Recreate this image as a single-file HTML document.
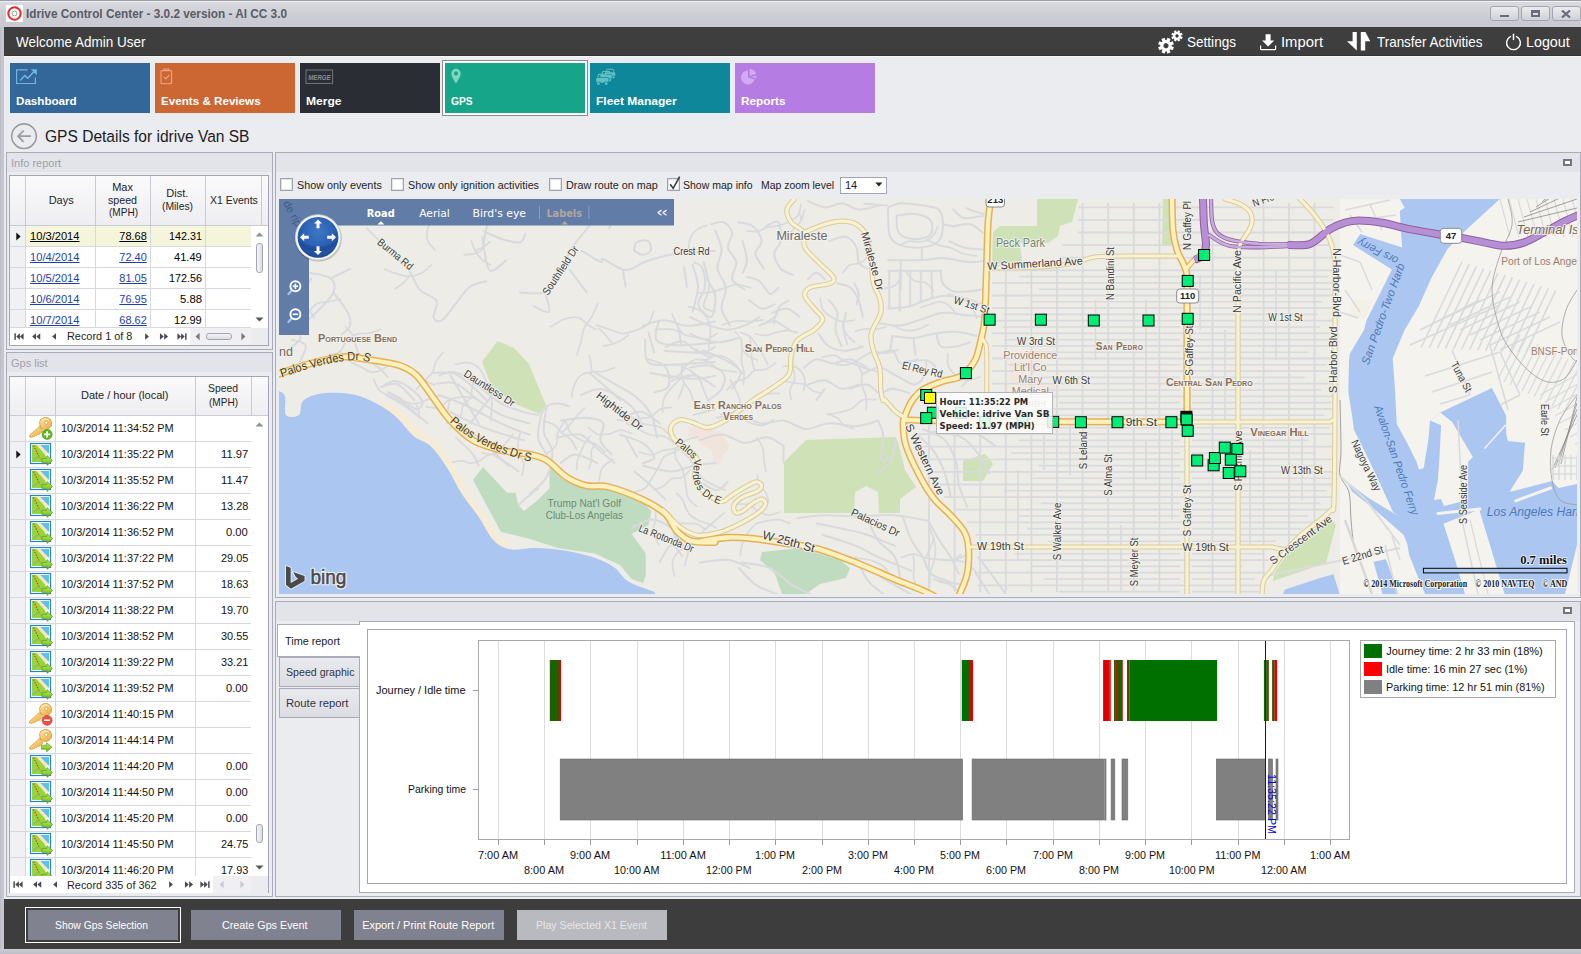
<!DOCTYPE html>
<html><head><meta charset="utf-8"><title>Idrive Control Center</title>
<style>
*{box-sizing:border-box;margin:0;padding:0}
html,body{width:1581px;height:954px;overflow:hidden}
body{background:#ebecf0;font-family:"Liberation Sans",sans-serif;font-size:11px;color:#1e1e1e;position:relative}
.abs{position:absolute}
.t{position:absolute;white-space:nowrap;line-height:1;transform-origin:0 0}
#titlebar{left:0;top:0;width:1581px;height:27px;background:linear-gradient(#9a9bab 0,#9a9bab 1px,#f1f1f4 1px,#f1f1f4 2px,#d9dade 2px,#d2d3d9 10px,#cbccd3 18px,#c9cad1 27px)}
#frameL{left:0;top:27px;width:4px;height:927px;background:linear-gradient(90deg,#bcbdc6 0,#bcbdc6 1px,#c7c8cf 1px,#c5c6cd 4px)}
#frameR{display:none}
#frameB{left:0;top:949px;width:1581px;height:5px;background:linear-gradient(#cfd0d6 0,#c5c6cd 2px,#c3c4cb 4px,#b6b7c0 5px)}
#hdr{left:4px;top:27px;width:1577px;height:29px;background:#3e3e3e}
.hdrt{color:#fff;font-size:15px;top:34px}
.tile{position:absolute;top:63px;width:140px;height:50px}
.tile b{position:absolute;left:6px;top:32px;font-size:11.5px;color:#fff;font-weight:bold;white-space:nowrap;line-height:1}
.wb{position:absolute;top:6px;width:29px;height:15px;border:1px solid #a4a5ae;border-radius:3px;background:linear-gradient(#ececf0,#d0d1d7)}
.panel{position:absolute;border:1px solid #a9abb8;background:#ebecf0}
.phead{position:absolute;left:0;top:0;right:0;height:19px;background:#e3e4e9;color:#a0a1a8;font-size:11px}
.phead span{position:absolute;left:4px;top:5px;line-height:1;white-space:nowrap}
.grid{position:absolute;border:1px solid #a3a5b3;background:#fff;overflow:hidden}
.gh{position:absolute;background:linear-gradient(#fafafb,#eeeef2);border-right:1px solid #c9cad3;border-bottom:1px solid #c9cad3;color:#1e1e1e;text-align:center;font-size:11px;line-height:12px;display:flex;align-items:center;justify-content:center}
.cell{position:absolute;height:21px;border-right:1px solid #d4d5dd;border-bottom:1px solid #d4d5dd;font-size:11px;line-height:20px;white-space:nowrap;overflow:hidden}
.r{text-align:right;padding-right:4px}
.l{padding-left:4px}
.lnk{color:#1f3fa8;text-decoration:underline}
.cb{position:absolute;top:178px;width:13px;height:13px;border:1px solid #a0a2b0;background:#fff;box-shadow:inset 0 0 0 1px #e1e2ea}
.cbl{top:180px;font-size:11px;color:#1e1e1e}
.btn{position:absolute;top:910px;width:150px;height:30px;background:#81828f;color:#fff;font-size:11px;text-align:center;line-height:30px;white-space:nowrap}
.tab{position:absolute;left:3px;width:80px;height:30px;border:1px solid #a9abb8;border-right:none;background:linear-gradient(#e9e9ee,#d9dae0);font-size:11px;color:#33343c;line-height:28px;padding-left:7px;white-space:nowrap}
</style></head><body>

<!-- sec_chrome -->
<div id="titlebar" class="abs"></div>
<svg class="abs" style="left:6px;top:5px" width="17" height="17" viewBox="0 0 17 17"><rect x="0" y="0" width="17" height="17" fill="#fff"/><circle cx="8.5" cy="8.5" r="6.2" fill="none" stroke="#e8262a" stroke-width="2"/><circle cx="8.5" cy="8.5" r="2.4" fill="none" stroke="#999" stroke-width="1"/></svg>
<div class="wb" style="left:1490px"><i class="abs" style="left:9px;top:8px;width:9px;height:2px;background:#6b6c7a"></i></div>
<div class="wb" style="left:1521px"><i class="abs" style="left:9px;top:3px;width:9px;height:7px;border:2px solid #6b6c7a;border-top-width:3px"></i></div>
<div class="wb" style="left:1552px;width:29px"><svg class="abs" style="left:8px;top:3px" width="10" height="8" viewBox="0 0 10 8"><path d="M1 0.5L9 7.5M9 0.5L1 7.5" stroke="#6b6c7a" stroke-width="2.2" fill="none"/></svg></div>
<div id="frameL" class="abs"></div><div id="frameR" class="abs"></div><div id="frameB" class="abs"></div>
<div id="hdr" class="abs"></div>
<div class="abs" style="left:4px;top:55px;width:1577px;height:1px;background:#343434"></div><div class="abs" style="left:4px;top:56px;width:1577px;height:1px;background:#f5f6fa"></div>
<!-- header icons -->
<svg class="abs" style="left:1156px;top:28px" width="28" height="27" viewBox="0 0 28 27" fill="#fff"><g transform="translate(10,17.7) rotate(22.5)"><circle r="5.6"/><rect x="-1.65" y="-7.90" width="3.30" height="3.50" transform="rotate(0)"/><rect x="-1.65" y="-7.90" width="3.30" height="3.50" transform="rotate(45)"/><rect x="-1.65" y="-7.90" width="3.30" height="3.50" transform="rotate(90)"/><rect x="-1.65" y="-7.90" width="3.30" height="3.50" transform="rotate(135)"/><rect x="-1.65" y="-7.90" width="3.30" height="3.50" transform="rotate(180)"/><rect x="-1.65" y="-7.90" width="3.30" height="3.50" transform="rotate(225)"/><rect x="-1.65" y="-7.90" width="3.30" height="3.50" transform="rotate(270)"/><rect x="-1.65" y="-7.90" width="3.30" height="3.50" transform="rotate(315)"/><circle r="2.5" fill="#3d3d3d"/></g><g transform="translate(21,7.9) rotate(22.5)"><circle r="3.8"/><rect x="-1.20" y="-5.60" width="2.40" height="3.00" transform="rotate(0)"/><rect x="-1.20" y="-5.60" width="2.40" height="3.00" transform="rotate(45)"/><rect x="-1.20" y="-5.60" width="2.40" height="3.00" transform="rotate(90)"/><rect x="-1.20" y="-5.60" width="2.40" height="3.00" transform="rotate(135)"/><rect x="-1.20" y="-5.60" width="2.40" height="3.00" transform="rotate(180)"/><rect x="-1.20" y="-5.60" width="2.40" height="3.00" transform="rotate(225)"/><rect x="-1.20" y="-5.60" width="2.40" height="3.00" transform="rotate(270)"/><rect x="-1.20" y="-5.60" width="2.40" height="3.00" transform="rotate(315)"/><circle r="1.7" fill="#3d3d3d"/></g></svg>
<svg class="abs" style="left:1259px;top:33px" width="18" height="18" viewBox="0 0 18 18"><path d="M6.6 1.3h5v6.3h3.6L9.1 13.6 3 7.6h3.6z" fill="#fff"/><path d="M1.6 12.4v3.4a.9.9 0 0 0 .9.9h13.2a.9.9 0 0 0 .9-.9v-3.4" fill="none" stroke="#fff" stroke-width="1.2"/></svg>
<svg class="abs" style="left:1346px;top:31px" width="26" height="21" viewBox="0 0 26 21" fill="#fff"><path d="M6.6 1h4.2v18.4L1 10.2h5.6z"/><path d="M14.8 19.4V1h4.6l4.9 9.2h-5.1v9.2z"/></svg>
<svg class="abs" style="left:1504px;top:33px" width="19" height="19" viewBox="0 0 19 19"><path d="M6.4 3.6a6.9 6.9 0 1 0 6.2 0" fill="none" stroke="#fff" stroke-width="1.4" stroke-linecap="round"/><path d="M9.5 1.2v5.2" stroke="#fff" stroke-width="1.5" stroke-linecap="round"/></svg>

<div class="t" style="left:26.00px;top:8.14px;font-size:12px;font-weight:700;color:#5a5b66;transform:scaleX(0.9826);">Idrive Control Center - 3.0.2 version - Al CC 3.0</div>
<div class="t" style="left:16.00px;top:33.80px;font-size:15px;color:#ffffff;transform:scaleX(0.8997);">Welcome Admin User</div>
<div class="t" style="left:1187.20px;top:33.80px;font-size:15px;color:#ffffff;transform:scaleX(0.9040);">Settings</div>
<div class="t" style="left:1281.00px;top:33.80px;font-size:15px;color:#ffffff;transform:scaleX(0.9879);">Import</div>
<div class="t" style="left:1376.50px;top:33.80px;font-size:15px;color:#ffffff;transform:scaleX(0.8955);">Transfer Activities</div>
<div class="t" style="left:1526.30px;top:33.80px;font-size:15px;color:#ffffff;transform:scaleX(0.9523);">Logout</div>
<div class="abs" style="left:442px;top:60px;width:146px;height:56px;border:1px solid #8c8d94;background:#fff"></div>
<div class="tile" style="left:10px;background:#336699"></div>
<div class="t" style="left:16.00px;top:95.57px;font-size:11.5px;font-weight:700;color:#ffffff;transform:scaleX(1.0104);">Dashboard</div>
<div class="tile" style="left:155px;background:#cc6633"></div>
<div class="t" style="left:161.00px;top:95.57px;font-size:11.5px;font-weight:700;color:#ffffff;transform:scaleX(1.0118);">Events &amp; Reviews</div>
<div class="tile" style="left:300px;background:#2a2d34"></div>
<div class="t" style="left:306.00px;top:95.57px;font-size:11.5px;font-weight:700;color:#ffffff;transform:scaleX(1.0509);">Merge</div>
<div class="tile" style="left:445px;background:#17a589"></div>
<div class="t" style="left:451.00px;top:95.57px;font-size:11.5px;font-weight:700;color:#ffffff;transform:scaleX(0.8890);">GPS</div>
<div class="tile" style="left:590px;background:#0d8799"></div>
<div class="t" style="left:596.00px;top:95.57px;font-size:11.5px;font-weight:700;color:#ffffff;transform:scaleX(1.0436);">Fleet Manager</div>
<div class="tile" style="left:735px;background:#b57de3"></div>
<div class="t" style="left:741.00px;top:95.57px;font-size:11.5px;font-weight:700;color:#ffffff;transform:scaleX(1.0264);">Reports</div>
<!-- tile icons -->
<svg class="abs" style="left:15px;top:68px" width="24" height="18" viewBox="0 0 24 18" fill="none" stroke="#6fb6e6" stroke-width="1.2"><path d="M12.6 1.9H1.6v13.6h18.8V9.4"/><path d="M5.2 12.4l4.6-4.8 3 2.6 6.8-7.2" stroke-width="1.5"/><path d="M15.8 1.2h6v6z" fill="#6fb6e6" stroke="none"/></svg>
<svg class="abs" style="left:160px;top:68px" width="13" height="17" viewBox="0 0 13 17" fill="none" stroke="#eea585" stroke-width="1.1"><rect x="1" y="2.6" width="10.6" height="13.2" rx="1"/><path d="M4 2.4V1h4.8v1.4" /><path d="M3.8 8.8l2 2 3.4-3.8" stroke-width="1.2"/></svg>
<svg class="abs" style="left:305px;top:69px" width="29" height="16" viewBox="0 0 29 16"><rect x="1" y="1" width="26.6" height="13.4" fill="none" stroke="#74777e" stroke-width="1"/><text x="3.2" y="11" font-family="Liberation Sans, sans-serif" font-size="7.6" font-weight="700" font-style="italic" fill="#8a8d93" textLength="22.5" lengthAdjust="spacingAndGlyphs">MERGE</text></svg>
<svg class="abs" style="left:450px;top:68px" width="12" height="17" viewBox="0 0 12 17"><path d="M6 .8a4.7 4.7 0 0 0-4.7 4.7C1.3 9 6 15.6 6 15.6S10.7 9 10.7 5.5A4.7 4.7 0 0 0 6 .8zm0 2.7a2 2 0 1 1 0 4 2 2 0 0 1 0-4z" fill="#7fd4bd" fill-rule="evenodd"/></svg>
<svg class="abs" style="left:595px;top:67px" width="24" height="19" viewBox="0 0 24 19" fill="#62c1c4"><g transform="translate(9.4,1.2) scale(.86)" stroke="#0d8799" stroke-width="1.4" paint-order="stroke"><path d="M1.6 5.2L3 1.2h7L11.4 5.2" fill="none" stroke="#62c1c4" stroke-width="1.1"/><rect x=".3" y="4.8" width="12.4" height="5" rx="1.3"/><rect x="1.3" y="9.4" width="2.6" height="2.3"/><rect x="9.1" y="9.4" width="2.6" height="2.3"/></g><g transform="translate(5,3.4) scale(.93)" stroke="#0d8799" stroke-width="1.4" paint-order="stroke"><path d="M1.6 5.2L3 1.2h7L11.4 5.2" fill="none" stroke="#62c1c4" stroke-width="1.1"/><rect x=".3" y="4.8" width="12.4" height="5" rx="1.3"/><rect x="1.3" y="9.4" width="2.6" height="2.3"/><rect x="9.1" y="9.4" width="2.6" height="2.3"/></g><g transform="translate(.8,6)" stroke="#0d8799" stroke-width="1.4" paint-order="stroke"><path d="M1.6 5.2L3 1.2h7L11.4 5.2" fill="none" stroke="#62c1c4" stroke-width="1.1"/><rect x=".3" y="4.8" width="12.4" height="5" rx="1.3"/><rect x="1.3" y="9.4" width="2.6" height="2.3"/><rect x="9.1" y="9.4" width="2.6" height="2.3"/></g></svg>
<svg class="abs" style="left:740px;top:68px" width="18" height="18" viewBox="0 0 18 18" fill="#d2aaf0"><path d="M8 2.4A7 7 0 1 0 14.6 11.6L8 9.4z"/><path d="M9.6 1a7 7 0 0 1 6.6 4.8L9.6 8z"/><path d="M16.4 7.4a7 7 0 0 1 .1 3.2L10.8 9z" opacity=".8"/></svg>

<svg class="abs" style="left:10px;top:122px" width="28" height="28" viewBox="0 0 28 28"><circle cx="14" cy="14.2" r="12.3" fill="none" stroke="#9b9b9f" stroke-width="1.6"/><path d="M21 14.2H8.2M13.6 8.6L8 14.2l5.6 5.6" fill="none" stroke="#9b9b9f" stroke-width="1.7"/></svg>
<div class="t" style="left:45.40px;top:127.80px;font-size:16.3px;color:#1b1b25;transform:scaleX(0.9549);">GPS Details for idrive Van SB</div>
<!-- sec_left -->
<div class="panel" style="left:6px;top:152px;width:267px;height:198px"><div class="phead"><span>Info report</span></div></div>
<div class="grid" style="left:9px;top:175px;width:260px;height:171px"></div>
<div class="gh" style="left:10px;top:176px;width:16px;height:50px;"></div>
<div class="gh" style="left:26px;top:176px;width:70px;height:50px;"></div>
<div class="gh" style="left:96px;top:176px;width:55px;height:50px;"></div>
<div class="gh" style="left:151px;top:176px;width:55px;height:50px;"></div>
<div class="gh" style="left:206px;top:176px;width:56px;height:50px;"></div>
<div class="gh" style="left:262px;top:176px;width:6px;height:50px;border-right:none"></div>
<div class="t" style="left:48.67px;top:194.69px;font-size:11px;">Days</div>
<div class="t" style="left:112.21px;top:181.69px;font-size:11px;">Max</div>
<div class="t" style="left:108.30px;top:194.69px;font-size:11px;transform:scaleX(0.9672);">speed</div>
<div class="t" style="left:108.50px;top:207.29px;font-size:11px;transform:scaleX(0.9125);">(MPH)</div>
<div class="t" style="left:166.30px;top:188.49px;font-size:11px;">Dist.</div>
<div class="t" style="left:162.10px;top:201.49px;font-size:11px;transform:scaleX(0.9394);">(Miles)</div>
<div class="t" style="left:209.60px;top:194.69px;font-size:11px;transform:scaleX(0.9533);">X1 Events</div>
<div class="abs" style="left:10px;top:226px;width:16px;height:21px;background:#f1f1f5;border-right:1px solid #d6d7df;border-bottom:1px solid #d6d7df"></div>
<div class="abs" style="left:26px;top:226px;width:70px;height:21px;background:#f5f5dc;border-right:1px solid #d6d7df;border-bottom:1px solid #d6d7df"></div>
<div class="abs" style="left:96px;top:226px;width:55px;height:21px;background:#f5f5dc;border-right:1px solid #d6d7df;border-bottom:1px solid #d6d7df"></div>
<div class="abs" style="left:151px;top:226px;width:55px;height:21px;background:#f5f5dc;border-right:1px solid #d6d7df;border-bottom:1px solid #d6d7df"></div>
<div class="abs" style="left:206px;top:226px;width:45px;height:21px;background:#f5f5dc;border-bottom:1px solid #d6d7df"></div>
<div class="t" style="left:30.40px;top:230.89px;font-size:11px;color:#000;transform:scaleX(1.0115);text-decoration:underline;">10/3/2014</div>
<div class="t" style="left:119.30px;top:230.89px;font-size:11px;color:#000;text-decoration:underline;">78.68</div>
<div class="t" style="left:168.60px;top:230.89px;font-size:11px;color:#000;transform:scaleX(0.9805);">142.31</div>
<div class="abs" style="left:10px;top:247px;width:16px;height:21px;background:#f1f1f5;border-right:1px solid #d6d7df;border-bottom:1px solid #d6d7df"></div>
<div class="abs" style="left:26px;top:247px;width:70px;height:21px;background:#fff;border-right:1px solid #d6d7df;border-bottom:1px solid #d6d7df"></div>
<div class="abs" style="left:96px;top:247px;width:55px;height:21px;background:#fff;border-right:1px solid #d6d7df;border-bottom:1px solid #d6d7df"></div>
<div class="abs" style="left:151px;top:247px;width:55px;height:21px;background:#fff;border-right:1px solid #d6d7df;border-bottom:1px solid #d6d7df"></div>
<div class="abs" style="left:206px;top:247px;width:45px;height:21px;background:#fff;border-bottom:1px solid #d6d7df"></div>
<div class="t" style="left:30.40px;top:251.89px;font-size:11px;color:#1f3fa8;transform:scaleX(1.0115);text-decoration:underline;">10/4/2014</div>
<div class="t" style="left:119.30px;top:251.89px;font-size:11px;color:#1f3fa8;text-decoration:underline;">72.40</div>
<div class="t" style="left:174.10px;top:251.89px;font-size:11px;color:#000;">41.49</div>
<div class="abs" style="left:10px;top:268px;width:16px;height:21px;background:#f1f1f5;border-right:1px solid #d6d7df;border-bottom:1px solid #d6d7df"></div>
<div class="abs" style="left:26px;top:268px;width:70px;height:21px;background:#fff;border-right:1px solid #d6d7df;border-bottom:1px solid #d6d7df"></div>
<div class="abs" style="left:96px;top:268px;width:55px;height:21px;background:#fff;border-right:1px solid #d6d7df;border-bottom:1px solid #d6d7df"></div>
<div class="abs" style="left:151px;top:268px;width:55px;height:21px;background:#fff;border-right:1px solid #d6d7df;border-bottom:1px solid #d6d7df"></div>
<div class="abs" style="left:206px;top:268px;width:45px;height:21px;background:#fff;border-bottom:1px solid #d6d7df"></div>
<div class="t" style="left:30.40px;top:272.89px;font-size:11px;color:#1f3fa8;transform:scaleX(1.0115);text-decoration:underline;">10/5/2014</div>
<div class="t" style="left:119.30px;top:272.89px;font-size:11px;color:#1f3fa8;text-decoration:underline;">81.05</div>
<div class="t" style="left:168.60px;top:272.89px;font-size:11px;color:#000;transform:scaleX(0.9805);">172.56</div>
<div class="abs" style="left:10px;top:289px;width:16px;height:21px;background:#f1f1f5;border-right:1px solid #d6d7df;border-bottom:1px solid #d6d7df"></div>
<div class="abs" style="left:26px;top:289px;width:70px;height:21px;background:#fff;border-right:1px solid #d6d7df;border-bottom:1px solid #d6d7df"></div>
<div class="abs" style="left:96px;top:289px;width:55px;height:21px;background:#fff;border-right:1px solid #d6d7df;border-bottom:1px solid #d6d7df"></div>
<div class="abs" style="left:151px;top:289px;width:55px;height:21px;background:#fff;border-right:1px solid #d6d7df;border-bottom:1px solid #d6d7df"></div>
<div class="abs" style="left:206px;top:289px;width:45px;height:21px;background:#fff;border-bottom:1px solid #d6d7df"></div>
<div class="t" style="left:30.40px;top:293.89px;font-size:11px;color:#1f3fa8;transform:scaleX(1.0115);text-decoration:underline;">10/6/2014</div>
<div class="t" style="left:119.30px;top:293.89px;font-size:11px;color:#1f3fa8;text-decoration:underline;">76.95</div>
<div class="t" style="left:179.60px;top:293.89px;font-size:11px;color:#000;transform:scaleX(1.0270);">5.88</div>
<div class="abs" style="left:10px;top:310px;width:16px;height:18px;background:#f1f1f5;border-right:1px solid #d6d7df;border-bottom:1px solid #d6d7df"></div>
<div class="abs" style="left:26px;top:310px;width:70px;height:18px;background:#fff;border-right:1px solid #d6d7df;border-bottom:1px solid #d6d7df"></div>
<div class="abs" style="left:96px;top:310px;width:55px;height:18px;background:#fff;border-right:1px solid #d6d7df;border-bottom:1px solid #d6d7df"></div>
<div class="abs" style="left:151px;top:310px;width:55px;height:18px;background:#fff;border-right:1px solid #d6d7df;border-bottom:1px solid #d6d7df"></div>
<div class="abs" style="left:206px;top:310px;width:45px;height:18px;background:#fff;border-bottom:1px solid #d6d7df"></div>
<div class="t" style="left:30.40px;top:314.89px;font-size:11px;color:#1f3fa8;transform:scaleX(1.0115);text-decoration:underline;">10/7/2014</div>
<div class="t" style="left:119.30px;top:314.89px;font-size:11px;color:#1f3fa8;text-decoration:underline;">68.62</div>
<div class="t" style="left:174.10px;top:314.89px;font-size:11px;color:#000;">12.99</div>
<svg class="abs" style="left:16px;top:232px" width="5" height="9" viewBox="0 0 5 9"><path d="M.3 .5v8L4.6 4.5z" fill="#111"/></svg>
<div class="abs" style="left:251px;top:226px;width:17px;height:102px;background:#fff"></div>
<svg class="abs" style="left:255px;top:232px" width="9" height="5" viewBox="0 0 9 5"><path d="M.5 4.6h8L4.5 .6z" fill="#8e909c"/></svg>
<svg class="abs" style="left:255px;top:317px" width="9" height="5" viewBox="0 0 9 5"><path d="M.5 .4h8l-4 4z" fill="#55565f"/></svg>
<div class="abs" style="left:256px;top:243px;width:7px;height:30px;border:1px solid #a3a5b3;border-radius:3px;background:linear-gradient(90deg,#f4f4f7,#dcdde3)"></div>
<div class="abs" style="left:10px;top:328px;width:258px;height:17px;background:#fff"></div>
<div class="abs" style="left:190px;top:328px;width:61px;height:17px;background:#f0f0f4"></div>
<div class="abs" style="left:251px;top:328px;width:17px;height:17px;background:#ebecf0"></div>
<svg class="abs" style="left:13.5px;top:332px" width="12" height="9" viewBox="0 0 12 9" fill="#484956"><g transform="translate(.4 .9) scale(.92 .82)"><rect x="0" y="0.5" width="1.6" height="8"/><path d="M6 .5v8L2 4.5zM10 .5v8L6 4.5z"/></g></svg>
<svg class="abs" style="left:31px;top:332px" width="12" height="9" viewBox="0 0 12 9" fill="#484956"><g transform="translate(.4 .9) scale(.92 .82)"><path d="M5 .5v8L.8 4.5zM9.6 .5v8L5.4 4.5z"/></g></svg>
<svg class="abs" style="left:51px;top:332px" width="12" height="9" viewBox="0 0 12 9" fill="#484956"><g transform="translate(.4 .9) scale(.92 .82)"><path d="M5 .5v8L.8 4.5z"/></g></svg>
<svg class="abs" style="left:144px;top:332px" width="12" height="9" viewBox="0 0 12 9" fill="#484956"><g transform="translate(.4 .9) scale(.92 .82)"><path d="M.8 .5v8L5 4.5z"/></g></svg>
<svg class="abs" style="left:159px;top:332px" width="12" height="9" viewBox="0 0 12 9" fill="#484956"><g transform="translate(.4 .9) scale(.92 .82)"><path d="M.6 .5v8l4.2-4zM5.2 .5v8l4.2-4z"/></g></svg>
<svg class="abs" style="left:176.5px;top:332px" width="12" height="9" viewBox="0 0 12 9" fill="#484956"><g transform="translate(.4 .9) scale(.92 .82)"><path d="M0 .5v8l4-4zM4 .5v8l4-4z"/><rect x="8.4" y=".5" width="1.6" height="8"/></g></svg>
<div class="t" style="left:67.10px;top:330.99px;font-size:11px;transform:scaleX(0.9902);">Record 1 of 8</div>
<svg class="abs" style="left:195px;top:332px" width="5" height="9" viewBox="0 0 5 9"><path d="M4.6 .8v7.4L.6 4.5z" fill="#777985"/></svg>
<svg class="abs" style="left:241px;top:332px" width="5" height="9" viewBox="0 0 5 9"><path d="M.4 .8v7.4l4-3.7z" fill="#777985"/></svg>
<div class="abs" style="left:206px;top:333px;width:26px;height:7px;border:1px solid #a3a5b3;border-radius:3px;background:linear-gradient(#f4f4f7,#dcdde3)"></div>
<div class="panel" style="left:6px;top:352px;width:267px;height:545px"><div class="phead"><span>Gps list</span></div></div>
<div class="grid" style="left:9px;top:376px;width:260px;height:517px"></div>
<div class="gh" style="left:10px;top:377px;width:16px;height:39px;"></div>
<div class="gh" style="left:26px;top:377px;width:30px;height:39px;"></div>
<div class="gh" style="left:56px;top:377px;width:140px;height:39px;"></div>
<div class="gh" style="left:196px;top:377px;width:56px;height:39px;"></div>
<div class="gh" style="left:252px;top:377px;width:16px;height:39px;border-right:none"></div>
<div class="t" style="left:80.95px;top:390.49px;font-size:11px;">Date / hour (local)</div>
<div class="t" style="left:208.30px;top:383.49px;font-size:11px;transform:scaleX(0.9430);">Speed</div>
<div class="t" style="left:208.80px;top:396.69px;font-size:11px;transform:scaleX(0.9125);">(MPH)</div>
<svg width="0" height="0" style="position:absolute"><defs>
<linearGradient id="kg" x1="0" y1="0" x2="1" y2="1"><stop offset="0" stop-color="#fde7a6"/><stop offset="1" stop-color="#e9a93a"/></linearGradient>
<linearGradient id="ag" x1="0" y1="0" x2="0" y2="1"><stop offset="0" stop-color="#c6ec58"/><stop offset="1" stop-color="#66b516"/></linearGradient>
<g id="ikey" transform="translate(-.8 .9)"><path d="M12.4 9.4L2.2 18.6 2.3 20 4.5 20.6 5.9 19.6 6.9 20 8.3 18.7 9.3 18.9 10.7 17.5 11.7 17.7 15.9 13.8z" fill="url(#kg)" stroke="#d19633" stroke-width=".7" stroke-linejoin="round"/><path d="M13.6 2.6l3.2-1.9h3.4l3 1.9 1.3 3.1-.5 3.5-2.4 2.6-3.4.9-3.4-1.1-2-2.8-.4-3.6z" fill="url(#kg)" stroke="#d19633" stroke-width=".8" stroke-linejoin="round"/><path d="M14.2 4.2l2.6-2h3l2.4 1.5" fill="none" stroke="#fff3c8" stroke-width="1" opacity=".8"/><circle cx="19.1" cy="5.9" r="1.5" fill="#fff" stroke="#c98f30" stroke-width=".6"/></g>
<g id="ikp"><use href="#ikey"/><circle cx="19.1" cy="18.4" r="5" fill="#5cb81e" stroke="#3f9110" stroke-width=".6"/><path d="M19.1 15.3v6.2M16 18.4h6.2" stroke="#fff" stroke-width="1.8"/></g>
<g id="ikm"><use href="#ikey"/><circle cx="19.1" cy="18.4" r="5" fill="#ea5043" stroke="#cf3a2e" stroke-width=".6"/><path d="M16.2 18.2h5.8" stroke="#fff" stroke-width="1.6"/></g>
<g id="ika"><use href="#ikey"/><path d="M13.4 17.2h5.2v-2.6l5.4 4.6-5.4 4.6v-2.6h-5.2z" fill="url(#ag)" stroke="#4c9410" stroke-width=".6"/></g>
<g id="imap"><rect x="2.5" y="1.5" width="20" height="20" fill="#fff" stroke="#2a84c0" stroke-width="1.2"/><rect x="4" y="3" width="17" height="17" fill="#97d638"/><path d="M8.5 3H21v14z" fill="#fbe6c0"/><path d="M12.5 3H21v9z" fill="#5cc1f1"/><path d="M17 13l4-1.5V17z" fill="#fff"/><path d="M5.5 3.5l5.5 11" stroke="#e8281c" stroke-width="1.1" stroke-dasharray="1.4 1.4" fill="none"/><path d="M5 18.5l5.5-4 3 3.5" stroke="#9a9a9a" stroke-width=".9" fill="none"/><path d="M14 16.4h5v-2.8l5.6 4.9-5.6 4.9v-2.8h-5z" fill="url(#ag)" stroke="#4c9410" stroke-width=".6"/></g>
</defs></svg>
<div class="abs" style="left:10px;top:416px;width:16px;height:26px;background:#f1f1f5;border-right:1px solid #d6d7df;border-bottom:1px solid #d6d7df"></div>
<div class="abs" style="left:26px;top:416px;width:30px;height:26px;border-right:1px solid #d6d7df;border-bottom:1px solid #d6d7df"></div>
<div class="abs" style="left:56px;top:416px;width:140px;height:26px;border-right:1px solid #d6d7df;border-bottom:1px solid #d6d7df"></div>
<div class="abs" style="left:196px;top:416px;width:55px;height:26px;border-bottom:1px solid #d6d7df"></div>
<svg class="abs" style="left:28px;top:416px" width="26" height="26" viewBox="0 0 26 26"><use href="#ikp"/></svg>
<div class="t" style="left:60.70px;top:422.89px;font-size:11px;color:#111;transform:scaleX(0.9915);">10/3/2014 11:34:52 PM</div>
<div class="abs" style="left:10px;top:442px;width:16px;height:26px;background:#f1f1f5;border-right:1px solid #d6d7df;border-bottom:1px solid #d6d7df"></div>
<div class="abs" style="left:26px;top:442px;width:30px;height:26px;border-right:1px solid #d6d7df;border-bottom:1px solid #d6d7df"></div>
<div class="abs" style="left:56px;top:442px;width:140px;height:26px;border-right:1px solid #d6d7df;border-bottom:1px solid #d6d7df"></div>
<div class="abs" style="left:196px;top:442px;width:55px;height:26px;border-bottom:1px solid #d6d7df"></div>
<svg class="abs" style="left:28px;top:442px" width="26" height="26" viewBox="0 0 26 26"><use href="#imap"/></svg>
<div class="t" style="left:60.70px;top:448.89px;font-size:11px;color:#111;transform:scaleX(0.9915);">10/3/2014 11:35:22 PM</div>
<div class="t" style="left:220.55px;top:448.89px;font-size:11px;color:#111;transform:scaleX(1.0199);">11.97</div>
<div class="abs" style="left:10px;top:468px;width:16px;height:26px;background:#f1f1f5;border-right:1px solid #d6d7df;border-bottom:1px solid #d6d7df"></div>
<div class="abs" style="left:26px;top:468px;width:30px;height:26px;border-right:1px solid #d6d7df;border-bottom:1px solid #d6d7df"></div>
<div class="abs" style="left:56px;top:468px;width:140px;height:26px;border-right:1px solid #d6d7df;border-bottom:1px solid #d6d7df"></div>
<div class="abs" style="left:196px;top:468px;width:55px;height:26px;border-bottom:1px solid #d6d7df"></div>
<svg class="abs" style="left:28px;top:468px" width="26" height="26" viewBox="0 0 26 26"><use href="#imap"/></svg>
<div class="t" style="left:60.70px;top:474.89px;font-size:11px;color:#111;transform:scaleX(0.9915);">10/3/2014 11:35:52 PM</div>
<div class="t" style="left:220.55px;top:474.89px;font-size:11px;color:#111;transform:scaleX(1.0199);">11.47</div>
<div class="abs" style="left:10px;top:494px;width:16px;height:26px;background:#f1f1f5;border-right:1px solid #d6d7df;border-bottom:1px solid #d6d7df"></div>
<div class="abs" style="left:26px;top:494px;width:30px;height:26px;border-right:1px solid #d6d7df;border-bottom:1px solid #d6d7df"></div>
<div class="abs" style="left:56px;top:494px;width:140px;height:26px;border-right:1px solid #d6d7df;border-bottom:1px solid #d6d7df"></div>
<div class="abs" style="left:196px;top:494px;width:55px;height:26px;border-bottom:1px solid #d6d7df"></div>
<svg class="abs" style="left:28px;top:494px" width="26" height="26" viewBox="0 0 26 26"><use href="#imap"/></svg>
<div class="t" style="left:60.70px;top:500.89px;font-size:11px;color:#111;transform:scaleX(0.9915);">10/3/2014 11:36:22 PM</div>
<div class="t" style="left:220.55px;top:500.89px;font-size:11px;color:#111;transform:scaleX(0.9898);">13.28</div>
<div class="abs" style="left:10px;top:520px;width:16px;height:26px;background:#f1f1f5;border-right:1px solid #d6d7df;border-bottom:1px solid #d6d7df"></div>
<div class="abs" style="left:26px;top:520px;width:30px;height:26px;border-right:1px solid #d6d7df;border-bottom:1px solid #d6d7df"></div>
<div class="abs" style="left:56px;top:520px;width:140px;height:26px;border-right:1px solid #d6d7df;border-bottom:1px solid #d6d7df"></div>
<div class="abs" style="left:196px;top:520px;width:55px;height:26px;border-bottom:1px solid #d6d7df"></div>
<svg class="abs" style="left:28px;top:520px" width="26" height="26" viewBox="0 0 26 26"><use href="#imap"/></svg>
<div class="t" style="left:60.70px;top:526.89px;font-size:11px;color:#111;transform:scaleX(0.9915);">10/3/2014 11:36:52 PM</div>
<div class="t" style="left:226.00px;top:526.89px;font-size:11px;color:#111;transform:scaleX(1.0177);">0.00</div>
<div class="abs" style="left:10px;top:546px;width:16px;height:26px;background:#f1f1f5;border-right:1px solid #d6d7df;border-bottom:1px solid #d6d7df"></div>
<div class="abs" style="left:26px;top:546px;width:30px;height:26px;border-right:1px solid #d6d7df;border-bottom:1px solid #d6d7df"></div>
<div class="abs" style="left:56px;top:546px;width:140px;height:26px;border-right:1px solid #d6d7df;border-bottom:1px solid #d6d7df"></div>
<div class="abs" style="left:196px;top:546px;width:55px;height:26px;border-bottom:1px solid #d6d7df"></div>
<svg class="abs" style="left:28px;top:546px" width="26" height="26" viewBox="0 0 26 26"><use href="#imap"/></svg>
<div class="t" style="left:60.70px;top:552.89px;font-size:11px;color:#111;transform:scaleX(0.9915);">10/3/2014 11:37:22 PM</div>
<div class="t" style="left:220.55px;top:552.89px;font-size:11px;color:#111;transform:scaleX(0.9898);">29.05</div>
<div class="abs" style="left:10px;top:572px;width:16px;height:26px;background:#f1f1f5;border-right:1px solid #d6d7df;border-bottom:1px solid #d6d7df"></div>
<div class="abs" style="left:26px;top:572px;width:30px;height:26px;border-right:1px solid #d6d7df;border-bottom:1px solid #d6d7df"></div>
<div class="abs" style="left:56px;top:572px;width:140px;height:26px;border-right:1px solid #d6d7df;border-bottom:1px solid #d6d7df"></div>
<div class="abs" style="left:196px;top:572px;width:55px;height:26px;border-bottom:1px solid #d6d7df"></div>
<svg class="abs" style="left:28px;top:572px" width="26" height="26" viewBox="0 0 26 26"><use href="#imap"/></svg>
<div class="t" style="left:60.70px;top:578.89px;font-size:11px;color:#111;transform:scaleX(0.9915);">10/3/2014 11:37:52 PM</div>
<div class="t" style="left:220.55px;top:578.89px;font-size:11px;color:#111;transform:scaleX(0.9898);">18.63</div>
<div class="abs" style="left:10px;top:598px;width:16px;height:26px;background:#f1f1f5;border-right:1px solid #d6d7df;border-bottom:1px solid #d6d7df"></div>
<div class="abs" style="left:26px;top:598px;width:30px;height:26px;border-right:1px solid #d6d7df;border-bottom:1px solid #d6d7df"></div>
<div class="abs" style="left:56px;top:598px;width:140px;height:26px;border-right:1px solid #d6d7df;border-bottom:1px solid #d6d7df"></div>
<div class="abs" style="left:196px;top:598px;width:55px;height:26px;border-bottom:1px solid #d6d7df"></div>
<svg class="abs" style="left:28px;top:598px" width="26" height="26" viewBox="0 0 26 26"><use href="#imap"/></svg>
<div class="t" style="left:60.70px;top:604.89px;font-size:11px;color:#111;transform:scaleX(0.9915);">10/3/2014 11:38:22 PM</div>
<div class="t" style="left:220.55px;top:604.89px;font-size:11px;color:#111;transform:scaleX(0.9898);">19.70</div>
<div class="abs" style="left:10px;top:624px;width:16px;height:26px;background:#f1f1f5;border-right:1px solid #d6d7df;border-bottom:1px solid #d6d7df"></div>
<div class="abs" style="left:26px;top:624px;width:30px;height:26px;border-right:1px solid #d6d7df;border-bottom:1px solid #d6d7df"></div>
<div class="abs" style="left:56px;top:624px;width:140px;height:26px;border-right:1px solid #d6d7df;border-bottom:1px solid #d6d7df"></div>
<div class="abs" style="left:196px;top:624px;width:55px;height:26px;border-bottom:1px solid #d6d7df"></div>
<svg class="abs" style="left:28px;top:624px" width="26" height="26" viewBox="0 0 26 26"><use href="#imap"/></svg>
<div class="t" style="left:60.70px;top:630.89px;font-size:11px;color:#111;transform:scaleX(0.9915);">10/3/2014 11:38:52 PM</div>
<div class="t" style="left:220.55px;top:630.89px;font-size:11px;color:#111;transform:scaleX(0.9898);">30.55</div>
<div class="abs" style="left:10px;top:650px;width:16px;height:26px;background:#f1f1f5;border-right:1px solid #d6d7df;border-bottom:1px solid #d6d7df"></div>
<div class="abs" style="left:26px;top:650px;width:30px;height:26px;border-right:1px solid #d6d7df;border-bottom:1px solid #d6d7df"></div>
<div class="abs" style="left:56px;top:650px;width:140px;height:26px;border-right:1px solid #d6d7df;border-bottom:1px solid #d6d7df"></div>
<div class="abs" style="left:196px;top:650px;width:55px;height:26px;border-bottom:1px solid #d6d7df"></div>
<svg class="abs" style="left:28px;top:650px" width="26" height="26" viewBox="0 0 26 26"><use href="#imap"/></svg>
<div class="t" style="left:60.70px;top:656.89px;font-size:11px;color:#111;transform:scaleX(0.9915);">10/3/2014 11:39:22 PM</div>
<div class="t" style="left:220.55px;top:656.89px;font-size:11px;color:#111;transform:scaleX(0.9898);">33.21</div>
<div class="abs" style="left:10px;top:676px;width:16px;height:26px;background:#f1f1f5;border-right:1px solid #d6d7df;border-bottom:1px solid #d6d7df"></div>
<div class="abs" style="left:26px;top:676px;width:30px;height:26px;border-right:1px solid #d6d7df;border-bottom:1px solid #d6d7df"></div>
<div class="abs" style="left:56px;top:676px;width:140px;height:26px;border-right:1px solid #d6d7df;border-bottom:1px solid #d6d7df"></div>
<div class="abs" style="left:196px;top:676px;width:55px;height:26px;border-bottom:1px solid #d6d7df"></div>
<svg class="abs" style="left:28px;top:676px" width="26" height="26" viewBox="0 0 26 26"><use href="#imap"/></svg>
<div class="t" style="left:60.70px;top:682.89px;font-size:11px;color:#111;transform:scaleX(0.9915);">10/3/2014 11:39:52 PM</div>
<div class="t" style="left:226.00px;top:682.89px;font-size:11px;color:#111;transform:scaleX(1.0177);">0.00</div>
<div class="abs" style="left:10px;top:702px;width:16px;height:26px;background:#f1f1f5;border-right:1px solid #d6d7df;border-bottom:1px solid #d6d7df"></div>
<div class="abs" style="left:26px;top:702px;width:30px;height:26px;border-right:1px solid #d6d7df;border-bottom:1px solid #d6d7df"></div>
<div class="abs" style="left:56px;top:702px;width:140px;height:26px;border-right:1px solid #d6d7df;border-bottom:1px solid #d6d7df"></div>
<div class="abs" style="left:196px;top:702px;width:55px;height:26px;border-bottom:1px solid #d6d7df"></div>
<svg class="abs" style="left:28px;top:702px" width="26" height="26" viewBox="0 0 26 26"><use href="#ikm"/></svg>
<div class="t" style="left:60.70px;top:708.89px;font-size:11px;color:#111;transform:scaleX(0.9915);">10/3/2014 11:40:15 PM</div>
<div class="abs" style="left:10px;top:728px;width:16px;height:26px;background:#f1f1f5;border-right:1px solid #d6d7df;border-bottom:1px solid #d6d7df"></div>
<div class="abs" style="left:26px;top:728px;width:30px;height:26px;border-right:1px solid #d6d7df;border-bottom:1px solid #d6d7df"></div>
<div class="abs" style="left:56px;top:728px;width:140px;height:26px;border-right:1px solid #d6d7df;border-bottom:1px solid #d6d7df"></div>
<div class="abs" style="left:196px;top:728px;width:55px;height:26px;border-bottom:1px solid #d6d7df"></div>
<svg class="abs" style="left:28px;top:728px" width="26" height="26" viewBox="0 0 26 26"><use href="#ika"/></svg>
<div class="t" style="left:60.70px;top:734.89px;font-size:11px;color:#111;transform:scaleX(0.9915);">10/3/2014 11:44:14 PM</div>
<div class="abs" style="left:10px;top:754px;width:16px;height:26px;background:#f1f1f5;border-right:1px solid #d6d7df;border-bottom:1px solid #d6d7df"></div>
<div class="abs" style="left:26px;top:754px;width:30px;height:26px;border-right:1px solid #d6d7df;border-bottom:1px solid #d6d7df"></div>
<div class="abs" style="left:56px;top:754px;width:140px;height:26px;border-right:1px solid #d6d7df;border-bottom:1px solid #d6d7df"></div>
<div class="abs" style="left:196px;top:754px;width:55px;height:26px;border-bottom:1px solid #d6d7df"></div>
<svg class="abs" style="left:28px;top:754px" width="26" height="26" viewBox="0 0 26 26"><use href="#imap"/></svg>
<div class="t" style="left:60.70px;top:760.89px;font-size:11px;color:#111;transform:scaleX(0.9915);">10/3/2014 11:44:20 PM</div>
<div class="t" style="left:226.00px;top:760.89px;font-size:11px;color:#111;transform:scaleX(1.0177);">0.00</div>
<div class="abs" style="left:10px;top:780px;width:16px;height:26px;background:#f1f1f5;border-right:1px solid #d6d7df;border-bottom:1px solid #d6d7df"></div>
<div class="abs" style="left:26px;top:780px;width:30px;height:26px;border-right:1px solid #d6d7df;border-bottom:1px solid #d6d7df"></div>
<div class="abs" style="left:56px;top:780px;width:140px;height:26px;border-right:1px solid #d6d7df;border-bottom:1px solid #d6d7df"></div>
<div class="abs" style="left:196px;top:780px;width:55px;height:26px;border-bottom:1px solid #d6d7df"></div>
<svg class="abs" style="left:28px;top:780px" width="26" height="26" viewBox="0 0 26 26"><use href="#imap"/></svg>
<div class="t" style="left:60.70px;top:786.89px;font-size:11px;color:#111;transform:scaleX(0.9915);">10/3/2014 11:44:50 PM</div>
<div class="t" style="left:226.00px;top:786.89px;font-size:11px;color:#111;transform:scaleX(1.0177);">0.00</div>
<div class="abs" style="left:10px;top:806px;width:16px;height:26px;background:#f1f1f5;border-right:1px solid #d6d7df;border-bottom:1px solid #d6d7df"></div>
<div class="abs" style="left:26px;top:806px;width:30px;height:26px;border-right:1px solid #d6d7df;border-bottom:1px solid #d6d7df"></div>
<div class="abs" style="left:56px;top:806px;width:140px;height:26px;border-right:1px solid #d6d7df;border-bottom:1px solid #d6d7df"></div>
<div class="abs" style="left:196px;top:806px;width:55px;height:26px;border-bottom:1px solid #d6d7df"></div>
<svg class="abs" style="left:28px;top:806px" width="26" height="26" viewBox="0 0 26 26"><use href="#imap"/></svg>
<div class="t" style="left:60.70px;top:812.89px;font-size:11px;color:#111;transform:scaleX(0.9915);">10/3/2014 11:45:20 PM</div>
<div class="t" style="left:226.00px;top:812.89px;font-size:11px;color:#111;transform:scaleX(1.0177);">0.00</div>
<div class="abs" style="left:10px;top:832px;width:16px;height:26px;background:#f1f1f5;border-right:1px solid #d6d7df;border-bottom:1px solid #d6d7df"></div>
<div class="abs" style="left:26px;top:832px;width:30px;height:26px;border-right:1px solid #d6d7df;border-bottom:1px solid #d6d7df"></div>
<div class="abs" style="left:56px;top:832px;width:140px;height:26px;border-right:1px solid #d6d7df;border-bottom:1px solid #d6d7df"></div>
<div class="abs" style="left:196px;top:832px;width:55px;height:26px;border-bottom:1px solid #d6d7df"></div>
<svg class="abs" style="left:28px;top:832px" width="26" height="26" viewBox="0 0 26 26"><use href="#imap"/></svg>
<div class="t" style="left:60.70px;top:838.89px;font-size:11px;color:#111;transform:scaleX(0.9915);">10/3/2014 11:45:50 PM</div>
<div class="t" style="left:220.55px;top:838.89px;font-size:11px;color:#111;transform:scaleX(0.9898);">24.75</div>
<div class="abs" style="left:10px;top:858px;width:16px;height:19px;background:#f1f1f5;border-right:1px solid #d6d7df;border-bottom:1px solid #d6d7df"></div>
<div class="abs" style="left:26px;top:858px;width:30px;height:19px;border-right:1px solid #d6d7df;border-bottom:1px solid #d6d7df"></div>
<div class="abs" style="left:56px;top:858px;width:140px;height:19px;border-right:1px solid #d6d7df;border-bottom:1px solid #d6d7df"></div>
<div class="abs" style="left:196px;top:858px;width:55px;height:19px;border-bottom:1px solid #d6d7df"></div>
<svg class="abs" style="left:28px;top:858px" width="26" height="18" viewBox="0 0 26 18"><use href="#imap"/></svg>
<div class="t" style="left:60.70px;top:864.89px;font-size:11px;color:#111;transform:scaleX(0.9915);">10/3/2014 11:46:20 PM</div>
<div class="t" style="left:220.55px;top:864.89px;font-size:11px;color:#111;transform:scaleX(0.9898);">17.93</div>
<svg class="abs" style="left:16px;top:450px" width="5" height="9" viewBox="0 0 5 9"><path d="M.3 .5v8L4.6 4.5z" fill="#111"/></svg>
<div class="abs" style="left:251px;top:416px;width:17px;height:459px;background:#fff"></div>
<svg class="abs" style="left:255px;top:422px" width="9" height="5" viewBox="0 0 9 5"><path d="M.5 4.6h8L4.5 .6z" fill="#8e909c"/></svg>
<svg class="abs" style="left:255px;top:865px" width="9" height="5" viewBox="0 0 9 5"><path d="M.5 .4h8l-4 4z" fill="#55565f"/></svg>
<div class="abs" style="left:256px;top:824px;width:7px;height:19px;border:1px solid #a3a5b3;border-radius:3px;background:linear-gradient(90deg,#f4f4f7,#dcdde3)"></div>
<div class="abs" style="left:10px;top:876px;width:258px;height:17px;background:#fff"></div>
<div class="abs" style="left:213px;top:876px;width:38px;height:17px;background:#f0f0f4"></div>
<div class="abs" style="left:251px;top:876px;width:17px;height:17px;background:#ebecf0"></div>
<svg class="abs" style="left:13px;top:880px" width="12" height="9" viewBox="0 0 12 9" fill="#484956"><g transform="translate(.4 .9) scale(.92 .82)"><rect x="0" y="0.5" width="1.6" height="8"/><path d="M6 .5v8L2 4.5zM10 .5v8L6 4.5z"/></g></svg>
<svg class="abs" style="left:32px;top:880px" width="12" height="9" viewBox="0 0 12 9" fill="#484956"><g transform="translate(.4 .9) scale(.92 .82)"><path d="M5 .5v8L.8 4.5zM9.6 .5v8L5.4 4.5z"/></g></svg>
<svg class="abs" style="left:51.5px;top:880px" width="12" height="9" viewBox="0 0 12 9" fill="#484956"><g transform="translate(.4 .9) scale(.92 .82)"><path d="M5 .5v8L.8 4.5z"/></g></svg>
<svg class="abs" style="left:168px;top:880px" width="12" height="9" viewBox="0 0 12 9" fill="#484956"><g transform="translate(.4 .9) scale(.92 .82)"><path d="M.8 .5v8L5 4.5z"/></g></svg>
<svg class="abs" style="left:183.5px;top:880px" width="12" height="9" viewBox="0 0 12 9" fill="#484956"><g transform="translate(.4 .9) scale(.92 .82)"><path d="M.6 .5v8l4.2-4zM5.2 .5v8l4.2-4z"/></g></svg>
<svg class="abs" style="left:200px;top:880px" width="12" height="9" viewBox="0 0 12 9" fill="#484956"><g transform="translate(.4 .9) scale(.92 .82)"><path d="M0 .5v8l4-4zM4 .5v8l4-4z"/><rect x="8.4" y=".5" width="1.6" height="8"/></g></svg>
<div class="t" style="left:66.80px;top:879.99px;font-size:11px;transform:scaleX(0.9899);">Record 335 of 362</div>
<svg class="abs" style="left:219px;top:880px" width="5" height="9" viewBox="0 0 5 9"><path d="M4.6 .8v7.4L.6 4.5z" fill="#c9cad3"/></svg>
<svg class="abs" style="left:240px;top:880px" width="5" height="9" viewBox="0 0 5 9"><path d="M.4 .8v7.4l4-3.7z" fill="#c9cad3"/></svg>
<!-- sec_map -->
<div class="panel" style="left:275px;top:152px;width:1306px;height:446px"><div class="phead"></div></div>
<div class="abs" style="left:1563px;top:159px;width:9px;height:7px;border:2px solid #72747f;border-top-width:2px;background:#fff"></div>
<div class="cb" style="left:280px"></div>
<div class="cb" style="left:391px"></div>
<div class="cb" style="left:549px"></div>
<div class="cb" style="left:667px"></div><svg class="abs" style="left:667px;top:175px" width="15" height="16" viewBox="0 0 15 16"><path d="M3.2 9.2l3 4.2L12.6 1.6" fill="none" stroke="#33343c" stroke-width="1.5"/></svg>
<div class="t" style="left:296.60px;top:179.99px;font-size:11px;transform:scaleX(0.9835);">Show only events</div>
<div class="t" style="left:407.50px;top:179.99px;font-size:11px;transform:scaleX(0.9783);">Show only ignition activities</div>
<div class="t" style="left:565.70px;top:179.99px;font-size:11px;transform:scaleX(0.9803);">Draw route on map</div>
<div class="t" style="left:683.40px;top:179.99px;font-size:11px;transform:scaleX(0.9565);">Show map info</div>
<div class="t" style="left:761.40px;top:179.99px;font-size:11px;transform:scaleX(0.9475);">Map zoom level</div>
<div class="abs" style="left:840px;top:177px;width:47px;height:17px;border:1px solid #a3a5b3;background:#fff"></div>
<div class="t" style="left:845.00px;top:179.99px;font-size:11px;">14</div>
<svg class="abs" style="left:875px;top:182px" width="8" height="5" viewBox="0 0 8 5"><path d="M.4 .4h7L3.9 4.4z" fill="#222"/></svg>
<svg class="abs" style="left:279px;top:199px" width="1298" height="395" viewBox="279 199 1298 395" font-family="Liberation Sans, sans-serif">
<rect x="279" y="199" width="1298" height="395" fill="#edece6"/>
<polygon points="1340.0,199.0 1577.0,199.0 1577.0,594.0 1340.0,594.0" fill="#f5f3ee" />
<polygon points="388.0,402.0 402.0,412.0 420.0,432.0 436.0,442.0 454.0,466.0 468.0,492.0 484.0,514.0 498.0,536.0 512.0,545.0 500.0,548.0 488.0,540.0 474.0,518.0 458.0,495.0 444.0,470.0 428.0,448.0 411.0,438.0 392.0,416.0 380.0,404.0" fill="#f6ecd6" />
<path d="M279.0 391.0C280.0 391.9 283.8 392.5 285.0 396.5C286.2 400.5 283.7 411.9 286.0 415.0C288.3 418.1 296.2 417.3 299.0 415.0C301.8 412.7 299.5 404.6 303.0 401.0C306.5 397.4 312.4 394.9 320.0 393.7C327.6 392.5 340.1 392.5 348.6 393.7C357.1 394.9 363.4 397.1 371.0 400.7C378.6 404.2 386.9 409.1 394.0 415.0C401.1 420.9 407.5 430.8 413.6 436.0C419.7 441.2 424.9 440.6 430.6 446.0C436.3 451.4 442.4 460.6 447.6 468.6C452.8 476.6 456.6 486.0 461.8 494.0C467.0 502.0 473.5 509.2 478.7 516.8C483.9 524.4 487.7 534.0 492.9 539.4C498.1 544.8 502.9 547.9 509.9 549.3C516.9 550.7 525.6 547.7 535.0 547.9C544.4 548.1 556.0 549.1 566.0 550.7C576.0 552.4 586.6 555.0 594.7 557.8C602.8 560.6 608.9 563.7 614.6 567.7C620.3 571.7 622.1 577.8 628.7 581.8C635.3 585.8 649.8 590.1 654.0 591.7L655.6 594L279 594Z" fill="#abc7f1"/>
<polygon points="497.6,341.0 482.0,362.0 491.0,385.0 513.0,403.0 540.0,414.0 546.0,405.0 529.0,364.0 514.0,348.0" fill="#cfe1b7" />
<polygon points="483.0,467.0 473.0,480.0 501.0,532.0 510.0,534.0 530.0,539.0 558.0,548.0 594.7,553.5 620.0,565.0 631.6,579.0 643.0,583.0 645.7,576.0 645.7,553.5 631.6,533.7 648.5,525.2 651.4,511.0 643.0,502.6 608.9,488.5 580.6,485.6 558.0,471.5 549.5,465.8 549.5,488.5 538.2,499.8 524.0,511.0 518.4,505.4 515.5,492.7 507.0,492.7" fill="#c0dcc0" />
<polygon points="1037.0,199.0 1078.0,199.0 1072.0,222.0 1060.0,226.0 1058.0,236.0 1048.0,243.0 1020.0,243.0 1022.0,262.0 992.0,264.0 993.0,232.0 1000.0,226.0 1037.0,226.0" fill="#cfe1b7" />
<polygon points="1163.0,199.0 1174.0,199.0 1176.0,246.0 1162.0,246.0" fill="#cfe1b7" />
<polygon points="806.0,440.0 896.0,437.0 900.0,450.0 905.0,470.0 916.0,487.0 900.0,499.0 900.0,513.0 879.0,513.0 878.0,492.0 866.0,486.0 855.0,492.0 854.0,513.0 784.0,513.0 784.0,462.0" fill="#cfe1b7" />
<polygon points="963.0,461.0 985.0,454.0 993.0,464.0 983.0,481.0 963.0,481.0" fill="#cfe1b7" />
<polygon points="762.0,552.0 800.0,548.0 840.0,560.0 850.0,568.0 846.0,578.0 820.0,584.0 806.0,594.0 782.0,594.0 775.0,574.0 760.0,560.0" fill="#c0dcc0" />
<polygon points="1331.0,518.0 1336.0,525.0 1326.0,563.0 1273.0,581.0 1275.0,572.0 1290.0,550.0 1310.0,532.0" fill="#cfe1b7" />
<polygon points="1009.4,361.0 1042.0,361.0 1042.0,372.0 1026.5,372.0 1026.5,384.0 1059.4,384.0 1059.4,392.5 1017.6,392.5 1017.6,382.0 1009.4,382.0" fill="#f3e5df" />
<polygon points="688.3,426.7 710.3,428.3 719.8,431.5 729.2,445.6 727.6,450.3 722.9,455.1 721.3,462.9 714.3,465.3 711.9,450.3 699.3,442.5 688.3,436.2" fill="#f1e4dc" />
<polygon points="1399.8,199.0 1404.6,207.7 1399.8,211.0 1401.4,238.0 1402.2,247.4 1360.2,234.0 1353.0,245.0 1391.9,269.6 1377.6,298.2 1366.5,320.4 1364.0,330.0 1349.8,353.8 1349.0,360.0 1348.3,392.0 1352.0,415.0 1354.0,430.0 1369.9,462.0 1382.4,488.8 1393.0,512.0 1398.4,516.0 1368.1,497.7 1346.7,481.7 1352.0,491.5 1373.5,508.4 1403.7,535.1 1407.3,544.0 1409.1,554.7 1419.8,581.4 1425.0,594.0 1565.0,594.0 1577.0,545.0 1577.0,484.0 1558.6,488.0 1552.2,481.0 1509.4,492.0 1522.9,470.6 1524.4,450.0 1525.2,442.7 1507.8,441.1 1506.2,433.2 1506.2,415.7 1491.9,387.9 1440.3,412.5 1430.0,420.5 1428.4,439.5 1423.7,468.1 1419.0,469.7 1416.5,461.7 1407.8,444.3 1396.7,423.7 1395.1,390.3 1392.7,358.6 1404.6,330.0 1418.9,306.1 1431.6,277.5 1447.5,249.0 1465.0,231.0 1499.8,199.0" fill="#abc7f1" />
<polygon points="1440.3,412.5 1452.2,422.1 1472.9,457.0 1468.1,461.7 1468.0,500.0 1444.0,506.0 1441.0,499.0 1434.0,500.0 1437.9,480.0 1439.5,457.0 1441.1,425.2 1430.0,420.5" fill="#f5f3ee" />
<polygon points="1443.5,523.8 1479.2,509.5 1496.7,567.5 1504.6,594.0 1465.0,594.0 1455.4,561.1" fill="#f5f3ee" />
<polyline points="1438.0,513.5 1480.0,509.0" fill="none" stroke="#f5f3ee" stroke-width="3" stroke-linejoin="round" stroke-linecap="round" />
<polyline points="1515.7,500.8 1550.6,488.0" fill="none" stroke="#f5f3ee" stroke-width="3" stroke-linejoin="round" stroke-linecap="round" />
<polyline points="1505.4,425.2 1484.8,448.3" fill="none" stroke="#f5f3ee" stroke-width="1.4" stroke-linejoin="round" stroke-linecap="round" />
<polygon points="1285.0,589.5 1320.0,578.0 1333.4,574.3 1339.6,594.0 1283.0,594.0" fill="#abc7f1" />
<polygon points="1373.5,561.8 1385.9,559.2 1398.4,594.0 1382.4,594.0" fill="#abc7f1" />
<polygon points="1352.0,300.0 1372.0,300.0 1366.0,318.0 1350.0,318.0" fill="#f4f0e4" />
<path d="M887.2 205.4C885.3 205.2 879.5 204.8 875.6 204.5C871.8 204.2 866.0 203.7 864.1 203.6" fill="none" stroke="#d9dadd" stroke-width="1.7" stroke-linecap="round"/>
<path d="M966.3 208.0C967.7 208.6 971.9 210.6 974.9 211.6C977.8 212.6 982.4 213.6 983.9 214.0" fill="none" stroke="#d9dadd" stroke-width="1.7" stroke-linecap="round"/>
<path d="M746.7 231.0C748.5 231.1 754.2 232.0 757.8 231.4C761.3 230.7 764.5 228.1 768.0 227.2C771.6 226.2 775.4 226.5 779.0 225.6C782.6 224.6 786.1 223.3 789.3 221.5C792.5 219.7 796.3 217.8 798.3 214.9C800.2 212.0 800.6 206.0 801.1 204.2" fill="none" stroke="#d9dadd" stroke-width="1.7" stroke-linecap="round"/>
<path d="M788.5 234.2C789.6 233.1 793.2 229.6 795.4 227.2C797.6 224.7 800.3 222.4 801.7 219.6C803.2 216.7 803.9 211.6 804.4 210.1" fill="none" stroke="#d9dadd" stroke-width="1.7" stroke-linecap="round"/>
<path d="M801.7 219.6 L798.9 212.1" fill="none" stroke="#d9dadd" stroke-width="1.7" stroke-linecap="round"/>
<path d="M900.8 244.8C902.1 244.2 906.2 241.7 909.0 241.2C911.9 240.6 915.1 241.7 918.1 241.6C921.1 241.4 924.4 241.7 927.1 240.5C929.7 239.4 932.1 236.9 933.9 234.6C935.7 232.3 937.2 227.8 937.9 226.5" fill="none" stroke="#d9dadd" stroke-width="1.7" stroke-linecap="round"/>
<path d="M926.7 239.8C928.7 240.7 934.6 243.7 938.8 245.1C942.9 246.5 947.4 246.9 951.5 248.3C955.7 249.8 959.3 252.5 963.5 253.8C967.7 255.0 974.3 255.5 976.5 255.9" fill="none" stroke="#d9dadd" stroke-width="1.7" stroke-linecap="round"/>
<path d="M750.6 287.9C748.4 287.3 741.8 284.4 737.4 284.5C733.0 284.5 728.6 286.8 724.2 288.1C719.8 289.4 715.6 291.2 711.2 292.1C706.7 292.9 699.8 293.0 697.6 293.2" fill="none" stroke="#d9dadd" stroke-width="1.7" stroke-linecap="round"/>
<path d="M842.8 272.7C844.0 271.4 846.9 266.5 849.8 264.9C852.7 263.4 857.1 264.6 860.1 263.1C863.1 261.7 865.9 258.9 867.7 256.1C869.5 253.3 870.5 247.9 871.0 246.2" fill="none" stroke="#d9dadd" stroke-width="1.7" stroke-linecap="round"/>
<path d="M872.8 288.6C874.7 288.6 880.5 288.9 884.2 288.4C887.9 287.8 892.2 287.2 895.1 285.2C898.0 283.1 900.7 277.6 901.8 276.0" fill="none" stroke="#d9dadd" stroke-width="1.7" stroke-linecap="round"/>
<path d="M906.7 272.6C907.9 274.0 911.3 279.1 914.4 280.8C917.5 282.5 922.3 281.1 925.5 282.8C928.7 284.4 932.1 289.4 933.4 290.7" fill="none" stroke="#d9dadd" stroke-width="1.7" stroke-linecap="round"/>
<path d="M948.0 294.1C950.1 294.7 957.0 295.6 960.9 297.5C964.8 299.4 968.8 302.3 971.4 305.7C974.1 309.1 975.8 315.9 976.6 318.0" fill="none" stroke="#d9dadd" stroke-width="1.7" stroke-linecap="round"/>
<path d="M722.2 325.0C724.4 324.3 731.0 321.6 735.6 321.0C740.1 320.4 744.9 321.7 749.5 321.5C754.2 321.3 761.1 320.0 763.4 319.8" fill="none" stroke="#d9dadd" stroke-width="1.7" stroke-linecap="round"/>
<path d="M766.9 321.6C768.4 320.7 773.9 318.7 776.0 316.1C778.1 313.6 777.6 308.9 779.7 306.3C781.8 303.7 787.1 301.6 788.6 300.6" fill="none" stroke="#d9dadd" stroke-width="1.7" stroke-linecap="round"/>
<path d="M779.7 306.3C779.0 307.7 776.6 311.6 775.6 314.5C774.7 317.4 774.4 322.1 774.1 323.6" fill="none" stroke="#d9dadd" stroke-width="1.7" stroke-linecap="round"/>
<path d="M797.1 332.7C795.3 332.3 790.2 330.4 786.7 330.3C783.2 330.3 779.7 331.5 776.3 332.4C772.8 333.2 769.5 335.1 766.1 335.4C762.6 335.7 757.3 334.2 755.6 333.9" fill="none" stroke="#d9dadd" stroke-width="1.7" stroke-linecap="round"/>
<path d="M854.1 320.2C852.2 320.4 846.4 322.0 842.7 321.5C839.0 321.0 835.3 319.1 832.0 317.2C828.8 315.3 825.1 313.1 823.1 310.0C821.1 307.0 820.6 300.8 820.1 298.9" fill="none" stroke="#d9dadd" stroke-width="1.7" stroke-linecap="round"/>
<path d="M842.7 321.5C843.0 323.4 843.6 329.2 844.3 333.1C845.1 336.9 846.8 342.5 847.3 344.4" fill="none" stroke="#d9dadd" stroke-width="1.7" stroke-linecap="round"/>
<path d="M885.5 327.1C883.8 327.5 878.7 329.0 875.3 329.3C871.9 329.6 868.3 328.5 864.9 328.9C861.5 329.2 856.6 331.1 854.9 331.6" fill="none" stroke="#d9dadd" stroke-width="1.7" stroke-linecap="round"/>
<path d="M928.6 324.5C926.6 325.4 920.9 328.8 916.8 329.7C912.7 330.7 908.1 330.8 904.0 330.1C899.9 329.3 894.1 326.0 892.1 325.2" fill="none" stroke="#d9dadd" stroke-width="1.7" stroke-linecap="round"/>
<path d="M955.8 313.6C954.7 312.3 952.0 307.9 949.4 305.9C946.8 303.9 943.5 302.0 940.3 301.7C937.2 301.4 933.9 303.3 930.7 304.2C927.4 305.1 922.7 306.6 921.1 307.1" fill="none" stroke="#d9dadd" stroke-width="1.7" stroke-linecap="round"/>
<path d="M701.7 359.3C703.2 359.9 707.8 361.3 710.4 362.9C713.1 364.5 714.9 367.7 717.6 369.0C720.4 370.3 723.8 370.3 726.9 370.8C730.0 371.2 734.7 371.7 736.3 371.9" fill="none" stroke="#d9dadd" stroke-width="1.7" stroke-linecap="round"/>
<path d="M757.0 360.0C755.6 359.4 750.9 357.9 748.4 356.0C745.9 354.1 743.4 351.6 742.2 348.8C741.0 346.0 742.2 342.2 741.1 339.4C739.9 336.6 736.3 333.1 735.4 331.8" fill="none" stroke="#d9dadd" stroke-width="1.7" stroke-linecap="round"/>
<path d="M742.2 348.8C742.1 350.8 741.3 356.8 741.6 360.7C741.9 364.6 743.5 368.5 743.9 372.4C744.2 376.3 743.6 382.3 743.5 384.3" fill="none" stroke="#d9dadd" stroke-width="1.7" stroke-linecap="round"/>
<path d="M775.5 363.1C773.9 364.1 769.4 367.9 765.8 369.2C762.3 370.4 757.8 369.1 754.5 370.6C751.2 372.2 749.3 376.4 746.0 378.3C742.8 380.2 738.3 380.0 735.2 381.9C732.0 383.8 728.4 388.6 727.0 389.9" fill="none" stroke="#d9dadd" stroke-width="1.7" stroke-linecap="round"/>
<path d="M754.5 370.6C754.1 368.8 752.4 363.2 751.8 359.3C751.3 355.5 751.5 351.6 751.2 347.8C750.9 343.9 750.1 338.2 749.9 336.2" fill="none" stroke="#d9dadd" stroke-width="1.7" stroke-linecap="round"/>
<path d="M836.3 364.9C838.5 364.8 845.3 365.6 849.4 364.4C853.5 363.3 857.1 360.2 860.9 358.1C864.8 356.0 868.5 352.8 872.6 351.9C876.7 351.1 881.4 353.4 885.7 353.1C890.0 352.7 896.3 350.3 898.4 349.7" fill="none" stroke="#d9dadd" stroke-width="1.7" stroke-linecap="round"/>
<path d="M878.1 371.9C876.2 371.3 870.5 369.8 866.7 368.6C862.9 367.4 859.2 366.0 855.5 364.7C851.7 363.4 847.9 362.3 844.3 360.8C840.7 359.2 837.5 355.8 833.8 355.2C830.1 354.7 824.0 357.0 822.1 357.3" fill="none" stroke="#d9dadd" stroke-width="1.7" stroke-linecap="round"/>
<path d="M907.5 360.6C909.1 360.7 913.8 361.0 916.9 361.0C920.0 360.9 923.3 359.5 926.2 360.2C929.0 360.9 932.1 362.8 934.1 365.1C936.1 367.3 937.3 372.2 937.9 373.6" fill="none" stroke="#d9dadd" stroke-width="1.7" stroke-linecap="round"/>
<path d="M926.2 360.2C926.1 362.1 926.6 368.1 925.6 371.8C924.6 375.4 921.2 380.4 920.4 382.1" fill="none" stroke="#d9dadd" stroke-width="1.7" stroke-linecap="round"/>
<path d="M947.8 353.6C947.9 355.7 947.0 362.4 948.4 366.1C949.9 369.8 953.2 373.3 956.5 375.7C959.8 378.0 964.2 380.2 968.1 380.4C972.0 380.5 978.1 377.3 980.0 376.7" fill="none" stroke="#d9dadd" stroke-width="1.7" stroke-linecap="round"/>
<path d="M968.1 380.4 L962.0 386.2" fill="none" stroke="#d9dadd" stroke-width="1.7" stroke-linecap="round"/>
<path d="M708.6 401.5C707.9 399.7 705.4 394.4 704.0 390.8C702.5 387.2 701.8 383.1 699.8 379.8C697.8 376.6 694.9 373.5 691.8 371.3C688.7 369.1 682.9 367.4 681.1 366.6" fill="none" stroke="#d9dadd" stroke-width="1.7" stroke-linecap="round"/>
<path d="M791.0 399.3C790.8 397.7 789.5 392.5 790.1 389.3C790.6 386.1 793.8 383.4 794.4 380.2C795.1 377.0 794.6 373.3 793.8 370.1C793.0 366.9 790.3 362.5 789.7 361.0" fill="none" stroke="#d9dadd" stroke-width="1.7" stroke-linecap="round"/>
<path d="M822.1 393.3C820.5 392.9 815.4 392.2 812.5 390.7C809.6 389.2 807.7 385.6 804.7 384.4C801.8 383.1 798.1 383.8 794.8 383.2C791.5 382.6 786.7 381.4 785.0 381.0" fill="none" stroke="#d9dadd" stroke-width="1.7" stroke-linecap="round"/>
<path d="M875.6 399.7C873.4 399.7 866.4 398.5 862.6 399.9C858.8 401.3 856.3 406.1 852.5 408.2C848.8 410.2 844.4 411.2 840.2 412.2C836.0 413.3 829.5 414.0 827.3 414.3" fill="none" stroke="#d9dadd" stroke-width="1.7" stroke-linecap="round"/>
<path d="M688.5 248.3C688.9 246.5 689.0 241.0 690.4 237.8C691.8 234.7 694.2 231.5 696.9 229.4C699.6 227.4 705.1 226.1 706.8 225.4" fill="none" stroke="#d9dadd" stroke-width="1.7" stroke-linecap="round"/>
<path d="M688.5 306.6C690.6 307.3 697.4 308.6 700.8 311.1C704.1 313.6 707.2 317.6 708.8 321.5C710.4 325.3 710.5 330.1 710.4 334.4C710.4 338.7 708.9 345.2 708.5 347.4" fill="none" stroke="#d9dadd" stroke-width="1.7" stroke-linecap="round"/>
<path d="M628.3 335.3C627.1 336.2 623.5 339.0 620.9 340.4C618.2 341.9 615.4 343.1 612.5 344.0C609.7 344.9 605.2 345.7 603.7 346.1" fill="none" stroke="#d9dadd" stroke-width="1.7" stroke-linecap="round"/>
<path d="M612.5 344.0C611.5 342.7 608.5 338.5 606.2 335.9C604.0 333.3 600.3 329.8 599.1 328.5" fill="none" stroke="#d9dadd" stroke-width="1.7" stroke-linecap="round"/>
<path d="M682.6 333.4C681.1 332.8 676.9 330.3 673.8 329.6C670.8 328.9 667.5 329.2 664.3 329.2C661.1 329.2 656.3 329.5 654.7 329.5" fill="none" stroke="#d9dadd" stroke-width="1.7" stroke-linecap="round"/>
<path d="M716.9 333.6C715.2 334.5 710.2 338.5 706.5 339.1C702.8 339.6 698.7 337.9 694.9 337.1C691.1 336.3 686.6 336.2 683.6 334.1C680.5 332.0 678.7 327.9 676.8 324.5C674.8 321.1 672.8 315.5 672.0 313.8" fill="none" stroke="#d9dadd" stroke-width="1.7" stroke-linecap="round"/>
<path d="M740.4 332.3C742.1 333.1 747.6 334.7 750.4 336.9C753.1 339.1 754.8 342.7 756.9 345.7C759.0 348.6 761.1 351.6 762.9 354.8C764.7 357.9 766.9 363.0 767.7 364.6" fill="none" stroke="#d9dadd" stroke-width="1.7" stroke-linecap="round"/>
<path d="M614.6 367.6C612.8 368.2 607.3 370.7 603.5 371.5C599.6 372.2 595.5 371.2 591.7 371.9C587.8 372.5 583.4 373.3 580.5 375.6C577.5 377.8 575.6 381.9 574.1 385.5C572.6 389.1 572.0 395.1 571.6 397.0" fill="none" stroke="#d9dadd" stroke-width="1.7" stroke-linecap="round"/>
<path d="M591.7 371.9C591.6 370.5 591.3 366.4 591.0 363.7C590.6 361.0 589.7 357.0 589.4 355.6" fill="none" stroke="#d9dadd" stroke-width="1.7" stroke-linecap="round"/>
<path d="M661.7 375.4C663.4 375.7 668.5 377.9 671.8 377.6C675.0 377.2 678.6 375.5 681.1 373.4C683.6 371.3 684.4 367.2 686.8 364.9C689.2 362.5 692.4 360.4 695.6 359.5C698.7 358.7 702.6 360.5 705.8 359.8C709.1 359.0 713.4 355.9 715.0 355.1" fill="none" stroke="#d9dadd" stroke-width="1.7" stroke-linecap="round"/>
<path d="M693.7 375.0C691.5 375.6 684.6 376.6 680.9 378.7C677.2 380.9 674.2 384.7 671.4 388.0C668.5 391.4 665.3 394.9 663.8 399.0C662.3 403.0 662.7 410.0 662.4 412.2" fill="none" stroke="#d9dadd" stroke-width="1.7" stroke-linecap="round"/>
<path d="M742.2 373.4C740.8 371.6 736.9 365.6 733.5 362.7C730.0 359.8 725.8 357.0 721.5 355.9C717.2 354.8 712.0 357.3 707.8 356.2C703.5 355.1 697.8 350.4 695.9 349.3" fill="none" stroke="#d9dadd" stroke-width="1.7" stroke-linecap="round"/>
<path d="M782.8 366.6C784.4 366.5 789.7 365.0 792.7 365.8C795.7 366.5 799.0 368.8 801.0 371.3C803.0 373.7 804.4 377.3 804.9 380.4C805.3 383.6 803.8 388.7 803.6 390.3" fill="none" stroke="#d9dadd" stroke-width="1.7" stroke-linecap="round"/>
<path d="M792.7 365.8C792.8 364.4 793.4 360.3 793.2 357.7C793.0 355.0 791.7 351.1 791.4 349.8" fill="none" stroke="#d9dadd" stroke-width="1.7" stroke-linecap="round"/>
<path d="M617.3 419.9C619.2 420.0 624.9 420.8 628.7 420.6C632.4 420.4 636.2 419.3 639.9 418.7C643.7 418.0 647.8 418.2 651.2 416.7C654.5 415.1 656.6 410.9 660.0 409.4C663.3 407.8 669.4 407.8 671.2 407.4" fill="none" stroke="#d9dadd" stroke-width="1.7" stroke-linecap="round"/>
<path d="M697.6 408.7C696.8 407.2 694.4 403.0 693.1 400.0C691.8 397.0 691.3 393.6 689.8 390.8C688.3 388.0 685.4 385.8 684.0 383.0C682.5 380.1 681.5 376.7 681.3 373.6C681.2 370.4 682.8 365.6 683.1 364.0" fill="none" stroke="#d9dadd" stroke-width="1.7" stroke-linecap="round"/>
<path d="M684.0 383.0C683.5 384.3 682.4 388.3 681.5 390.9C680.6 393.5 679.0 397.4 678.5 398.7" fill="none" stroke="#d9dadd" stroke-width="1.7" stroke-linecap="round"/>
<path d="M730.8 414.4C732.5 413.0 737.3 408.1 741.1 405.7C744.9 403.3 749.3 401.9 753.4 400.0C757.5 398.1 761.4 395.4 765.7 394.3C770.0 393.2 777.0 393.6 779.2 393.4" fill="none" stroke="#d9dadd" stroke-width="1.7" stroke-linecap="round"/>
<path d="M741.1 405.7C740.7 404.2 739.8 399.6 738.7 396.7C737.7 393.8 736.2 391.0 734.8 388.2C733.4 385.5 731.2 381.4 730.4 380.0" fill="none" stroke="#d9dadd" stroke-width="1.7" stroke-linecap="round"/>
<path d="M773.4 419.7C771.8 420.6 767.1 424.5 763.6 425.2C760.1 425.9 755.9 424.7 752.4 423.6C748.8 422.5 745.6 420.3 742.3 418.6C738.9 416.9 735.8 414.0 732.3 413.3C728.8 412.6 722.9 414.2 721.1 414.4" fill="none" stroke="#d9dadd" stroke-width="1.7" stroke-linecap="round"/>
<path d="M605.2 452.0C603.5 450.7 598.8 445.6 595.0 443.7C591.1 441.8 586.1 442.5 582.1 440.7C578.2 439.0 574.0 436.6 571.2 433.4C568.4 430.2 566.5 423.5 565.5 421.5" fill="none" stroke="#d9dadd" stroke-width="1.7" stroke-linecap="round"/>
<path d="M595.0 443.7C594.4 445.0 591.8 448.8 591.2 451.5C590.7 454.2 591.9 457.3 591.5 460.1C591.1 462.9 589.3 467.0 588.8 468.4" fill="none" stroke="#d9dadd" stroke-width="1.7" stroke-linecap="round"/>
<path d="M639.1 452.0C641.2 452.4 647.4 455.1 651.5 454.8C655.5 454.6 659.3 451.5 663.4 450.4C667.4 449.4 672.1 450.0 675.9 448.3C679.6 446.7 682.2 442.5 685.9 440.5C689.5 438.6 695.9 437.2 697.9 436.5" fill="none" stroke="#d9dadd" stroke-width="1.7" stroke-linecap="round"/>
<path d="M674.9 443.3C673.8 441.8 671.1 437.1 668.7 434.5C666.3 431.8 663.7 428.9 660.6 427.3C657.6 425.8 653.6 425.8 650.1 425.0C646.6 424.3 642.8 424.3 639.6 422.9C636.4 421.5 634.1 417.7 630.9 416.6C627.7 415.5 621.9 416.3 620.2 416.3" fill="none" stroke="#d9dadd" stroke-width="1.7" stroke-linecap="round"/>
<path d="M757.3 438.1C758.3 439.8 761.8 444.7 762.9 448.3C764.0 451.9 763.3 456.0 763.8 459.9C764.3 463.7 765.6 469.4 765.9 471.3" fill="none" stroke="#d9dadd" stroke-width="1.7" stroke-linecap="round"/>
<path d="M676.6 493.6C677.7 494.6 681.4 497.6 682.9 500.1C684.5 502.6 684.7 505.9 686.1 508.6C687.5 511.2 689.1 514.0 691.3 516.0C693.5 518.0 696.4 519.4 699.1 520.6C701.9 521.9 704.9 522.4 707.7 523.6C710.5 524.8 714.5 527.0 715.9 527.6" fill="none" stroke="#d9dadd" stroke-width="1.7" stroke-linecap="round"/>
<path d="M725.2 490.2C723.3 489.4 717.7 487.0 714.1 485.2C710.5 483.4 706.3 482.1 703.4 479.5C700.5 476.8 699.0 472.7 696.8 469.3C694.5 466.0 692.4 462.5 689.9 459.3C687.4 456.2 683.1 451.9 681.7 450.4" fill="none" stroke="#d9dadd" stroke-width="1.7" stroke-linecap="round"/>
<path d="M828.8 414.5C830.3 415.2 835.1 416.5 837.7 418.3C840.3 420.2 841.6 423.8 844.2 425.6C846.9 427.3 851.9 428.1 853.5 428.6" fill="none" stroke="#d9dadd" stroke-width="1.7" stroke-linecap="round"/>
<path d="M866.2 410.3C866.2 408.2 866.8 401.5 866.1 397.2C865.3 393.0 862.6 389.1 861.8 384.8C861.0 380.6 862.7 375.7 861.4 371.7C860.1 367.7 855.3 362.7 854.0 360.9" fill="none" stroke="#d9dadd" stroke-width="1.7" stroke-linecap="round"/>
<path d="M789.9 523.5C788.1 522.8 782.6 520.1 778.8 519.7C775.0 519.2 770.9 520.2 767.1 520.9C763.3 521.7 759.0 522.2 755.8 524.1C752.6 526.1 750.0 529.6 747.8 532.8C745.5 536.0 743.6 539.6 742.4 543.3C741.1 546.9 740.8 552.9 740.5 554.9" fill="none" stroke="#d9dadd" stroke-width="1.7" stroke-linecap="round"/>
<path d="M929.9 528.2C930.5 530.0 932.7 535.3 933.7 539.0C934.6 542.7 935.5 546.5 935.5 550.3C935.6 554.0 934.7 557.9 933.8 561.6C933.0 565.2 931.0 568.7 930.4 572.4C929.7 576.1 929.8 581.9 929.7 583.8" fill="none" stroke="#d9dadd" stroke-width="1.7" stroke-linecap="round"/>
<path d="M933.7 539.0C933.1 540.4 931.5 544.8 930.3 547.6C929.0 550.4 927.0 554.6 926.4 556.0" fill="none" stroke="#d9dadd" stroke-width="1.7" stroke-linecap="round"/>
<path d="M858.2 558.3C860.5 558.6 867.6 559.2 871.9 560.6C876.3 562.1 880.9 564.0 884.4 567.0C887.8 569.9 889.2 575.2 892.5 578.2C895.9 581.3 902.6 584.0 904.7 585.1" fill="none" stroke="#d9dadd" stroke-width="1.7" stroke-linecap="round"/>
<path d="M901.3 557.5C903.3 556.9 909.3 553.9 913.3 554.0C917.3 554.1 921.1 557.0 925.2 557.9C929.2 558.8 933.4 559.0 937.6 559.4C941.7 559.8 946.1 561.1 950.0 560.3C954.0 559.5 959.4 555.7 961.2 554.8" fill="none" stroke="#d9dadd" stroke-width="1.7" stroke-linecap="round"/>
<path d="M913.3 554.0C913.4 556.0 914.0 561.9 914.0 565.9C914.1 569.9 913.0 574.0 913.6 577.9C914.2 581.8 916.9 587.3 917.6 589.2" fill="none" stroke="#d9dadd" stroke-width="1.7" stroke-linecap="round"/>
<path d="M941.6 559.4C943.8 559.6 950.3 560.0 954.7 560.4C959.0 560.9 965.5 562.0 967.7 562.3" fill="none" stroke="#d9dadd" stroke-width="1.7" stroke-linecap="round"/>
<path d="M954.7 560.4 L965.1 555.8" fill="none" stroke="#d9dadd" stroke-width="1.7" stroke-linecap="round"/>
<path d="M653.8 489.9C655.5 489.3 660.8 487.8 663.7 486.0C666.7 484.1 668.6 480.2 671.7 478.8C674.7 477.4 679.2 478.9 682.3 477.4C685.3 476.0 688.7 471.3 690.0 470.1" fill="none" stroke="#d9dadd" stroke-width="1.7" stroke-linecap="round"/>
<path d="M696.5 506.2C695.2 505.0 690.4 501.8 688.7 498.9C687.0 495.9 686.8 491.9 686.2 488.4C685.5 484.9 685.4 481.3 684.6 477.8C683.9 474.3 683.1 470.7 681.7 467.5C680.2 464.3 676.8 461.8 675.8 458.5C674.7 455.3 675.4 449.6 675.4 447.8" fill="none" stroke="#d9dadd" stroke-width="1.7" stroke-linecap="round"/>
<path d="M736.5 504.1C738.4 504.2 744.6 503.4 748.1 504.5C751.6 505.7 754.2 509.4 757.7 511.1C761.1 512.9 764.9 515.0 768.6 515.1C772.3 515.3 777.9 512.5 779.8 512.0" fill="none" stroke="#d9dadd" stroke-width="1.7" stroke-linecap="round"/>
<path d="M768.7 502.1C768.2 500.5 767.1 495.4 765.5 492.4C763.9 489.5 760.4 487.5 759.0 484.5C757.7 481.5 757.6 476.1 757.4 474.4" fill="none" stroke="#d9dadd" stroke-width="1.7" stroke-linecap="round"/>
<path d="M658.6 544.9C657.8 542.7 654.1 536.3 653.6 531.8C653.1 527.3 655.4 522.6 655.7 518.0C656.0 513.3 655.3 506.3 655.3 504.0" fill="none" stroke="#d9dadd" stroke-width="1.7" stroke-linecap="round"/>
<path d="M704.5 528.7C703.2 527.9 699.3 524.7 696.4 523.8C693.4 523.0 690.0 523.8 686.9 523.7C683.7 523.6 679.0 523.1 677.4 523.0" fill="none" stroke="#d9dadd" stroke-width="1.7" stroke-linecap="round"/>
<path d="M728.3 530.5C726.1 530.9 719.5 532.1 715.2 533.3C710.9 534.6 706.6 536.1 702.6 538.1C698.5 540.0 695.1 543.1 691.1 545.2C687.2 547.4 682.0 548.0 678.9 550.9C675.8 553.9 673.2 558.6 672.5 562.8C671.8 567.0 674.3 573.9 674.7 576.1" fill="none" stroke="#d9dadd" stroke-width="1.7" stroke-linecap="round"/>
<path d="M684.6 565.7C685.2 563.5 686.7 556.9 688.4 552.7C690.0 548.5 692.0 544.3 694.5 540.7C697.1 537.0 700.5 534.0 703.7 530.8C706.9 527.7 710.3 524.7 713.7 521.8C717.1 518.8 722.4 514.6 724.2 513.2" fill="none" stroke="#d9dadd" stroke-width="1.7" stroke-linecap="round"/>
<path d="M688.4 552.7C687.2 551.1 684.0 546.1 681.6 543.0C679.2 539.8 675.3 535.4 674.1 533.8" fill="none" stroke="#d9dadd" stroke-width="1.7" stroke-linecap="round"/>
<path d="M443.1 352.3C442.0 353.8 438.0 358.1 436.2 361.4C434.4 364.8 434.4 369.1 432.5 372.3C430.6 375.5 427.3 378.0 424.6 380.7C421.9 383.5 417.8 387.5 416.4 388.8" fill="none" stroke="#d9dadd" stroke-width="1.7" stroke-linecap="round"/>
<path d="M424.6 380.7 L434.4 384.9" fill="none" stroke="#d9dadd" stroke-width="1.7" stroke-linecap="round"/>
<path d="M577.0 354.8C577.6 352.6 579.8 345.9 581.0 341.5C582.2 337.0 582.4 332.1 584.2 327.9C586.1 323.7 589.7 320.4 592.0 316.3C594.2 312.3 596.8 305.7 597.7 303.6" fill="none" stroke="#d9dadd" stroke-width="1.7" stroke-linecap="round"/>
<path d="M440.5 395.1C438.4 395.9 432.3 398.0 428.3 399.4C424.2 400.8 420.2 403.2 416.0 403.5C411.9 403.9 407.4 402.7 403.3 401.5C399.2 400.3 395.4 398.1 391.5 396.3C387.5 394.5 382.8 393.6 379.8 390.8C376.8 388.0 374.7 381.3 373.7 379.4" fill="none" stroke="#d9dadd" stroke-width="1.7" stroke-linecap="round"/>
<path d="M416.0 403.5 L419.5 413.6" fill="none" stroke="#d9dadd" stroke-width="1.7" stroke-linecap="round"/>
<path d="M476.0 398.4C473.8 398.1 467.2 396.6 462.9 396.8C458.5 397.0 453.8 397.8 449.9 399.6C445.9 401.3 443.2 406.1 439.2 407.4C435.2 408.6 428.1 407.0 425.9 406.9" fill="none" stroke="#d9dadd" stroke-width="1.7" stroke-linecap="round"/>
<path d="M449.9 399.6C449.6 400.9 448.8 404.8 448.4 407.5C448.0 410.2 447.7 412.8 447.4 415.5C447.2 418.2 447.0 422.2 446.9 423.6" fill="none" stroke="#d9dadd" stroke-width="1.7" stroke-linecap="round"/>
<path d="M450.0 428.2C451.1 427.1 454.5 423.9 456.5 421.5C458.4 419.1 460.4 416.5 461.5 413.7C462.6 410.9 461.7 407.1 463.2 404.5C464.6 402.0 468.6 400.9 470.1 398.3C471.5 395.7 471.3 392.2 471.9 389.2C472.5 386.1 473.3 381.6 473.6 380.0" fill="none" stroke="#d9dadd" stroke-width="1.7" stroke-linecap="round"/>
<path d="M490.9 420.7C491.0 418.5 491.9 411.8 491.9 407.3C491.9 402.9 491.8 398.3 490.9 393.9C489.9 389.6 488.0 385.4 486.2 381.3C484.4 377.2 483.1 372.4 480.2 369.3C477.2 366.2 472.6 363.5 468.5 362.7C464.3 361.9 457.4 364.2 455.1 364.5" fill="none" stroke="#d9dadd" stroke-width="1.7" stroke-linecap="round"/>
<path d="M520.3 432.8C519.9 434.6 517.9 439.9 517.8 443.6C517.7 447.2 518.5 451.0 519.5 454.5C520.5 458.1 523.6 461.2 524.0 464.7C524.4 468.2 522.1 473.7 521.8 475.5" fill="none" stroke="#d9dadd" stroke-width="1.7" stroke-linecap="round"/>
<path d="M543.2 421.1C545.0 421.7 550.8 422.7 553.9 424.7C557.0 426.6 558.9 430.4 561.8 432.8C564.6 435.3 568.4 436.8 570.8 439.6C573.3 442.3 575.7 447.7 576.6 449.3" fill="none" stroke="#d9dadd" stroke-width="1.7" stroke-linecap="round"/>
<path d="M561.8 432.8C563.1 431.5 567.2 427.6 569.6 424.9C572.1 422.1 574.2 418.9 576.7 416.1C579.2 413.3 583.2 409.4 584.5 408.1" fill="none" stroke="#d9dadd" stroke-width="1.7" stroke-linecap="round"/>
<path d="M588.2 427.4C589.8 428.6 594.3 433.1 597.8 434.2C601.4 435.2 605.7 434.6 609.5 433.9C613.3 433.2 616.9 430.1 620.6 430.1C624.3 430.0 629.9 432.9 631.8 433.5" fill="none" stroke="#d9dadd" stroke-width="1.7" stroke-linecap="round"/>
<path d="M452.6 462.2C454.1 462.0 458.7 460.8 461.8 460.9C464.8 461.1 467.8 463.2 470.8 463.2C473.8 463.1 477.0 462.1 479.7 460.7C482.5 459.4 484.5 456.4 487.3 455.3C490.0 454.2 494.9 454.1 496.4 453.9" fill="none" stroke="#d9dadd" stroke-width="1.7" stroke-linecap="round"/>
<path d="M482.0 452.9C483.7 453.1 488.7 454.7 491.7 454.0C494.7 453.3 497.6 451.0 500.1 448.9C502.6 446.9 504.7 444.3 506.8 441.9C508.9 439.4 511.8 435.4 512.8 434.2" fill="none" stroke="#d9dadd" stroke-width="1.7" stroke-linecap="round"/>
<path d="M508.2 466.2C506.7 464.6 501.9 459.9 498.9 456.6C495.9 453.3 493.1 449.8 490.0 446.5C487.0 443.3 484.2 439.3 480.5 437.1C476.8 435.0 469.7 434.1 467.6 433.5" fill="none" stroke="#d9dadd" stroke-width="1.7" stroke-linecap="round"/>
<path d="M546.7 453.9C548.3 452.5 554.2 448.8 556.1 445.3C557.9 441.7 556.6 436.6 557.9 432.7C559.2 428.7 563.1 423.4 564.1 421.6" fill="none" stroke="#d9dadd" stroke-width="1.7" stroke-linecap="round"/>
<path d="M590.4 435.8C589.5 437.0 586.3 440.5 584.8 443.2C583.3 445.9 582.3 448.9 581.1 451.7C579.9 454.6 578.2 457.3 577.5 460.3C576.7 463.3 576.8 468.0 576.6 469.6" fill="none" stroke="#d9dadd" stroke-width="1.7" stroke-linecap="round"/>
<path d="M626.5 423.2C628.5 424.2 634.5 427.3 638.6 429.3C642.6 431.3 646.5 433.8 650.8 435.0C655.1 436.2 660.2 434.8 664.3 436.3C668.4 437.8 671.5 441.9 675.6 443.9C679.6 445.8 686.3 447.4 688.4 448.1" fill="none" stroke="#d9dadd" stroke-width="1.7" stroke-linecap="round"/>
<path d="M613.1 459.3C611.3 460.7 604.8 464.1 602.5 467.6C600.2 471.1 599.6 478.4 599.1 480.6" fill="none" stroke="#d9dadd" stroke-width="1.7" stroke-linecap="round"/>
<path d="M634.1 492.2C635.9 491.5 642.3 490.3 645.3 487.9C648.3 485.5 649.9 481.3 652.1 477.9C654.3 474.5 656.4 471.1 658.4 467.6C660.3 464.1 661.2 459.5 663.9 456.9C666.6 454.2 671.3 453.7 674.8 451.7C678.3 449.7 683.1 446.0 684.7 444.9" fill="none" stroke="#d9dadd" stroke-width="1.7" stroke-linecap="round"/>
<path d="M384.3 269.0C386.3 269.7 392.3 272.4 396.5 273.6C400.6 274.8 405.0 276.5 409.2 276.4C413.4 276.3 418.0 275.0 421.8 273.0C425.5 271.1 430.1 266.1 431.8 264.7" fill="none" stroke="#d9dadd" stroke-width="1.7" stroke-linecap="round"/>
<path d="M409.2 276.4C408.1 277.6 405.2 281.4 402.8 283.5C400.5 285.5 396.3 287.9 395.0 288.8" fill="none" stroke="#d9dadd" stroke-width="1.7" stroke-linecap="round"/>
<path d="M435.0 250.2C433.8 248.5 428.7 243.7 427.5 239.9C426.4 236.1 427.1 231.2 428.2 227.2C429.3 223.3 431.5 219.0 434.3 216.1C437.1 213.2 443.4 210.8 445.2 209.7" fill="none" stroke="#d9dadd" stroke-width="1.7" stroke-linecap="round"/>
<path d="M490.3 265.0C488.8 264.0 483.9 261.4 481.4 259.0C478.9 256.6 476.7 253.5 475.0 250.4C473.3 247.3 471.8 242.1 471.1 240.4" fill="none" stroke="#d9dadd" stroke-width="1.7" stroke-linecap="round"/>
<path d="M475.0 250.4C476.4 249.9 480.6 248.6 483.1 247.2C485.6 245.8 488.8 242.7 490.0 241.8" fill="none" stroke="#d9dadd" stroke-width="1.7" stroke-linecap="round"/>
<path d="M302.3 323.1C303.3 321.3 306.1 315.9 308.4 312.6C310.8 309.4 313.3 305.5 316.6 303.7C320.0 301.9 324.6 302.5 328.6 301.7C332.5 301.0 338.5 299.7 340.4 299.3" fill="none" stroke="#d9dadd" stroke-width="1.7" stroke-linecap="round"/>
<path d="M380.7 329.4C378.7 330.0 373.0 332.5 369.0 333.2C365.0 334.0 360.5 332.8 356.7 334.1C352.9 335.4 349.1 337.9 346.3 340.8C343.6 343.7 343.2 349.0 340.2 351.5C337.3 354.0 330.6 355.1 328.7 355.8" fill="none" stroke="#d9dadd" stroke-width="1.7" stroke-linecap="round"/>
<path d="M550.1 326.9C551.6 326.1 555.9 323.2 559.1 321.7C562.2 320.1 565.4 318.5 568.8 317.9C572.1 317.3 576.1 316.8 579.2 317.9C582.3 319.0 584.5 322.5 587.3 324.5C590.2 326.4 594.9 328.8 596.4 329.6" fill="none" stroke="#d9dadd" stroke-width="1.7" stroke-linecap="round"/>
<path d="M596.5 325.1C598.6 325.8 605.1 328.0 609.4 329.4C613.8 330.8 618.1 333.3 622.5 333.5C626.9 333.6 631.5 331.9 635.8 330.4C640.0 328.8 645.0 327.2 647.9 324.1C650.9 321.0 652.6 313.7 653.5 311.6" fill="none" stroke="#d9dadd" stroke-width="1.7" stroke-linecap="round"/>
<path d="M345.5 326.5C346.7 327.9 351.1 331.9 352.9 335.1C354.6 338.4 354.7 342.6 356.0 346.1C357.3 349.7 358.3 353.9 360.7 356.5C363.1 359.2 367.3 360.3 370.6 362.3C373.8 364.3 377.1 366.3 380.0 368.7C382.9 371.2 386.5 375.7 387.8 377.1" fill="none" stroke="#d9dadd" stroke-width="1.7" stroke-linecap="round"/>
<path d="M343.8 355.8C345.2 356.9 349.0 360.8 352.0 362.8C355.0 364.7 358.5 365.8 361.8 367.4C365.0 368.9 368.1 371.7 371.5 372.1C374.8 372.5 378.8 371.2 382.0 369.7C385.2 368.2 389.2 364.4 390.7 363.3" fill="none" stroke="#d9dadd" stroke-width="1.7" stroke-linecap="round"/>
<path d="M366.8 228.4C370.1 231.6 379.4 240.9 386.3 247.9C393.3 254.8 403.0 263.2 408.6 270.1C414.2 277.1 415.1 284.5 419.7 289.6C424.4 294.7 434.1 296.1 436.4 300.8C438.7 305.4 432.7 314.2 433.6 317.5C434.6 320.7 438.3 322.6 442.0 320.2C445.7 317.9 451.3 309.1 455.9 303.5C460.5 298.0 464.7 290.6 469.8 286.8C474.9 283.1 483.7 282.2 486.5 281.3" fill="none" stroke="#d9dadd" stroke-width="2" stroke-linecap="round"/>
<path d="M464.3 254.8C467.0 254.1 477.2 255.1 481.0 250.7C484.7 246.3 484.2 234.9 486.5 228.4C488.8 221.9 493.5 214.5 494.9 211.7" fill="none" stroke="#d9dadd" stroke-width="2" stroke-linecap="round"/>
<path d="M482.3 236.7C483.5 242.3 485.4 266.2 489.3 270.1C493.2 274.1 503.2 262.0 506.0 260.4" fill="none" stroke="#d9dadd" stroke-width="2" stroke-linecap="round"/>
<path d="M483.7 231.2C487.0 232.6 497.2 237.7 503.2 239.5C509.3 241.4 516.2 243.2 519.9 242.3C523.6 241.4 524.6 235.4 525.5 234.0" fill="none" stroke="#d9dadd" stroke-width="2" stroke-linecap="round"/>
<path d="M589.5 225.6C586.3 229.8 575.1 241.9 570.0 250.7C564.9 259.5 563.1 271.5 558.9 278.5C554.7 285.5 551.5 290.1 545.0 292.4C538.5 294.7 524.1 292.4 519.9 292.4" fill="none" stroke="#d9dadd" stroke-width="2" stroke-linecap="round"/>
<path d="M545.0 292.4C545.7 295.7 551.0 309.6 549.1 311.9C547.3 314.2 536.4 307.3 533.8 306.3" fill="none" stroke="#d9dadd" stroke-width="2" stroke-linecap="round"/>
<path d="M570.0 270.1 L586.7 292.4" fill="none" stroke="#d9dadd" stroke-width="2" stroke-linecap="round"/>
<path d="M581.2 250.7C584.4 252.5 596.9 260.4 600.6 261.8C604.3 263.2 599.2 257.6 603.4 259.0C607.6 260.4 618.7 269.7 625.7 270.1C632.6 270.6 637.7 264.3 645.2 261.8C652.6 259.2 658.6 256.7 670.2 254.8C681.9 253.0 707.6 251.4 715.0 250.7" fill="none" stroke="#d9dadd" stroke-width="2" stroke-linecap="round"/>
<path d="M622.9 270.1 L625.7 286.8" fill="none" stroke="#d9dadd" stroke-width="2" stroke-linecap="round"/>
<path d="M634.0 250.7C634.5 249.3 634.5 243.9 636.8 242.3C639.1 240.7 645.6 239.5 647.9 240.9C650.3 242.3 651.7 248.3 650.7 250.7C649.8 253.0 645.2 254.8 642.4 254.8C639.6 254.8 635.4 251.4 634.0 250.7" fill="none" stroke="#d9dadd" stroke-width="2" stroke-linecap="round"/>
<path d="M309.8 272.9C313.3 273.9 326.7 275.2 330.7 278.5C334.6 281.7 335.8 286.8 333.4 292.4C331.1 298.0 323.7 304.9 316.7 311.9C309.8 318.9 295.9 330.4 291.7 334.2" fill="none" stroke="#d9dadd" stroke-width="2" stroke-linecap="round"/>
<path d="M330.7 278.5 L350.1 268.8" fill="none" stroke="#d9dadd" stroke-width="2" stroke-linecap="round"/>
<path d="M333.4 292.4C335.8 295.7 344.6 306.3 347.4 311.9C350.1 317.5 351.1 322.1 350.1 325.8C349.2 329.5 343.2 332.8 341.8 334.2" fill="none" stroke="#d9dadd" stroke-width="2" stroke-linecap="round"/>
<path d="M311.2 278.5C309.8 281.7 302.4 291.5 302.8 298.0C303.3 304.5 312.1 314.2 314.0 317.5" fill="none" stroke="#d9dadd" stroke-width="2" stroke-linecap="round"/>
<path d="M291.7 339.7C294.0 340.7 304.2 341.6 305.6 345.3C307.0 349.0 301.0 359.2 300.0 362.0" fill="none" stroke="#d9dadd" stroke-width="2" stroke-linecap="round"/>
<path d="M433.6 373.1C436.9 373.1 447.1 371.3 453.1 373.1C459.2 375.0 464.3 379.8 469.8 384.3C475.4 388.8 483.7 397.5 486.5 400.1" fill="none" stroke="#d9dadd" stroke-width="2" stroke-linecap="round"/>
<path d="M380.8 387.0C383.5 386.6 391.9 382.1 397.5 384.3C403.0 386.4 411.4 397.5 414.2 400.1" fill="none" stroke="#d9dadd" stroke-width="2" stroke-linecap="round"/>
<path d="M386.3 395.4C389.6 397.2 400.2 402.8 405.8 406.5C411.4 410.2 417.4 415.8 419.7 417.7" fill="none" stroke="#d9dadd" stroke-width="2" stroke-linecap="round"/>
<path d="M589.5 225.6C591.8 223.8 602.5 218.7 603.4 214.5C604.3 210.3 596.5 202.9 595.1 200.6" fill="none" stroke="#d9dadd" stroke-width="2" stroke-linecap="round"/>
<path d="M609.0 228.4 L617.3 211.7" fill="none" stroke="#d9dadd" stroke-width="2" stroke-linecap="round"/>
<path d="M589.5 373.1C592.7 375.9 603.9 385.3 609.0 389.8C614.1 394.3 618.3 398.4 620.1 400.1" fill="none" stroke="#d9dadd" stroke-width="2" stroke-linecap="round"/>
<path d="M642.4 325.8C646.1 324.9 657.2 320.2 664.6 320.2C672.1 320.2 678.5 325.6 686.9 325.8C695.3 326.0 710.3 322.3 715.0 321.6" fill="none" stroke="#d9dadd" stroke-width="2" stroke-linecap="round"/>
<path d="M659.1 320.2C658.6 323.5 653.5 335.6 656.3 339.7C659.1 343.9 666.0 344.8 675.8 345.3C685.6 345.8 708.5 343.0 715.0 342.5" fill="none" stroke="#d9dadd" stroke-width="2" stroke-linecap="round"/>
<path d="M645.2 339.7C645.6 343.4 643.8 357.8 647.9 362.0C652.1 366.2 659.0 364.8 670.2 364.8C681.4 364.8 707.6 362.5 715.0 362.0" fill="none" stroke="#d9dadd" stroke-width="2" stroke-linecap="round"/>
<path d="M664.6 350.9 L709.2 353.6" fill="none" stroke="#d9dadd" stroke-width="2" stroke-linecap="round"/>
<path d="M678.6 328.6 L681.3 345.3" fill="none" stroke="#d9dadd" stroke-width="2" stroke-linecap="round"/>
<path d="M650.7 373.1C657.7 374.1 681.8 378.2 692.5 378.7C703.2 379.2 711.3 376.4 715.0 375.9" fill="none" stroke="#d9dadd" stroke-width="2" stroke-linecap="round"/>
<path d="M692.5 264.6C693.4 268.3 698.0 279.0 698.0 286.8C698.0 294.7 693.4 307.7 692.5 311.9" fill="none" stroke="#d9dadd" stroke-width="2" stroke-linecap="round"/>
<path d="M703.6 261.8C704.5 266.0 709.2 279.4 709.2 286.8C709.2 294.3 702.6 302.2 703.6 306.3C704.6 310.5 713.1 311.0 715.0 311.9" fill="none" stroke="#d9dadd" stroke-width="2" stroke-linecap="round"/>
<path d="M684.1 267.4 L686.9 286.8" fill="none" stroke="#d9dadd" stroke-width="2" stroke-linecap="round"/>
<path d="M711.1 224.3C713.2 223.9 720.2 220.8 723.7 222.2C727.2 223.6 731.4 228.5 732.1 232.7C732.9 236.9 727.2 242.6 727.9 247.5C728.6 252.4 735.7 257.0 736.4 262.2C737.1 267.5 730.7 274.5 732.1 279.1C733.6 283.7 742.7 287.9 744.8 289.6" fill="none" stroke="#d9dadd" stroke-width="2" stroke-linecap="round"/>
<path d="M738.5 222.2C740.9 222.9 749.4 223.2 753.2 226.4C757.1 229.6 761.3 236.6 761.7 241.1C762.0 245.7 755.0 249.2 755.3 253.8C755.7 258.4 762.4 266.1 763.8 268.5" fill="none" stroke="#d9dadd" stroke-width="2" stroke-linecap="round"/>
<path d="M694.2 262.2C695.6 263.3 700.9 264.3 702.6 268.5C704.4 272.8 705.5 281.5 704.8 287.5C704.0 293.5 697.4 299.5 698.4 304.4C699.5 309.3 708.3 318.4 711.1 317.0C713.9 315.6 716.0 302.3 715.3 295.9C714.6 289.6 708.3 281.9 706.9 279.1" fill="none" stroke="#d9dadd" stroke-width="2" stroke-linecap="round"/>
<path d="M715.3 230.6C716.3 233.8 721.3 243.3 721.6 249.6C722.0 255.9 716.7 262.2 717.4 268.5C718.1 274.9 725.1 280.8 725.8 287.5C726.5 294.2 720.9 302.3 721.6 308.6C722.3 314.9 728.6 322.6 730.0 325.4" fill="none" stroke="#d9dadd" stroke-width="2" stroke-linecap="round"/>
<path d="M746.9 277.0C749.0 277.7 755.7 278.4 759.5 281.2C763.4 284.0 766.9 292.8 770.1 293.8C773.2 294.9 777.1 288.6 778.5 287.5" fill="none" stroke="#d9dadd" stroke-width="2" stroke-linecap="round"/>
<path d="M765.9 226.4C768.0 225.7 776.1 219.7 778.5 222.2C781.0 224.6 781.3 235.9 780.6 241.1C779.9 246.4 774.3 249.2 774.3 253.8C774.3 258.4 777.5 265.0 780.6 268.5C783.8 272.1 791.2 273.8 793.3 274.9" fill="none" stroke="#d9dadd" stroke-width="2" stroke-linecap="round"/>
<path d="M690.0 317.0C693.2 318.4 702.6 323.3 709.0 325.4C715.3 327.6 722.0 329.7 727.9 329.7C733.9 329.7 739.5 327.6 744.8 325.4C750.1 323.3 757.1 318.4 759.5 317.0" fill="none" stroke="#d9dadd" stroke-width="2" stroke-linecap="round"/>
<path d="M690.0 333.9C694.2 335.3 707.2 341.6 715.3 342.3C723.4 343.0 734.6 338.8 738.5 338.1" fill="none" stroke="#d9dadd" stroke-width="2" stroke-linecap="round"/>
<path d="M702.6 350.7C706.2 352.1 717.4 355.7 723.7 359.2C730.0 362.7 739.2 366.9 740.6 371.8C742.0 376.7 733.6 385.9 732.1 388.7" fill="none" stroke="#d9dadd" stroke-width="2" stroke-linecap="round"/>
<path d="M690.0 367.6C693.2 367.2 703.3 364.4 709.0 365.5C714.6 366.5 721.6 370.1 723.7 373.9C725.8 377.8 724.1 384.3 721.6 388.7C719.2 393.0 711.1 398.2 709.0 400.1" fill="none" stroke="#d9dadd" stroke-width="2" stroke-linecap="round"/>
<path d="M749.0 300.2C751.1 301.6 757.4 307.9 761.7 308.6C765.9 309.3 772.2 305.1 774.3 304.4" fill="none" stroke="#d9dadd" stroke-width="2" stroke-linecap="round"/>
<path d="M759.5 325.4C762.0 324.7 769.4 320.5 774.3 321.2C779.2 321.9 786.6 328.3 789.1 329.7" fill="none" stroke="#d9dadd" stroke-width="2" stroke-linecap="round"/>
<path d="M742.7 241.1C743.4 244.3 746.9 254.8 746.9 260.1C746.9 265.4 743.4 270.7 742.7 272.8" fill="none" stroke="#d9dadd" stroke-width="2" stroke-linecap="round"/>
<path d="M772.2 312.8C774.7 312.1 782.4 307.9 786.9 308.6C791.5 309.3 797.5 315.6 799.6 317.0" fill="none" stroke="#d9dadd" stroke-width="2" stroke-linecap="round"/>
<path d="M808.0 201.1C810.8 202.2 819.3 207.1 824.9 207.4C830.5 207.8 836.1 202.9 841.7 203.2C847.4 203.6 852.3 209.2 858.6 209.5C864.9 209.9 876.2 206.0 879.7 205.3" fill="none" stroke="#d9dadd" stroke-width="2" stroke-linecap="round"/>
<path d="M829.1 241.1C831.9 240.4 841.4 235.9 846.0 236.9C850.5 238.0 854.4 243.3 856.5 247.5C858.6 251.7 856.8 258.7 858.6 262.2C860.4 265.7 865.6 267.5 867.0 268.5" fill="none" stroke="#d9dadd" stroke-width="2" stroke-linecap="round"/>
<path d="M808.0 279.1C809.4 278.0 813.6 272.8 816.4 272.8C819.3 272.8 823.5 278.0 824.9 279.1" fill="none" stroke="#d9dadd" stroke-width="2" stroke-linecap="round"/>
<path d="M837.5 283.3C839.6 284.0 846.7 284.7 850.2 287.5C853.7 290.3 856.5 295.2 858.6 300.2C860.7 305.1 862.1 314.2 862.8 317.0" fill="none" stroke="#d9dadd" stroke-width="2" stroke-linecap="round"/>
<path d="M829.1 300.2C830.5 302.3 836.5 307.9 837.5 312.8C838.6 317.7 834.7 324.0 835.4 329.7C836.1 335.3 840.7 343.7 841.7 346.5" fill="none" stroke="#d9dadd" stroke-width="2" stroke-linecap="round"/>
<path d="M846.0 312.8C845.6 315.6 842.4 324.7 843.8 329.7C845.3 334.6 852.6 340.2 854.4 342.3" fill="none" stroke="#d9dadd" stroke-width="2" stroke-linecap="round"/>
<path d="M818.6 333.9C820.3 336.0 824.5 343.7 829.1 346.5C833.7 349.3 840.3 350.7 846.0 350.7C851.6 350.7 860.0 347.2 862.8 346.5" fill="none" stroke="#d9dadd" stroke-width="2" stroke-linecap="round"/>
<path d="M803.8 367.6C805.9 366.2 811.5 359.9 816.4 359.2C821.4 358.5 827.7 363.4 833.3 363.4C838.9 363.4 844.5 358.5 850.2 359.2C855.8 359.9 864.2 366.2 867.0 367.6" fill="none" stroke="#d9dadd" stroke-width="2" stroke-linecap="round"/>
<path d="M808.0 384.5C810.8 383.8 819.3 379.5 824.9 380.2C830.5 380.9 836.1 388.0 841.7 388.7C847.4 389.4 855.8 385.2 858.6 384.5" fill="none" stroke="#d9dadd" stroke-width="2" stroke-linecap="round"/>
<path d="M816.4 400.1 L824.9 388.7" fill="none" stroke="#d9dadd" stroke-width="2" stroke-linecap="round"/>
<path d="M854.4 283.3C855.1 285.1 858.2 290.3 858.6 293.8C858.9 297.3 856.8 302.6 856.5 304.4" fill="none" stroke="#d9dadd" stroke-width="2" stroke-linecap="round"/>
<path d="M888.1 207.4C890.2 206.7 895.1 203.6 900.7 203.2C906.4 202.9 915.5 204.3 921.8 205.3C928.1 206.4 935.2 206.4 938.7 209.5C942.2 212.7 942.9 219.0 942.9 224.3C942.9 229.6 942.2 237.3 938.7 241.1C935.2 245.0 928.1 246.8 921.8 247.5C915.5 248.2 906.0 247.1 900.7 245.4C895.5 243.6 892.3 241.1 890.2 236.9C888.1 232.7 888.5 225.0 888.1 220.1C887.8 215.2 888.1 209.5 888.1 207.4" fill="none" stroke="#d9dadd" stroke-width="2" stroke-linecap="round"/>
<path d="M896.5 215.9C899.3 215.5 907.8 213.0 913.4 213.8C919.0 214.5 927.4 216.6 930.3 220.1C933.1 223.6 933.1 231.7 930.3 234.8C927.4 238.0 918.7 239.4 913.4 239.0C908.1 238.7 901.5 236.6 898.6 232.7C895.8 228.9 896.9 218.7 896.5 215.9" fill="none" stroke="#d9dadd" stroke-width="2" stroke-linecap="round"/>
<path d="M888.1 260.1C893.7 260.1 912.7 260.5 921.8 260.1C931.0 259.8 934.8 257.7 942.9 258.0C951.0 258.4 963.3 261.9 970.3 262.2C977.3 262.6 982.6 260.5 985.0 260.1" fill="none" stroke="#d9dadd" stroke-width="2" stroke-linecap="round"/>
<path d="M888.1 270.7C893.7 270.7 913.0 270.7 921.8 270.7C930.6 270.7 937.6 270.7 940.8 270.7" fill="none" stroke="#d9dadd" stroke-width="2" stroke-linecap="round"/>
<path d="M889.2 270.7 L889.2 308.6" fill="none" stroke="#d9dadd" stroke-width="2" stroke-linecap="round"/>
<path d="M899.7 270.7 L899.7 310.7" fill="none" stroke="#d9dadd" stroke-width="2" stroke-linecap="round"/>
<path d="M910.2 270.7 L910.2 306.5" fill="none" stroke="#d9dadd" stroke-width="2" stroke-linecap="round"/>
<path d="M920.8 270.7 L920.8 302.3" fill="none" stroke="#d9dadd" stroke-width="2" stroke-linecap="round"/>
<path d="M931.3 270.7 L932.4 298.1" fill="none" stroke="#d9dadd" stroke-width="2" stroke-linecap="round"/>
<path d="M940.8 270.7C941.1 272.8 940.4 279.8 942.9 283.3C945.4 286.8 948.9 290.7 955.5 291.7C962.2 292.8 978.4 290.0 982.9 289.6" fill="none" stroke="#d9dadd" stroke-width="2" stroke-linecap="round"/>
<path d="M888.1 308.6C891.6 308.2 902.9 307.9 909.2 306.5C915.5 305.1 920.4 301.9 926.0 300.2C931.7 298.4 936.6 296.3 942.9 295.9C949.2 295.6 957.3 296.6 964.0 298.1C970.6 299.5 979.8 303.3 982.9 304.4" fill="none" stroke="#d9dadd" stroke-width="2" stroke-linecap="round"/>
<path d="M879.7 323.3C883.2 323.7 893.7 326.2 900.7 325.4C907.8 324.7 914.8 321.2 921.8 319.1C928.8 317.0 935.9 313.5 942.9 312.8C949.9 312.1 957.3 314.2 964.0 314.9C970.6 315.6 979.8 316.7 982.9 317.0" fill="none" stroke="#d9dadd" stroke-width="2" stroke-linecap="round"/>
<path d="M892.3 336.0C895.8 336.3 906.7 338.4 913.4 338.1C920.1 337.7 925.3 334.9 932.4 333.9C939.4 332.8 948.2 331.4 955.5 331.8C962.9 332.1 973.1 335.3 976.6 336.0" fill="none" stroke="#d9dadd" stroke-width="2" stroke-linecap="round"/>
<path d="M936.6 333.9C937.3 336.0 937.6 344.4 940.8 346.5C944.0 348.6 950.6 347.2 955.5 346.5C960.5 345.8 967.8 343.0 970.3 342.3" fill="none" stroke="#d9dadd" stroke-width="2" stroke-linecap="round"/>
<path d="M875.5 355.0C878.3 354.3 888.1 349.3 892.3 350.7C896.5 352.1 896.5 362.0 900.7 363.4C905.0 364.8 914.8 359.9 917.6 359.2" fill="none" stroke="#d9dadd" stroke-width="2" stroke-linecap="round"/>
<path d="M862.8 373.9C865.6 372.9 874.1 367.2 879.7 367.6C885.3 367.9 890.9 373.2 896.5 376.0C902.2 378.8 909.2 383.8 913.4 384.5C917.6 385.2 920.4 380.9 921.8 380.2" fill="none" stroke="#d9dadd" stroke-width="2" stroke-linecap="round"/>
<path d="M850.2 388.7C853.0 388.0 862.1 383.8 867.0 384.5C871.9 385.2 875.5 392.2 879.7 392.9C883.9 393.6 887.4 388.7 892.3 388.7C897.2 388.7 906.4 392.2 909.2 392.9" fill="none" stroke="#d9dadd" stroke-width="2" stroke-linecap="round"/>
<path d="M892.3 336.0 L890.2 350.7" fill="none" stroke="#d9dadd" stroke-width="2" stroke-linecap="round"/>
<path d="M913.4 338.1 L915.5 355.0" fill="none" stroke="#d9dadd" stroke-width="2" stroke-linecap="round"/>
<path d="M953.4 226.4C956.2 226.0 965.4 223.2 970.3 224.3C975.2 225.3 980.8 231.3 982.9 232.7" fill="none" stroke="#d9dadd" stroke-width="2" stroke-linecap="round"/>
<path d="M949.2 241.1C951.7 242.2 958.4 246.1 964.0 247.5C969.6 248.9 979.8 249.2 982.9 249.6" fill="none" stroke="#d9dadd" stroke-width="2" stroke-linecap="round"/>
<path d="M953.4 209.5C955.2 210.9 959.1 216.9 964.0 218.0C968.9 219.0 979.8 216.2 982.9 215.9" fill="none" stroke="#d9dadd" stroke-width="2" stroke-linecap="round"/>
<path d="M900.7 289.6 L900.7 260.1" fill="none" stroke="#d9dadd" stroke-width="2" stroke-linecap="round"/>
<path d="M921.8 247.5 L921.8 260.1" fill="none" stroke="#d9dadd" stroke-width="2" stroke-linecap="round"/>
<path d="M942.9 224.3 L953.4 226.4" fill="none" stroke="#d9dadd" stroke-width="2" stroke-linecap="round"/>
<path d="M700.0 440.1C703.7 439.2 714.8 434.1 722.3 434.5C729.7 435.0 737.1 442.4 744.5 442.9C752.0 443.3 760.3 436.9 766.8 437.3C773.3 437.8 780.7 444.3 783.5 445.7" fill="none" stroke="#d9dadd" stroke-width="2" stroke-linecap="round"/>
<path d="M716.7 417.8C720.4 417.4 731.5 414.1 739.0 415.0C746.4 416.0 753.8 422.5 761.2 423.4C768.7 424.3 776.1 419.7 783.5 420.6C790.9 421.5 798.3 428.5 805.8 429.0C813.2 429.4 819.7 423.9 828.0 423.4C836.4 422.9 847.5 426.6 855.9 426.2C864.2 425.7 874.4 421.5 878.1 420.6" fill="none" stroke="#d9dadd" stroke-width="2" stroke-linecap="round"/>
<path d="M783.5 445.7 L783.5 462.4" fill="none" stroke="#d9dadd" stroke-width="2" stroke-linecap="round"/>
<path d="M878.1 420.6C879.1 423.4 883.2 430.8 883.7 437.3C884.2 443.8 880.0 456.3 880.9 459.6C881.8 462.8 887.9 457.3 889.3 456.8" fill="none" stroke="#d9dadd" stroke-width="2" stroke-linecap="round"/>
<path d="M878.1 473.5C880.4 471.2 889.3 465.1 892.0 459.6C894.8 454.0 894.4 443.3 894.8 440.1" fill="none" stroke="#d9dadd" stroke-width="2" stroke-linecap="round"/>
<path d="M797.4 518.0C802.1 517.6 815.5 515.5 825.2 515.2C835.0 515.0 844.3 516.6 855.9 516.6C867.5 516.6 882.8 514.5 894.8 515.2C906.9 515.9 922.7 519.9 928.2 520.8" fill="none" stroke="#d9dadd" stroke-width="2" stroke-linecap="round"/>
<path d="M816.9 523.6C821.5 524.5 836.4 527.3 844.7 529.2C853.1 531.0 858.6 531.9 867.0 534.7C875.3 537.5 890.2 544.0 894.8 545.9" fill="none" stroke="#d9dadd" stroke-width="2" stroke-linecap="round"/>
<path d="M822.5 534.7C828.0 536.6 846.6 542.1 855.9 545.9C865.1 549.6 868.8 552.8 878.1 557.0C887.4 561.2 906.0 568.6 911.5 570.9" fill="none" stroke="#d9dadd" stroke-width="2" stroke-linecap="round"/>
<path d="M867.0 518.0C868.8 521.7 873.5 533.8 878.1 540.3C882.8 546.8 891.1 550.5 894.8 557.0C898.5 563.5 899.5 575.5 900.4 579.3" fill="none" stroke="#d9dadd" stroke-width="2" stroke-linecap="round"/>
<path d="M903.2 518.0C904.6 521.7 908.3 533.8 911.5 540.3C914.8 546.8 919.4 551.4 922.7 557.0C925.9 562.6 926.4 569.5 931.0 573.7C935.6 577.9 947.2 580.6 950.5 582.0" fill="none" stroke="#d9dadd" stroke-width="2" stroke-linecap="round"/>
<path d="M928.2 520.8C930.1 524.1 935.6 534.3 939.4 540.3C943.1 546.3 947.2 551.4 950.5 557.0C953.7 562.6 957.4 570.9 958.8 573.7" fill="none" stroke="#d9dadd" stroke-width="2" stroke-linecap="round"/>
<path d="M855.9 557.0C857.7 560.7 862.4 573.0 867.0 579.3C871.6 585.5 880.9 592.0 883.7 594.6" fill="none" stroke="#d9dadd" stroke-width="2" stroke-linecap="round"/>
<path d="M741.7 562.6C746.4 563.5 761.2 564.4 769.6 568.1C777.9 571.8 784.9 580.4 791.8 584.8C798.8 589.2 808.1 592.9 811.3 594.6" fill="none" stroke="#d9dadd" stroke-width="2" stroke-linecap="round"/>
<path d="M739.0 568.1C741.7 570.9 749.2 580.4 755.7 584.8C762.2 589.2 774.2 592.9 777.9 594.6" fill="none" stroke="#d9dadd" stroke-width="2" stroke-linecap="round"/>
<path d="M867.0 568.1C870.7 570.4 881.8 577.6 889.3 582.0C896.7 586.4 907.8 592.5 911.5 594.6" fill="none" stroke="#d9dadd" stroke-width="2" stroke-linecap="round"/>
<path d="M700.0 481.8C702.8 483.2 712.1 490.2 716.7 490.2C721.3 490.2 726.0 483.2 727.8 481.8" fill="none" stroke="#d9dadd" stroke-width="2" stroke-linecap="round"/>
<path d="M700.0 562.6C704.6 562.1 719.5 558.8 727.8 559.8C736.2 560.7 746.4 566.7 750.1 568.1" fill="none" stroke="#d9dadd" stroke-width="2" stroke-linecap="round"/>
<path d="M933.8 579.3C936.6 580.2 945.8 582.3 950.5 584.8C955.1 587.4 959.8 592.9 961.6 594.6" fill="none" stroke="#d9dadd" stroke-width="2" stroke-linecap="round"/>
<path d="M917.1 434.5C919.9 437.3 929.1 444.7 933.8 451.2C938.4 457.7 942.1 466.1 944.9 473.5C947.7 480.9 949.6 492.1 950.5 495.8" fill="none" stroke="#d9dadd" stroke-width="2" stroke-linecap="round"/>
<path d="M922.7 429.0C926.4 430.8 939.4 434.5 944.9 440.1C950.5 445.7 953.7 454.9 956.1 462.4C958.4 469.8 957.0 477.2 958.8 484.6C960.7 492.1 965.8 503.2 967.2 506.9" fill="none" stroke="#d9dadd" stroke-width="2" stroke-linecap="round"/>
<path d="M911.5 459.6C913.4 463.3 918.5 474.9 922.7 481.8C926.8 488.8 934.3 498.1 936.6 501.3" fill="none" stroke="#d9dadd" stroke-width="2" stroke-linecap="round"/>
<path d="M933.8 431.7C938.4 432.7 954.2 433.6 961.6 437.3C969.0 441.0 973.7 448.0 978.3 454.0C983.0 460.0 987.6 470.2 989.5 473.5" fill="none" stroke="#d9dadd" stroke-width="2" stroke-linecap="round"/>
<path d="M944.9 429.0C949.6 429.4 964.4 429.0 972.8 431.7C981.1 434.5 991.3 443.3 995.0 445.7" fill="none" stroke="#d9dadd" stroke-width="2" stroke-linecap="round"/>
<path d="M939.4 582.0 L967.2 584.8" fill="none" stroke="#d9dadd" stroke-width="2" stroke-linecap="round"/>
<path d="M978.3 557.0C981.1 560.7 990.4 573.0 995.0 579.3C999.7 585.5 1004.3 592.0 1006.2 594.6" fill="none" stroke="#d9dadd" stroke-width="2" stroke-linecap="round"/>
<path d="M972.8 568.1 L989.5 594.6" fill="none" stroke="#d9dadd" stroke-width="2" stroke-linecap="round"/>
<path d="M439.1 375.3C441.9 374.8 449.5 370.6 456.1 372.4C462.7 374.3 471.2 381.4 478.7 386.6C486.3 391.8 493.8 399.3 501.4 403.6C508.9 407.8 517.9 410.2 524.0 412.1C530.1 413.9 535.8 414.4 538.2 414.9" fill="none" stroke="#d9dadd" stroke-width="2" stroke-linecap="round"/>
<path d="M436.3 383.8C439.6 383.8 449.0 380.9 456.1 383.8C463.2 386.6 471.2 395.6 478.7 400.7C486.3 405.9 492.9 411.1 501.4 414.9C509.9 418.7 525.0 422.0 529.7 423.4" fill="none" stroke="#d9dadd" stroke-width="2" stroke-linecap="round"/>
<path d="M439.1 395.1C442.9 396.5 454.2 400.3 461.8 403.6C469.3 406.9 476.8 411.1 484.4 414.9C491.9 418.7 499.5 422.9 507.0 426.2C514.6 429.5 525.9 433.3 529.7 434.7" fill="none" stroke="#d9dadd" stroke-width="2" stroke-linecap="round"/>
<path d="M450.4 412.1C454.2 413.9 465.5 420.1 473.1 423.4C480.6 426.7 487.2 429.0 495.7 431.9C504.2 434.7 519.3 438.9 524.0 440.4" fill="none" stroke="#d9dadd" stroke-width="2" stroke-linecap="round"/>
<path d="M450.4 375.3 L478.7 423.4" fill="none" stroke="#d9dadd" stroke-width="2" stroke-linecap="round"/>
<path d="M470.2 423.4C473.5 419.1 485.3 404.0 490.1 397.9C494.8 391.8 497.1 388.5 498.5 386.6" fill="none" stroke="#d9dadd" stroke-width="2" stroke-linecap="round"/>
<path d="M541.0 414.9C541.9 413.5 543.8 408.3 546.6 406.4C549.5 404.5 554.2 403.6 558.0 403.6C561.7 403.6 567.4 405.9 569.3 406.4" fill="none" stroke="#d9dadd" stroke-width="2" stroke-linecap="round"/>
<path d="M541.0 414.9C540.5 418.7 537.2 430.9 538.2 437.5C539.1 444.1 545.2 451.7 546.6 454.5" fill="none" stroke="#d9dadd" stroke-width="2" stroke-linecap="round"/>
<path d="M546.6 406.4C546.2 410.6 542.9 424.3 543.8 431.9C544.8 439.4 551.8 444.1 552.3 451.7C552.8 459.2 550.4 470.1 546.6 477.1C542.9 484.2 532.5 491.3 529.7 494.1" fill="none" stroke="#d9dadd" stroke-width="2" stroke-linecap="round"/>
<path d="M560.8 420.5C565.0 420.1 579.2 417.2 586.3 417.7C593.3 418.2 600.9 419.6 603.2 423.4C605.6 427.2 599.0 435.2 600.4 440.4C601.8 445.5 609.8 452.1 611.7 454.5" fill="none" stroke="#d9dadd" stroke-width="2" stroke-linecap="round"/>
<path d="M558.0 437.5C561.7 437.1 574.0 432.8 580.6 434.7C587.2 436.6 591.9 444.1 597.6 448.8C603.2 453.6 611.7 460.6 614.6 463.0" fill="none" stroke="#d9dadd" stroke-width="2" stroke-linecap="round"/>
<path d="M580.6 395.1C584.4 394.1 594.8 387.5 603.2 389.4C611.7 391.3 624.9 400.3 631.5 406.4C638.1 412.5 641.0 422.9 642.9 426.2" fill="none" stroke="#d9dadd" stroke-width="2" stroke-linecap="round"/>
<path d="M594.8 372.4C598.1 374.3 607.5 379.5 614.6 383.8C621.6 388.0 631.1 392.7 637.2 397.9C643.3 403.1 648.0 408.3 651.3 414.9C654.6 421.5 656.1 433.8 657.0 437.5" fill="none" stroke="#d9dadd" stroke-width="2" stroke-linecap="round"/>
<path d="M620.2 434.7C624.0 436.1 637.2 439.4 642.9 443.2C648.5 447.0 654.2 454.0 654.2 457.3C654.2 460.6 644.7 462.1 642.9 463.0" fill="none" stroke="#d9dadd" stroke-width="2" stroke-linecap="round"/>
<path d="M628.7 414.9C631.1 414.4 637.7 410.6 642.9 412.1C648.0 413.5 657.0 421.5 659.8 423.4" fill="none" stroke="#d9dadd" stroke-width="2" stroke-linecap="round"/>
<path d="M560.8 463.0C563.2 461.6 568.8 454.5 574.9 454.5C581.1 454.5 593.8 461.6 597.6 463.0" fill="none" stroke="#d9dadd" stroke-width="2" stroke-linecap="round"/>
<path d="M382.5 386.6C384.4 385.6 389.6 380.9 393.8 380.9C398.1 380.9 403.3 383.3 408.0 386.6C412.7 389.9 420.7 397.0 422.1 400.7C423.6 404.5 420.3 409.7 416.5 409.2C412.7 408.8 404.2 400.7 399.5 397.9C394.8 395.1 390.1 393.2 388.2 392.3" fill="none" stroke="#d9dadd" stroke-width="2" stroke-linecap="round"/>
<path d="M388.2 392.3C392.0 395.1 404.2 404.0 410.8 409.2C417.4 414.4 425.0 421.0 427.8 423.4" fill="none" stroke="#d9dadd" stroke-width="2" stroke-linecap="round"/>
<path d="M456.1 437.5C458.9 440.4 469.3 449.8 473.1 454.5C476.8 459.2 477.8 463.9 478.7 465.8" fill="none" stroke="#d9dadd" stroke-width="2" stroke-linecap="round"/>
<path d="M492.9 454.5C495.2 455.9 502.8 460.2 507.0 463.0C511.3 465.8 516.5 470.1 518.4 471.5" fill="none" stroke="#d9dadd" stroke-width="2" stroke-linecap="round"/>
<path d="M518.4 505.4C519.3 504.5 520.7 502.6 524.0 499.8C527.3 496.9 535.8 490.3 538.2 488.5" fill="none" stroke="#d9dadd" stroke-width="2" stroke-linecap="round"/>
<path d="M642.9 465.8C647.6 466.8 662.7 471.5 671.2 471.5C679.6 471.5 686.5 467.2 693.8 465.8C701.1 464.4 711.5 463.5 715.0 463.0" fill="none" stroke="#d9dadd" stroke-width="2" stroke-linecap="round"/>
<path d="M665.5 347.0C668.3 346.0 676.8 340.4 682.5 341.3C688.1 342.3 694.0 351.7 699.4 352.6C704.9 353.6 712.4 347.9 715.0 347.0" fill="none" stroke="#d9dadd" stroke-width="2" stroke-linecap="round"/>
<path d="M645.7 358.3C649.0 359.7 661.7 362.1 665.5 366.8C669.3 371.5 670.2 382.3 668.3 386.6C666.4 390.8 656.5 391.3 654.2 392.3" fill="none" stroke="#d9dadd" stroke-width="2" stroke-linecap="round"/>
<path d="M671.2 380.9C674.9 380.0 686.5 374.3 693.8 375.3C701.1 376.2 711.5 384.7 715.0 386.6" fill="none" stroke="#d9dadd" stroke-width="2" stroke-linecap="round"/>
<path d="M631.5 528.1C634.8 526.7 644.7 519.6 651.3 519.6C657.9 519.6 666.9 523.8 671.2 528.1C675.4 532.3 675.9 542.2 676.8 545.1" fill="none" stroke="#d9dadd" stroke-width="2" stroke-linecap="round"/>
<path d="M659.8 562.0C661.7 559.2 667.4 546.0 671.2 545.1C674.9 544.1 680.6 554.5 682.5 556.4" fill="none" stroke="#d9dadd" stroke-width="2" stroke-linecap="round"/>
<path d="M648.5 332.8 L654.2 352.6" fill="none" stroke="#d9dadd" stroke-width="2" stroke-linecap="round"/>
<path d="M693.8 414.9 L715.0 409.2" fill="none" stroke="#d9dadd" stroke-width="2" stroke-linecap="round"/>
<path d="M634.4 471.5C637.7 474.3 649.0 483.7 654.2 488.5C659.4 493.2 663.6 497.9 665.5 499.8" fill="none" stroke="#d9dadd" stroke-width="2" stroke-linecap="round"/>
<path d="M625.9 437.5 L637.2 457.3" fill="none" stroke="#d9dadd" stroke-width="2" stroke-linecap="round"/>
<path d="M292.0 347.0C293.4 345.6 299.5 341.3 300.5 338.5C301.4 335.7 298.1 331.4 297.6 330.0" fill="none" stroke="#d9dadd" stroke-width="2" stroke-linecap="round"/>
<line x1="1078.0" y1="207.3" x2="1333.0" y2="207.3" stroke="#d9dadd" stroke-width="1.8"/>
<line x1="1078.0" y1="219.9" x2="1333.0" y2="219.9" stroke="#d9dadd" stroke-width="1.8"/>
<line x1="1078.0" y1="232.5" x2="1333.0" y2="232.5" stroke="#d9dadd" stroke-width="1.8"/>
<line x1="1062.0" y1="245.1" x2="1333.0" y2="245.1" stroke="#d9dadd" stroke-width="1.8"/>
<line x1="1062.0" y1="257.7" x2="1333.0" y2="257.7" stroke="#d9dadd" stroke-width="1.8"/>
<line x1="992.0" y1="270.3" x2="1333.0" y2="270.3" stroke="#d9dadd" stroke-width="1.8"/>
<line x1="1019.4" y1="276.6" x2="1180.0" y2="276.6" stroke="#d9dadd" stroke-width="1.6"/>
<line x1="1192.0" y1="276.6" x2="1328.5" y2="276.6" stroke="#d9dadd" stroke-width="1.6"/>
<line x1="992.0" y1="282.9" x2="1333.0" y2="282.9" stroke="#d9dadd" stroke-width="1.8"/>
<line x1="1039.1" y1="289.2" x2="1180.0" y2="289.2" stroke="#d9dadd" stroke-width="1.6"/>
<line x1="1192.0" y1="289.2" x2="1330.8" y2="289.2" stroke="#d9dadd" stroke-width="1.6"/>
<line x1="992.0" y1="295.5" x2="1333.0" y2="295.5" stroke="#d9dadd" stroke-width="1.8"/>
<line x1="1032.2" y1="301.8" x2="1180.0" y2="301.8" stroke="#d9dadd" stroke-width="1.6"/>
<line x1="1192.0" y1="301.8" x2="1322.0" y2="301.8" stroke="#d9dadd" stroke-width="1.6"/>
<line x1="992.0" y1="308.1" x2="1333.0" y2="308.1" stroke="#d9dadd" stroke-width="1.8"/>
<line x1="1003.5" y1="314.4" x2="1180.0" y2="314.4" stroke="#d9dadd" stroke-width="1.6"/>
<line x1="1192.0" y1="314.4" x2="1317.8" y2="314.4" stroke="#d9dadd" stroke-width="1.6"/>
<line x1="992.0" y1="320.7" x2="1333.0" y2="320.7" stroke="#d9dadd" stroke-width="1.8"/>
<line x1="1002.2" y1="327.0" x2="1180.0" y2="327.0" stroke="#d9dadd" stroke-width="1.6"/>
<line x1="1192.0" y1="327.0" x2="1320.0" y2="327.0" stroke="#d9dadd" stroke-width="1.6"/>
<line x1="992.0" y1="333.3" x2="1333.0" y2="333.3" stroke="#d9dadd" stroke-width="1.8"/>
<line x1="1004.2" y1="339.6" x2="1180.0" y2="339.6" stroke="#d9dadd" stroke-width="1.6"/>
<line x1="1192.0" y1="339.6" x2="1330.3" y2="339.6" stroke="#d9dadd" stroke-width="1.6"/>
<line x1="992.0" y1="345.9" x2="1333.0" y2="345.9" stroke="#d9dadd" stroke-width="1.8"/>
<line x1="1025.5" y1="352.2" x2="1180.0" y2="352.2" stroke="#d9dadd" stroke-width="1.6"/>
<line x1="1192.0" y1="352.2" x2="1308.2" y2="352.2" stroke="#d9dadd" stroke-width="1.6"/>
<line x1="992.0" y1="358.5" x2="1333.0" y2="358.5" stroke="#d9dadd" stroke-width="1.8"/>
<line x1="1007.4" y1="364.8" x2="1180.0" y2="364.8" stroke="#d9dadd" stroke-width="1.6"/>
<line x1="1192.0" y1="364.8" x2="1326.3" y2="364.8" stroke="#d9dadd" stroke-width="1.6"/>
<line x1="992.0" y1="371.1" x2="1333.0" y2="371.1" stroke="#d9dadd" stroke-width="1.8"/>
<line x1="1037.6" y1="377.4" x2="1180.0" y2="377.4" stroke="#d9dadd" stroke-width="1.6"/>
<line x1="1192.0" y1="377.4" x2="1304.6" y2="377.4" stroke="#d9dadd" stroke-width="1.6"/>
<line x1="992.0" y1="383.7" x2="1333.0" y2="383.7" stroke="#d9dadd" stroke-width="1.8"/>
<line x1="1034.6" y1="390.0" x2="1180.0" y2="390.0" stroke="#d9dadd" stroke-width="1.6"/>
<line x1="1192.0" y1="390.0" x2="1321.1" y2="390.0" stroke="#d9dadd" stroke-width="1.6"/>
<line x1="992.0" y1="396.3" x2="1333.0" y2="396.3" stroke="#d9dadd" stroke-width="1.8"/>
<line x1="1058.6" y1="402.6" x2="1180.0" y2="402.6" stroke="#d9dadd" stroke-width="1.6"/>
<line x1="1192.0" y1="402.6" x2="1331.6" y2="402.6" stroke="#d9dadd" stroke-width="1.6"/>
<line x1="992.0" y1="408.9" x2="1333.0" y2="408.9" stroke="#d9dadd" stroke-width="1.8"/>
<line x1="1051.5" y1="415.2" x2="1180.0" y2="415.2" stroke="#d9dadd" stroke-width="1.6"/>
<line x1="1192.0" y1="415.2" x2="1324.3" y2="415.2" stroke="#d9dadd" stroke-width="1.6"/>
<line x1="992.0" y1="421.5" x2="1333.0" y2="421.5" stroke="#d9dadd" stroke-width="1.8"/>
<line x1="1008.7" y1="427.8" x2="1180.0" y2="427.8" stroke="#d9dadd" stroke-width="1.6"/>
<line x1="1192.0" y1="427.8" x2="1329.5" y2="427.8" stroke="#d9dadd" stroke-width="1.6"/>
<line x1="917.0" y1="434.1" x2="1333.0" y2="434.1" stroke="#d9dadd" stroke-width="1.8"/>
<line x1="1018.5" y1="440.4" x2="1180.0" y2="440.4" stroke="#d9dadd" stroke-width="1.6"/>
<line x1="1192.0" y1="440.4" x2="1308.5" y2="440.4" stroke="#d9dadd" stroke-width="1.6"/>
<line x1="917.8" y1="446.7" x2="1333.0" y2="446.7" stroke="#d9dadd" stroke-width="1.8"/>
<line x1="1010.8" y1="453.0" x2="1180.0" y2="453.0" stroke="#d9dadd" stroke-width="1.6"/>
<line x1="1192.0" y1="453.0" x2="1315.6" y2="453.0" stroke="#d9dadd" stroke-width="1.6"/>
<line x1="923.5" y1="459.3" x2="1333.0" y2="459.3" stroke="#d9dadd" stroke-width="1.8"/>
<line x1="1038.3" y1="465.6" x2="1180.0" y2="465.6" stroke="#d9dadd" stroke-width="1.6"/>
<line x1="1192.0" y1="465.6" x2="1321.8" y2="465.6" stroke="#d9dadd" stroke-width="1.6"/>
<line x1="929.1" y1="471.9" x2="1333.0" y2="471.9" stroke="#d9dadd" stroke-width="1.8"/>
<line x1="1032.9" y1="478.2" x2="1180.0" y2="478.2" stroke="#d9dadd" stroke-width="1.6"/>
<line x1="1192.0" y1="478.2" x2="1331.1" y2="478.2" stroke="#d9dadd" stroke-width="1.6"/>
<line x1="936.4" y1="484.5" x2="1333.0" y2="484.5" stroke="#d9dadd" stroke-width="1.8"/>
<line x1="1003.6" y1="490.8" x2="1180.0" y2="490.8" stroke="#d9dadd" stroke-width="1.6"/>
<line x1="1192.0" y1="490.8" x2="1326.8" y2="490.8" stroke="#d9dadd" stroke-width="1.6"/>
<line x1="944.4" y1="497.1" x2="1333.0" y2="497.1" stroke="#d9dadd" stroke-width="1.8"/>
<line x1="1040.8" y1="503.4" x2="1180.0" y2="503.4" stroke="#d9dadd" stroke-width="1.6"/>
<line x1="1192.0" y1="503.4" x2="1320.2" y2="503.4" stroke="#d9dadd" stroke-width="1.6"/>
<line x1="956.0" y1="509.7" x2="1331.4" y2="509.7" stroke="#d9dadd" stroke-width="1.8"/>
<line x1="1018.8" y1="516.0" x2="1180.0" y2="516.0" stroke="#d9dadd" stroke-width="1.6"/>
<line x1="1192.0" y1="516.0" x2="1308.1" y2="516.0" stroke="#d9dadd" stroke-width="1.6"/>
<line x1="967.0" y1="522.3" x2="1319.3" y2="522.3" stroke="#d9dadd" stroke-width="1.8"/>
<line x1="1027.2" y1="528.6" x2="1180.0" y2="528.6" stroke="#d9dadd" stroke-width="1.6"/>
<line x1="1192.0" y1="528.6" x2="1302.8" y2="528.6" stroke="#d9dadd" stroke-width="1.6"/>
<line x1="975.7" y1="534.9" x2="1304.3" y2="534.9" stroke="#d9dadd" stroke-width="1.8"/>
<line x1="1047.7" y1="541.2" x2="1180.0" y2="541.2" stroke="#d9dadd" stroke-width="1.6"/>
<line x1="1192.0" y1="541.2" x2="1275.9" y2="541.2" stroke="#d9dadd" stroke-width="1.6"/>
<line x1="978.9" y1="547.5" x2="1289.3" y2="547.5" stroke="#d9dadd" stroke-width="1.8"/>
<line x1="1014.6" y1="553.8" x2="1180.0" y2="553.8" stroke="#d9dadd" stroke-width="1.6"/>
<line x1="1192.0" y1="553.8" x2="1263.4" y2="553.8" stroke="#d9dadd" stroke-width="1.6"/>
<line x1="978.5" y1="560.1" x2="1271.9" y2="560.1" stroke="#d9dadd" stroke-width="1.8"/>
<line x1="1031.5" y1="566.4" x2="1180.0" y2="566.4" stroke="#d9dadd" stroke-width="1.6"/>
<line x1="1192.0" y1="566.4" x2="1242.3" y2="566.4" stroke="#d9dadd" stroke-width="1.6"/>
<line x1="977.9" y1="572.7" x2="1265.2" y2="572.7" stroke="#d9dadd" stroke-width="1.8"/>
<line x1="1043.8" y1="579.0" x2="1180.0" y2="579.0" stroke="#d9dadd" stroke-width="1.6"/>
<line x1="1192.0" y1="579.0" x2="1254.9" y2="579.0" stroke="#d9dadd" stroke-width="1.6"/>
<line x1="977.4" y1="585.3" x2="1262.9" y2="585.3" stroke="#d9dadd" stroke-width="1.8"/>
<line x1="1058.8" y1="591.6" x2="1180.0" y2="591.6" stroke="#d9dadd" stroke-width="1.6"/>
<line x1="1192.0" y1="591.6" x2="1258.7" y2="591.6" stroke="#d9dadd" stroke-width="1.6"/>
<line x1="929.0" y1="425.0" x2="929.0" y2="592.0" stroke="#d9dadd" stroke-width="1.8"/>
<line x1="954.6" y1="425.0" x2="954.6" y2="592.0" stroke="#d9dadd" stroke-width="1.8"/>
<line x1="980.2" y1="425.0" x2="980.2" y2="592.0" stroke="#d9dadd" stroke-width="1.8"/>
<line x1="1005.8" y1="268.0" x2="1005.8" y2="592.0" stroke="#d9dadd" stroke-width="1.8"/>
<line x1="1031.4" y1="268.0" x2="1031.4" y2="592.0" stroke="#d9dadd" stroke-width="1.8"/>
<line x1="1057.0" y1="268.0" x2="1057.0" y2="592.0" stroke="#d9dadd" stroke-width="1.8"/>
<line x1="1082.6" y1="203.0" x2="1082.6" y2="592.0" stroke="#d9dadd" stroke-width="1.8"/>
<line x1="1108.2" y1="203.0" x2="1108.2" y2="592.0" stroke="#d9dadd" stroke-width="1.8"/>
<line x1="1133.8" y1="203.0" x2="1133.8" y2="592.0" stroke="#d9dadd" stroke-width="1.8"/>
<line x1="1159.4" y1="203.0" x2="1159.4" y2="592.0" stroke="#d9dadd" stroke-width="1.8"/>
<line x1="1212.5" y1="203.0" x2="1212.5" y2="592.0" stroke="#d9dadd" stroke-width="1.8"/>
<line x1="1263.5" y1="203.0" x2="1263.5" y2="580.0" stroke="#d9dadd" stroke-width="1.8"/>
<line x1="1289.0" y1="203.0" x2="1289.0" y2="548.0" stroke="#d9dadd" stroke-width="1.8"/>
<line x1="1314.5" y1="203.0" x2="1314.5" y2="527.0" stroke="#d9dadd" stroke-width="1.8"/>
<line x1="1044.0" y1="425.0" x2="1044.0" y2="470.0" stroke="#d9dadd" stroke-width="1.6"/>
<line x1="1070.0" y1="425.0" x2="1070.0" y2="475.0" stroke="#d9dadd" stroke-width="1.6"/>
<line x1="1095.5" y1="300.0" x2="1095.5" y2="360.0" stroke="#d9dadd" stroke-width="1.6"/>
<line x1="1146.0" y1="300.0" x2="1146.0" y2="420.0" stroke="#d9dadd" stroke-width="1.6"/>
<line x1="1172.0" y1="430.0" x2="1172.0" y2="520.0" stroke="#d9dadd" stroke-width="1.6"/>
<line x1="1200.0" y1="275.0" x2="1200.0" y2="330.0" stroke="#d9dadd" stroke-width="1.6"/>
<line x1="1225.0" y1="330.0" x2="1225.0" y2="420.0" stroke="#d9dadd" stroke-width="1.6"/>
<line x1="1250.0" y1="450.0" x2="1250.0" y2="546.0" stroke="#d9dadd" stroke-width="1.6"/>
<line x1="1276.0" y1="270.0" x2="1276.0" y2="360.0" stroke="#d9dadd" stroke-width="1.6"/>
<line x1="1302.0" y1="430.0" x2="1302.0" y2="500.0" stroke="#d9dadd" stroke-width="1.6"/>
<line x1="1121.0" y1="525.0" x2="1121.0" y2="592.0" stroke="#d9dadd" stroke-width="1.6"/>
<line x1="1018.0" y1="470.0" x2="1018.0" y2="560.0" stroke="#d9dadd" stroke-width="1.6"/>
<line x1="1146.0" y1="440.0" x2="1146.0" y2="480.0" stroke="#d9dadd" stroke-width="1.6"/>
<line x1="1462.0" y1="262.0" x2="1421.2" y2="347.5" stroke="#d9dadd" stroke-width="1.6"/>
<line x1="1469.2" y1="264.2" x2="1429.2" y2="347.9" stroke="#d9dadd" stroke-width="1.6"/>
<line x1="1476.4" y1="266.4" x2="1437.3" y2="348.3" stroke="#d9dadd" stroke-width="1.6"/>
<line x1="1483.6" y1="268.6" x2="1445.3" y2="348.7" stroke="#d9dadd" stroke-width="1.6"/>
<line x1="1490.8" y1="270.8" x2="1453.4" y2="349.1" stroke="#d9dadd" stroke-width="1.6"/>
<line x1="1498.0" y1="273.0" x2="1461.5" y2="349.5" stroke="#d9dadd" stroke-width="1.6"/>
<line x1="1505.2" y1="275.2" x2="1469.5" y2="349.9" stroke="#d9dadd" stroke-width="1.6"/>
<line x1="1512.4" y1="277.4" x2="1477.6" y2="350.3" stroke="#d9dadd" stroke-width="1.6"/>
<line x1="1519.6" y1="279.6" x2="1485.6" y2="350.7" stroke="#d9dadd" stroke-width="1.6"/>
<line x1="1526.8" y1="281.8" x2="1493.7" y2="351.1" stroke="#d9dadd" stroke-width="1.6"/>
<line x1="1534.0" y1="284.0" x2="1501.8" y2="351.5" stroke="#d9dadd" stroke-width="1.6"/>
<line x1="1541.2" y1="286.2" x2="1509.8" y2="351.9" stroke="#d9dadd" stroke-width="1.6"/>
<line x1="1548.4" y1="288.4" x2="1517.9" y2="352.3" stroke="#d9dadd" stroke-width="1.6"/>
<line x1="1555.6" y1="290.6" x2="1525.9" y2="352.7" stroke="#d9dadd" stroke-width="1.6"/>
<line x1="1440.0" y1="320.0" x2="1500.0" y2="292.0" stroke="#d9dadd" stroke-width="1.4"/>
<line x1="1450.0" y1="325.0" x2="1510.0" y2="297.0" stroke="#d9dadd" stroke-width="1.4"/>
<line x1="1460.0" y1="330.0" x2="1520.0" y2="302.0" stroke="#d9dadd" stroke-width="1.4"/>
<line x1="1470.0" y1="335.0" x2="1530.0" y2="307.0" stroke="#d9dadd" stroke-width="1.4"/>
<line x1="1480.0" y1="340.0" x2="1540.0" y2="312.0" stroke="#d9dadd" stroke-width="1.4"/>
<line x1="1490.0" y1="345.0" x2="1550.0" y2="317.0" stroke="#d9dadd" stroke-width="1.4"/>
<line x1="1500.0" y1="350.0" x2="1560.0" y2="322.0" stroke="#d9dadd" stroke-width="1.4"/>
<line x1="1500.0" y1="199.0" x2="1510.0" y2="237.0" stroke="#d9dadd" stroke-width="1.2"/>
<line x1="1509.0" y1="199.0" x2="1519.0" y2="237.0" stroke="#d9dadd" stroke-width="1.2"/>
<line x1="1518.0" y1="199.0" x2="1528.0" y2="237.0" stroke="#d9dadd" stroke-width="1.2"/>
<line x1="1527.0" y1="199.0" x2="1537.0" y2="237.0" stroke="#d9dadd" stroke-width="1.2"/>
<line x1="1536.0" y1="199.0" x2="1546.0" y2="237.0" stroke="#d9dadd" stroke-width="1.2"/>
<line x1="1545.0" y1="199.0" x2="1555.0" y2="237.0" stroke="#d9dadd" stroke-width="1.2"/>
<line x1="1554.0" y1="199.0" x2="1564.0" y2="237.0" stroke="#d9dadd" stroke-width="1.2"/>
<line x1="1563.0" y1="199.0" x2="1573.0" y2="237.0" stroke="#d9dadd" stroke-width="1.2"/>
<line x1="1572.0" y1="199.0" x2="1582.0" y2="237.0" stroke="#d9dadd" stroke-width="1.2"/>
<line x1="1520.0" y1="335.0" x2="1498.0" y2="379.0" stroke="#d9dadd" stroke-width="1.3"/>
<line x1="1526.0" y1="338.0" x2="1504.0" y2="382.0" stroke="#d9dadd" stroke-width="1.3"/>
<line x1="1532.0" y1="341.0" x2="1510.0" y2="385.0" stroke="#d9dadd" stroke-width="1.3"/>
<line x1="1538.0" y1="344.0" x2="1516.0" y2="388.0" stroke="#d9dadd" stroke-width="1.3"/>
<line x1="1544.0" y1="347.0" x2="1522.0" y2="391.0" stroke="#d9dadd" stroke-width="1.3"/>
<line x1="1550.0" y1="350.0" x2="1528.0" y2="394.0" stroke="#d9dadd" stroke-width="1.3"/>
<line x1="1556.0" y1="353.0" x2="1534.0" y2="397.0" stroke="#d9dadd" stroke-width="1.3"/>
<line x1="1562.0" y1="356.0" x2="1540.0" y2="400.0" stroke="#d9dadd" stroke-width="1.3"/>
<line x1="1568.0" y1="359.0" x2="1546.0" y2="403.0" stroke="#d9dadd" stroke-width="1.3"/>
<line x1="1574.0" y1="362.0" x2="1552.0" y2="406.0" stroke="#d9dadd" stroke-width="1.3"/>
<line x1="1580.0" y1="365.0" x2="1558.0" y2="409.0" stroke="#d9dadd" stroke-width="1.3"/>
<line x1="1586.0" y1="368.0" x2="1564.0" y2="412.0" stroke="#d9dadd" stroke-width="1.3"/>
<line x1="1540.0" y1="395.0" x2="1580.0" y2="373.0" stroke="#d9dadd" stroke-width="1.2"/>
<line x1="1545.0" y1="402.0" x2="1585.0" y2="380.0" stroke="#d9dadd" stroke-width="1.2"/>
<line x1="1550.0" y1="409.0" x2="1590.0" y2="387.0" stroke="#d9dadd" stroke-width="1.2"/>
<line x1="1555.0" y1="416.0" x2="1595.0" y2="394.0" stroke="#d9dadd" stroke-width="1.2"/>
<line x1="1560.0" y1="423.0" x2="1600.0" y2="401.0" stroke="#d9dadd" stroke-width="1.2"/>
<line x1="1565.0" y1="430.0" x2="1605.0" y2="408.0" stroke="#d9dadd" stroke-width="1.2"/>
<line x1="1570.0" y1="437.0" x2="1610.0" y2="415.0" stroke="#d9dadd" stroke-width="1.2"/>
<line x1="1575.0" y1="444.0" x2="1615.0" y2="422.0" stroke="#d9dadd" stroke-width="1.2"/>
<line x1="1580.0" y1="451.0" x2="1620.0" y2="429.0" stroke="#d9dadd" stroke-width="1.2"/>
<line x1="1585.0" y1="458.0" x2="1625.0" y2="436.0" stroke="#d9dadd" stroke-width="1.2"/>
<line x1="1425.0" y1="376.0" x2="1500.0" y2="352.0" stroke="#d9dadd" stroke-width="1.6"/>
<line x1="1432.0" y1="392.0" x2="1492.0" y2="372.0" stroke="#d9dadd" stroke-width="1.6"/>
<line x1="1440.0" y1="404.0" x2="1470.0" y2="395.0" stroke="#d9dadd" stroke-width="1.6"/>
<line x1="1452.0" y1="350.0" x2="1470.0" y2="395.0" stroke="#d9dadd" stroke-width="1.6"/>
<line x1="1490.0" y1="345.0" x2="1508.0" y2="410.0" stroke="#d9dadd" stroke-width="1.6"/>
<line x1="1500.0" y1="352.0" x2="1520.0" y2="395.0" stroke="#d9dadd" stroke-width="1.6"/>
<line x1="1520.0" y1="395.0" x2="1500.0" y2="405.0" stroke="#d9dadd" stroke-width="1.6"/>
<line x1="1420.0" y1="330.0" x2="1480.0" y2="300.0" stroke="#d9dadd" stroke-width="1.6"/>
<line x1="1410.0" y1="345.0" x2="1500.0" y2="305.0" stroke="#d9dadd" stroke-width="1.6"/>
<path d="M1508.0 199.0C1508.7 203.3 1513.3 215.7 1512.0 225.0C1510.7 234.3 1503.3 244.2 1500.0 255.0C1496.7 265.8 1492.0 277.5 1492.0 290.0C1492.0 302.5 1496.7 319.7 1500.0 330.0C1503.3 340.3 1507.0 345.0 1512.0 352.0C1517.0 359.0 1524.0 367.0 1530.0 372.0C1536.0 377.0 1542.2 381.0 1548.0 382.0C1553.8 383.0 1560.2 381.7 1565.0 378.0C1569.8 374.3 1575.0 363.0 1577.0 360.0" fill="none" stroke="#9a9a9a" stroke-width=".8"/>
<path d="M1577.0 290.0C1575.2 293.3 1568.5 302.5 1566.0 310.0C1563.5 317.5 1561.3 327.5 1562.0 335.0C1562.7 342.5 1567.5 350.5 1570.0 355.0C1572.5 359.5 1575.8 360.8 1577.0 362.0" fill="none" stroke="#9a9a9a" stroke-width=".8"/>
<line x1="1518" y1="222" x2="1577" y2="208" stroke="#8a8a8a" stroke-width=".8"/>
<line x1="1524" y1="217" x2="1577" y2="199" stroke="#8a8a8a" stroke-width=".8"/>
<line x1="1530" y1="212" x2="1577" y2="190" stroke="#8a8a8a" stroke-width=".8"/>
<line x1="1536" y1="207" x2="1577" y2="181" stroke="#8a8a8a" stroke-width=".8"/>
<line x1="1542" y1="202" x2="1577" y2="172" stroke="#8a8a8a" stroke-width=".8"/>
<path d="M1577.0 395.0C1574.2 399.2 1564.3 410.8 1560.0 420.0C1555.7 429.2 1552.3 440.0 1551.0 450.0C1549.7 460.0 1550.5 471.7 1552.0 480.0C1553.5 488.3 1555.8 495.8 1560.0 500.0C1564.2 504.2 1574.2 504.2 1577.0 505.0" fill="none" stroke="#9a9a9a" stroke-width=".8"/>
<line x1="1552" y1="470" x2="1577" y2="415" stroke="#8a8a8a" stroke-width=".7"/>
<line x1="1555" y1="468" x2="1577" y2="409" stroke="#8a8a8a" stroke-width=".7"/>
<line x1="1558" y1="466" x2="1577" y2="403" stroke="#8a8a8a" stroke-width=".7"/>
<line x1="1561" y1="464" x2="1577" y2="397" stroke="#8a8a8a" stroke-width=".7"/>
<line x1="1553.0" y1="455.0" x2="1553.0" y2="480.0" stroke="#d9dadd" stroke-width="1.4"/>
<line x1="1559.0" y1="455.0" x2="1559.0" y2="480.0" stroke="#d9dadd" stroke-width="1.4"/>
<line x1="1565.0" y1="455.0" x2="1565.0" y2="480.0" stroke="#d9dadd" stroke-width="1.4"/>
<line x1="1571.0" y1="455.0" x2="1571.0" y2="480.0" stroke="#d9dadd" stroke-width="1.4"/>
<line x1="1577.0" y1="455.0" x2="1577.0" y2="480.0" stroke="#d9dadd" stroke-width="1.4"/>
<line x1="1550.0" y1="458.0" x2="1577.0" y2="458.0" stroke="#d9dadd" stroke-width="1.4"/>
<line x1="1550.0" y1="466.0" x2="1577.0" y2="466.0" stroke="#d9dadd" stroke-width="1.4"/>
<line x1="1550.0" y1="474.0" x2="1577.0" y2="474.0" stroke="#d9dadd" stroke-width="1.4"/>
<path d="M1340.0 400.0C1340.2 408.3 1341.0 437.5 1341.0 450.0C1341.0 462.5 1338.7 468.0 1340.0 475.0C1341.3 482.0 1347.2 484.5 1349.0 492.0C1350.8 499.5 1350.2 511.2 1351.0 520.0C1351.8 528.8 1352.5 538.3 1354.0 545.0C1355.5 551.7 1359.0 557.5 1360.0 560.0" fill="none" stroke="#8a8a8a" stroke-width=".8"/>
<line x1="1340.0" y1="476.0" x2="1366.0" y2="500.0" stroke="#dcdcdc" stroke-width="2"/>
<line x1="1366.0" y1="500.0" x2="1400.0" y2="545.0" stroke="#dcdcdc" stroke-width="2"/>
<line x1="1345.0" y1="520.0" x2="1372.0" y2="594.0" stroke="#d8d8d8" stroke-width="2.4"/>
<line x1="1262.0" y1="577.0" x2="1400.0" y2="548.0" stroke="#dcdcdc" stroke-width="2"/>
<line x1="1392.0" y1="536.0" x2="1400.0" y2="560.0" stroke="#d9dadd" stroke-width="1.5"/>
<line x1="1385.0" y1="545.0" x2="1397.0" y2="594.0" stroke="#d9dadd" stroke-width="1.5"/>
<line x1="1345.0" y1="210.0" x2="1390.0" y2="200.0" stroke="#d9dadd" stroke-width="1.5"/>
<line x1="1345.0" y1="222.0" x2="1396.0" y2="215.0" stroke="#d9dadd" stroke-width="1.5"/>
<line x1="1350.0" y1="215.0" x2="1362.0" y2="232.0" stroke="#d9dadd" stroke-width="1.5"/>
<line x1="1370.0" y1="205.0" x2="1382.0" y2="230.0" stroke="#d9dadd" stroke-width="1.5"/>
<line x1="1340.0" y1="255.0" x2="1360.0" y2="262.0" stroke="#d9dadd" stroke-width="1.5"/>
<line x1="1360.0" y1="262.0" x2="1372.0" y2="290.0" stroke="#d9dadd" stroke-width="1.5"/>
<line x1="1345.0" y1="290.0" x2="1360.0" y2="312.0" stroke="#d9dadd" stroke-width="1.5"/>
<line x1="1340.0" y1="312.0" x2="1358.0" y2="318.0" stroke="#d9dadd" stroke-width="1.5"/>
<line x1="1458.0" y1="420.0" x2="1462.0" y2="500.0" stroke="#d9dadd" stroke-width="1.5"/>
<line x1="1462.0" y1="520.0" x2="1478.0" y2="594.0" stroke="#d9dadd" stroke-width="1.5"/>
<line x1="1470.0" y1="520.0" x2="1488.0" y2="594.0" stroke="#d9dadd" stroke-width="1.2"/>
<path d="M794.3 199.0C793.1 200.8 787.5 205.7 786.9 209.5C786.4 213.4 788.3 218.3 791.2 222.2C794.0 226.0 801.5 228.5 803.8 232.7C806.1 236.9 802.0 242.2 804.9 247.5C807.7 252.7 815.9 259.4 820.7 264.3C825.4 269.2 831.7 273.8 833.3 277.0C834.9 280.1 834.0 281.5 830.1 283.3C826.3 285.1 814.3 285.4 810.1 287.5C805.9 289.6 804.2 292.4 804.9 295.9C805.6 299.5 811.4 304.7 814.3 308.6C817.3 312.5 822.8 315.6 822.8 319.1C822.8 322.6 818.6 326.2 814.3 329.7C810.1 333.2 801.3 336.0 797.5 340.2C793.6 344.4 792.6 349.3 791.2 355.0C789.8 360.6 791.9 368.7 789.1 373.9C786.2 379.2 780.3 382.2 774.3 386.6C768.3 390.9 758.9 396.1 753.2 400.1C747.5 404.0 745.1 406.3 740.0 410.0C734.9 413.7 728.4 419.1 722.9 422.0C717.4 424.9 712.4 427.5 707.2 427.5C702.0 427.5 696.0 423.3 691.5 422.0C687.0 420.7 683.7 419.2 680.4 419.7C677.1 420.2 673.4 423.0 671.8 425.2C670.2 427.4 670.1 430.1 671.0 433.0C671.9 435.9 673.9 439.4 677.3 442.5C680.7 445.6 688.1 448.8 691.5 451.9C694.9 455.0 697.3 457.6 697.8 461.3C698.3 465.0 694.1 469.4 694.6 473.9C695.1 478.4 698.0 484.2 700.9 488.1C703.8 492.0 708.2 495.3 711.9 497.5C715.6 499.7 719.8 501.8 722.9 501.5C726.0 501.2 727.4 498.2 730.8 496.0C734.2 493.8 739.2 490.5 743.4 488.1C747.6 485.7 753.0 482.2 756.0 481.8C759.0 481.4 761.2 484.1 761.5 485.7C761.8 487.3 760.8 489.2 757.5 491.2C754.2 493.2 745.7 495.1 741.8 497.5C737.9 499.9 734.9 502.9 733.9 505.4C732.9 507.9 734.2 511.4 735.5 512.5C736.8 513.5 738.6 513.4 741.8 511.7C744.9 510.0 751.0 504.3 754.4 502.2C757.8 500.1 760.4 498.7 762.2 499.1C764.0 499.5 766.2 502.2 765.4 504.6C764.6 507.0 762.0 510.0 757.5 513.3C753.0 516.6 745.0 521.2 738.7 524.3C732.4 527.4 726.6 530.3 719.8 532.1C713.0 533.9 704.4 536.1 697.8 535.3C691.2 534.5 685.4 530.9 680.4 527.4C675.4 523.9 670.4 517.4 667.5 514.5C664.6 511.6 663.8 510.8 663.0 510.0" fill="none" stroke="#d8cc9c" stroke-width="5.2" stroke-linecap="round" stroke-linejoin="round"/>
<path d="M803.8 232.7C807.3 231.3 818.6 226.2 824.9 224.3C831.2 222.4 836.5 221.1 841.7 221.1C847.0 221.1 852.3 221.7 856.5 224.3C860.7 226.9 864.6 230.6 867.0 236.9C869.5 243.3 870.2 254.5 871.2 262.2C872.3 270.0 871.9 277.3 873.4 283.3C874.8 289.3 878.4 293.1 879.7 298.1C880.9 303.0 882.1 306.8 880.7 312.8C879.3 318.8 872.5 327.6 871.2 333.9C870.0 340.2 871.9 345.1 873.4 350.7C874.8 356.4 878.4 361.3 879.7 367.6C880.9 373.9 880.2 383.3 880.7 388.7C881.3 394.1 882.1 398.2 882.8 400.1C883.5 401.9 882.8 398.0 885.0 400.0C887.2 402.0 892.5 409.0 896.0 412.0C899.5 415.0 904.3 417.0 906.0 418.0" fill="none" stroke="#d8cc9c" stroke-width="5.2" stroke-linecap="round" stroke-linejoin="round"/>
<path d="M990.0 268.0C998.3 267.8 1025.8 267.8 1040.0 267.0C1054.2 266.2 1065.8 264.7 1075.0 263.0C1084.2 261.3 1084.2 258.2 1095.0 257.0C1105.8 255.8 1126.2 256.2 1140.0 256.0C1153.8 255.8 1171.7 256.0 1178.0 256.0" fill="none" stroke="#d8cc9c" stroke-width="5.0" stroke-linecap="round" stroke-linejoin="round"/>
<path d="M981.0 337.0C981.7 338.0 984.0 340.5 985.0 343.0C986.0 345.5 986.4 342.5 986.7 352.0C987.0 361.5 986.7 388.3 986.7 400.0C986.7 411.7 986.7 418.3 986.7 422.0" fill="none" stroke="#d8cc9c" stroke-width="5.0" stroke-linecap="round" stroke-linejoin="round"/>
<path d="M1187.0 422.0 L1187.0 594.0" fill="none" stroke="#d8cc9c" stroke-width="5.2" stroke-linecap="round" stroke-linejoin="round"/>
<path d="M1238.0 594.0C1238.0 545.0 1238.0 355.3 1238.0 300.0C1238.0 244.7 1237.7 271.2 1238.0 262.0C1238.3 252.8 1238.3 250.0 1240.0 245.0C1241.7 240.0 1246.0 235.8 1248.0 232.0C1250.0 228.2 1251.7 225.3 1252.0 222.0C1252.3 218.7 1252.0 215.0 1250.0 212.0C1248.0 209.0 1244.2 206.2 1240.0 204.0C1235.8 201.8 1227.5 199.8 1225.0 199.0" fill="none" stroke="#d8cc9c" stroke-width="5.2" stroke-linecap="round" stroke-linejoin="round"/>
<path d="M1187.0 422.0 L1238.0 422.0 L1330.0 422.0 L1333.0 420.0" fill="none" stroke="#d8cc9c" stroke-width="5.2" stroke-linecap="round" stroke-linejoin="round"/>
<path d="M1300.0 199.0C1302.0 201.2 1307.8 206.8 1312.0 212.0C1316.2 217.2 1321.5 223.7 1325.0 230.0C1328.5 236.3 1331.3 241.7 1333.0 250.0C1334.7 258.3 1334.7 255.0 1335.0 280.0C1335.3 305.0 1335.2 363.3 1335.0 400.0C1334.8 436.7 1334.7 481.7 1334.0 500.0C1333.3 518.3 1333.3 506.7 1331.0 510.0C1328.7 513.3 1325.2 515.7 1320.0 520.0C1314.8 524.3 1306.2 530.3 1300.0 536.0C1293.8 541.7 1287.7 548.3 1283.0 554.0C1278.3 559.7 1275.2 565.7 1272.0 570.0C1268.8 574.3 1265.7 576.0 1264.0 580.0C1262.3 584.0 1262.3 591.7 1262.0 594.0" fill="none" stroke="#d8cc9c" stroke-width="5.2" stroke-linecap="round" stroke-linejoin="round"/>
<path d="M968.0 547.0 L1100.0 547.0 L1272.0 547.0 L1285.0 550.0" fill="none" stroke="#d8cc9c" stroke-width="5.2" stroke-linecap="round" stroke-linejoin="round"/>
<path d="M275.0 375.3C275.7 375.0 273.3 375.7 279.0 373.9C284.6 372.0 298.3 366.8 309.0 364.0C319.6 361.1 333.0 357.6 342.9 356.9C352.8 356.2 358.9 358.3 368.4 359.7C377.8 361.1 391.5 362.8 399.5 365.4C407.5 368.0 410.8 369.9 416.5 375.3C422.1 380.7 427.8 390.4 433.5 397.9C439.1 405.5 443.8 413.5 450.4 420.5C457.0 427.6 464.6 435.4 473.1 440.4C481.6 445.3 491.9 447.9 501.4 450.3C510.8 452.6 522.1 452.9 529.7 454.5C537.2 456.2 540.5 456.4 546.6 460.2C552.8 463.9 559.9 472.9 566.5 477.1C573.1 481.4 579.2 484.0 586.3 485.6C593.3 487.3 599.5 484.7 608.9 487.0C618.3 489.4 633.4 495.3 642.9 499.8C652.3 504.3 659.8 508.7 665.5 513.9C671.2 519.1 672.6 526.4 676.8 530.9C681.1 535.4 684.6 538.9 691.0 540.8C697.3 542.7 713.5 542.1 715.0 542.2C716.5 542.4 697.9 542.5 700.0 541.7C702.1 540.9 718.6 538.0 727.8 537.5C737.1 537.0 746.4 538.0 755.7 538.9C764.9 539.8 773.3 541.5 783.5 543.1C793.7 544.7 804.8 545.4 816.9 548.6C829.0 551.9 842.9 557.5 855.9 562.6C868.8 567.7 883.7 574.6 894.8 579.3C906.0 583.9 916.2 587.6 922.7 590.4C929.1 593.2 931.9 595.0 933.8 596.0" fill="none" stroke="#e4b058" stroke-width="7.4" stroke-linecap="round" stroke-linejoin="round"/>
<path d="M991.7 195.0C991.5 195.7 991.4 194.5 990.8 199.2C990.2 203.8 988.8 211.9 988.1 222.8C987.4 233.7 987.1 250.7 986.7 264.6C986.2 278.5 985.7 296.1 985.3 306.3C984.8 316.5 985.0 318.4 983.9 325.8C982.7 333.2 979.9 344.8 978.3 350.9C976.7 356.9 976.9 357.8 974.1 362.0C971.4 366.2 967.0 372.7 961.6 375.9C956.3 379.2 948.6 379.2 942.1 381.5C935.6 383.8 927.5 386.8 922.7 389.8C917.8 392.8 915.2 396.8 912.9 399.6C910.6 402.4 910.0 404.1 908.7 406.7C907.5 409.3 906.3 412.3 905.4 415.0C904.5 417.8 903.1 418.3 903.2 423.4C903.3 428.5 903.2 436.9 906.0 445.7C908.7 454.5 915.2 467.5 919.9 476.3C924.5 485.1 928.7 492.1 933.8 498.5C938.9 505.0 945.4 509.7 950.5 515.2C955.6 520.8 961.4 526.4 964.4 531.9C967.4 537.5 968.1 541.7 968.6 548.6C969.0 555.6 968.8 565.8 967.2 573.7C965.6 581.6 960.2 592.2 958.8 596.0" fill="none" stroke="#e4b058" stroke-width="7.2" stroke-linecap="round" stroke-linejoin="round"/>
<path d="M906.0 420.0 L950.0 421.0 L1000.0 421.5 L1187.0 422.0" fill="none" stroke="#e4b058" stroke-width="7.2" stroke-linecap="round" stroke-linejoin="round"/>
<path d="M1172.0 199.0C1172.2 204.2 1172.2 221.5 1173.0 230.0C1173.8 238.5 1175.2 244.2 1177.0 250.0C1178.8 255.8 1182.3 260.7 1184.0 265.0C1185.7 269.3 1186.5 270.2 1187.0 276.0C1187.5 281.8 1187.0 275.7 1187.0 300.0C1187.0 324.3 1187.0 401.7 1187.0 422.0" fill="none" stroke="#e4b058" stroke-width="7.2" stroke-linecap="round" stroke-linejoin="round"/>
<path d="M1187.0 268.0C1188.2 266.7 1191.8 262.2 1194.0 260.0C1196.2 257.8 1199.0 255.8 1200.0 255.0" fill="none" stroke="#e4b058" stroke-width="5.5" stroke-linecap="round" stroke-linejoin="round"/>
<path d="M1203.0 199.0C1203.2 203.3 1203.5 217.3 1204.0 225.0C1204.5 232.7 1206.2 240.0 1206.0 245.0C1205.8 250.0 1204.5 252.7 1203.0 255.0C1201.5 257.3 1198.0 258.3 1197.0 259.0" fill="none" stroke="#8e5f9c" stroke-width="8.0" stroke-linecap="round" stroke-linejoin="round"/>
<path d="M1211.0 199.0C1211.3 203.3 1210.7 218.5 1213.0 225.0C1215.3 231.5 1217.2 234.8 1225.0 238.0C1232.8 241.2 1247.5 243.0 1260.0 244.0C1272.5 245.0 1293.3 244.0 1300.0 244.0" fill="none" stroke="#8e5f9c" stroke-width="4.2" stroke-linecap="round" stroke-linejoin="round"/>
<path d="M1209.0 235.0C1212.5 236.8 1219.8 244.0 1230.0 246.0C1240.2 248.0 1256.7 247.3 1270.0 247.0C1283.3 246.7 1303.3 244.5 1310.0 244.0" fill="none" stroke="#8e5f9c" stroke-width="4.2" stroke-linecap="round" stroke-linejoin="round"/>
<path d="M1290.0 245.0C1293.3 244.8 1303.3 246.6 1310.0 244.0C1316.7 241.4 1324.3 232.7 1330.0 229.1C1335.7 225.6 1339.5 224.2 1344.3 222.8C1349.0 221.3 1352.2 220.4 1358.6 220.4C1364.9 220.4 1373.9 221.3 1382.4 222.8C1390.8 224.2 1399.6 227.1 1409.4 229.1C1419.2 231.1 1432.4 233.2 1441.1 234.7C1449.8 236.1 1453.8 236.4 1461.7 237.9C1469.7 239.3 1481.6 242.1 1488.7 243.4C1495.9 244.7 1498.8 245.9 1504.6 245.8C1510.4 245.7 1517.0 244.9 1523.7 242.6C1530.3 240.4 1537.4 235.9 1544.3 232.3C1551.2 228.7 1559.1 224.1 1564.9 221.2C1570.7 218.3 1576.8 215.9 1579.2 214.8" fill="none" stroke="#8e5f9c" stroke-width="8.0" stroke-linecap="round" stroke-linejoin="round"/>
<path d="M794.3 199.0C793.1 200.8 787.5 205.7 786.9 209.5C786.4 213.4 788.3 218.3 791.2 222.2C794.0 226.0 801.5 228.5 803.8 232.7C806.1 236.9 802.0 242.2 804.9 247.5C807.7 252.7 815.9 259.4 820.7 264.3C825.4 269.2 831.7 273.8 833.3 277.0C834.9 280.1 834.0 281.5 830.1 283.3C826.3 285.1 814.3 285.4 810.1 287.5C805.9 289.6 804.2 292.4 804.9 295.9C805.6 299.5 811.4 304.7 814.3 308.6C817.3 312.5 822.8 315.6 822.8 319.1C822.8 322.6 818.6 326.2 814.3 329.7C810.1 333.2 801.3 336.0 797.5 340.2C793.6 344.4 792.6 349.3 791.2 355.0C789.8 360.6 791.9 368.7 789.1 373.9C786.2 379.2 780.3 382.2 774.3 386.6C768.3 390.9 758.9 396.1 753.2 400.1C747.5 404.0 745.1 406.3 740.0 410.0C734.9 413.7 728.4 419.1 722.9 422.0C717.4 424.9 712.4 427.5 707.2 427.5C702.0 427.5 696.0 423.3 691.5 422.0C687.0 420.7 683.7 419.2 680.4 419.7C677.1 420.2 673.4 423.0 671.8 425.2C670.2 427.4 670.1 430.1 671.0 433.0C671.9 435.9 673.9 439.4 677.3 442.5C680.7 445.6 688.1 448.8 691.5 451.9C694.9 455.0 697.3 457.6 697.8 461.3C698.3 465.0 694.1 469.4 694.6 473.9C695.1 478.4 698.0 484.2 700.9 488.1C703.8 492.0 708.2 495.3 711.9 497.5C715.6 499.7 719.8 501.8 722.9 501.5C726.0 501.2 727.4 498.2 730.8 496.0C734.2 493.8 739.2 490.5 743.4 488.1C747.6 485.7 753.0 482.2 756.0 481.8C759.0 481.4 761.2 484.1 761.5 485.7C761.8 487.3 760.8 489.2 757.5 491.2C754.2 493.2 745.7 495.1 741.8 497.5C737.9 499.9 734.9 502.9 733.9 505.4C732.9 507.9 734.2 511.4 735.5 512.5C736.8 513.5 738.6 513.4 741.8 511.7C744.9 510.0 751.0 504.3 754.4 502.2C757.8 500.1 760.4 498.7 762.2 499.1C764.0 499.5 766.2 502.2 765.4 504.6C764.6 507.0 762.0 510.0 757.5 513.3C753.0 516.6 745.0 521.2 738.7 524.3C732.4 527.4 726.6 530.3 719.8 532.1C713.0 533.9 704.4 536.1 697.8 535.3C691.2 534.5 685.4 530.9 680.4 527.4C675.4 523.9 670.4 517.4 667.5 514.5C664.6 511.6 663.8 510.8 663.0 510.0" fill="none" stroke="#f9f2d2" stroke-width="3.2" stroke-linecap="round" stroke-linejoin="round"/>
<path d="M803.8 232.7C807.3 231.3 818.6 226.2 824.9 224.3C831.2 222.4 836.5 221.1 841.7 221.1C847.0 221.1 852.3 221.7 856.5 224.3C860.7 226.9 864.6 230.6 867.0 236.9C869.5 243.3 870.2 254.5 871.2 262.2C872.3 270.0 871.9 277.3 873.4 283.3C874.8 289.3 878.4 293.1 879.7 298.1C880.9 303.0 882.1 306.8 880.7 312.8C879.3 318.8 872.5 327.6 871.2 333.9C870.0 340.2 871.9 345.1 873.4 350.7C874.8 356.4 878.4 361.3 879.7 367.6C880.9 373.9 880.2 383.3 880.7 388.7C881.3 394.1 882.1 398.2 882.8 400.1C883.5 401.9 882.8 398.0 885.0 400.0C887.2 402.0 892.5 409.0 896.0 412.0C899.5 415.0 904.3 417.0 906.0 418.0" fill="none" stroke="#f9f2d2" stroke-width="3.2" stroke-linecap="round" stroke-linejoin="round"/>
<path d="M990.0 268.0C998.3 267.8 1025.8 267.8 1040.0 267.0C1054.2 266.2 1065.8 264.7 1075.0 263.0C1084.2 261.3 1084.2 258.2 1095.0 257.0C1105.8 255.8 1126.2 256.2 1140.0 256.0C1153.8 255.8 1171.7 256.0 1178.0 256.0" fill="none" stroke="#f9f2d2" stroke-width="3" stroke-linecap="round" stroke-linejoin="round"/>
<path d="M981.0 337.0C981.7 338.0 984.0 340.5 985.0 343.0C986.0 345.5 986.4 342.5 986.7 352.0C987.0 361.5 986.7 388.3 986.7 400.0C986.7 411.7 986.7 418.3 986.7 422.0" fill="none" stroke="#f9f2d2" stroke-width="3" stroke-linecap="round" stroke-linejoin="round"/>
<path d="M1187.0 422.0 L1187.0 594.0" fill="none" stroke="#f9f2d2" stroke-width="3.2" stroke-linecap="round" stroke-linejoin="round"/>
<path d="M1238.0 594.0C1238.0 545.0 1238.0 355.3 1238.0 300.0C1238.0 244.7 1237.7 271.2 1238.0 262.0C1238.3 252.8 1238.3 250.0 1240.0 245.0C1241.7 240.0 1246.0 235.8 1248.0 232.0C1250.0 228.2 1251.7 225.3 1252.0 222.0C1252.3 218.7 1252.0 215.0 1250.0 212.0C1248.0 209.0 1244.2 206.2 1240.0 204.0C1235.8 201.8 1227.5 199.8 1225.0 199.0" fill="none" stroke="#f9f2d2" stroke-width="3.2" stroke-linecap="round" stroke-linejoin="round"/>
<path d="M1187.0 422.0 L1238.0 422.0 L1330.0 422.0 L1333.0 420.0" fill="none" stroke="#f9f2d2" stroke-width="3.2" stroke-linecap="round" stroke-linejoin="round"/>
<path d="M1300.0 199.0C1302.0 201.2 1307.8 206.8 1312.0 212.0C1316.2 217.2 1321.5 223.7 1325.0 230.0C1328.5 236.3 1331.3 241.7 1333.0 250.0C1334.7 258.3 1334.7 255.0 1335.0 280.0C1335.3 305.0 1335.2 363.3 1335.0 400.0C1334.8 436.7 1334.7 481.7 1334.0 500.0C1333.3 518.3 1333.3 506.7 1331.0 510.0C1328.7 513.3 1325.2 515.7 1320.0 520.0C1314.8 524.3 1306.2 530.3 1300.0 536.0C1293.8 541.7 1287.7 548.3 1283.0 554.0C1278.3 559.7 1275.2 565.7 1272.0 570.0C1268.8 574.3 1265.7 576.0 1264.0 580.0C1262.3 584.0 1262.3 591.7 1262.0 594.0" fill="none" stroke="#f9f2d2" stroke-width="3.2" stroke-linecap="round" stroke-linejoin="round"/>
<path d="M968.0 547.0 L1100.0 547.0 L1272.0 547.0 L1285.0 550.0" fill="none" stroke="#f9f2d2" stroke-width="3.2" stroke-linecap="round" stroke-linejoin="round"/>
<path d="M275.0 375.3C275.7 375.0 273.3 375.7 279.0 373.9C284.6 372.0 298.3 366.8 309.0 364.0C319.6 361.1 333.0 357.6 342.9 356.9C352.8 356.2 358.9 358.3 368.4 359.7C377.8 361.1 391.5 362.8 399.5 365.4C407.5 368.0 410.8 369.9 416.5 375.3C422.1 380.7 427.8 390.4 433.5 397.9C439.1 405.5 443.8 413.5 450.4 420.5C457.0 427.6 464.6 435.4 473.1 440.4C481.6 445.3 491.9 447.9 501.4 450.3C510.8 452.6 522.1 452.9 529.7 454.5C537.2 456.2 540.5 456.4 546.6 460.2C552.8 463.9 559.9 472.9 566.5 477.1C573.1 481.4 579.2 484.0 586.3 485.6C593.3 487.3 599.5 484.7 608.9 487.0C618.3 489.4 633.4 495.3 642.9 499.8C652.3 504.3 659.8 508.7 665.5 513.9C671.2 519.1 672.6 526.4 676.8 530.9C681.1 535.4 684.6 538.9 691.0 540.8C697.3 542.7 713.5 542.1 715.0 542.2C716.5 542.4 697.9 542.5 700.0 541.7C702.1 540.9 718.6 538.0 727.8 537.5C737.1 537.0 746.4 538.0 755.7 538.9C764.9 539.8 773.3 541.5 783.5 543.1C793.7 544.7 804.8 545.4 816.9 548.6C829.0 551.9 842.9 557.5 855.9 562.6C868.8 567.7 883.7 574.6 894.8 579.3C906.0 583.9 916.2 587.6 922.7 590.4C929.1 593.2 931.9 595.0 933.8 596.0" fill="none" stroke="#fdf1bb" stroke-width="4.4" stroke-linecap="round" stroke-linejoin="round"/>
<path d="M991.7 195.0C991.5 195.7 991.4 194.5 990.8 199.2C990.2 203.8 988.8 211.9 988.1 222.8C987.4 233.7 987.1 250.7 986.7 264.6C986.2 278.5 985.7 296.1 985.3 306.3C984.8 316.5 985.0 318.4 983.9 325.8C982.7 333.2 979.9 344.8 978.3 350.9C976.7 356.9 976.9 357.8 974.1 362.0C971.4 366.2 967.0 372.7 961.6 375.9C956.3 379.2 948.6 379.2 942.1 381.5C935.6 383.8 927.5 386.8 922.7 389.8C917.8 392.8 915.2 396.8 912.9 399.6C910.6 402.4 910.0 404.1 908.7 406.7C907.5 409.3 906.3 412.3 905.4 415.0C904.5 417.8 903.1 418.3 903.2 423.4C903.3 428.5 903.2 436.9 906.0 445.7C908.7 454.5 915.2 467.5 919.9 476.3C924.5 485.1 928.7 492.1 933.8 498.5C938.9 505.0 945.4 509.7 950.5 515.2C955.6 520.8 961.4 526.4 964.4 531.9C967.4 537.5 968.1 541.7 968.6 548.6C969.0 555.6 968.8 565.8 967.2 573.7C965.6 581.6 960.2 592.2 958.8 596.0" fill="none" stroke="#fdf1bb" stroke-width="4.2" stroke-linecap="round" stroke-linejoin="round"/>
<path d="M906.0 420.0 L950.0 421.0 L1000.0 421.5 L1187.0 422.0" fill="none" stroke="#fdf1bb" stroke-width="4.2" stroke-linecap="round" stroke-linejoin="round"/>
<path d="M1172.0 199.0C1172.2 204.2 1172.2 221.5 1173.0 230.0C1173.8 238.5 1175.2 244.2 1177.0 250.0C1178.8 255.8 1182.3 260.7 1184.0 265.0C1185.7 269.3 1186.5 270.2 1187.0 276.0C1187.5 281.8 1187.0 275.7 1187.0 300.0C1187.0 324.3 1187.0 401.7 1187.0 422.0" fill="none" stroke="#fdf1bb" stroke-width="4.2" stroke-linecap="round" stroke-linejoin="round"/>
<path d="M1187.0 268.0C1188.2 266.7 1191.8 262.2 1194.0 260.0C1196.2 257.8 1199.0 255.8 1200.0 255.0" fill="none" stroke="#fdf1bb" stroke-width="3.5" stroke-linecap="round" stroke-linejoin="round"/>
<path d="M1203.0 199.0C1203.2 203.3 1203.5 217.3 1204.0 225.0C1204.5 232.7 1206.2 240.0 1206.0 245.0C1205.8 250.0 1204.5 252.7 1203.0 255.0C1201.5 257.3 1198.0 258.3 1197.0 259.0" fill="none" stroke="#b78fd6" stroke-width="6" stroke-linecap="round" stroke-linejoin="round"/>
<path d="M1211.0 199.0C1211.3 203.3 1210.7 218.5 1213.0 225.0C1215.3 231.5 1217.2 234.8 1225.0 238.0C1232.8 241.2 1247.5 243.0 1260.0 244.0C1272.5 245.0 1293.3 244.0 1300.0 244.0" fill="none" stroke="#c9abdf" stroke-width="2.6" stroke-linecap="round" stroke-linejoin="round"/>
<path d="M1209.0 235.0C1212.5 236.8 1219.8 244.0 1230.0 246.0C1240.2 248.0 1256.7 247.3 1270.0 247.0C1283.3 246.7 1303.3 244.5 1310.0 244.0" fill="none" stroke="#c9abdf" stroke-width="2.6" stroke-linecap="round" stroke-linejoin="round"/>
<path d="M1290.0 245.0C1293.3 244.8 1303.3 246.6 1310.0 244.0C1316.7 241.4 1324.3 232.7 1330.0 229.1C1335.7 225.6 1339.5 224.2 1344.3 222.8C1349.0 221.3 1352.2 220.4 1358.6 220.4C1364.9 220.4 1373.9 221.3 1382.4 222.8C1390.8 224.2 1399.6 227.1 1409.4 229.1C1419.2 231.1 1432.4 233.2 1441.1 234.7C1449.8 236.1 1453.8 236.4 1461.7 237.9C1469.7 239.3 1481.6 242.1 1488.7 243.4C1495.9 244.7 1498.8 245.9 1504.6 245.8C1510.4 245.7 1517.0 244.9 1523.7 242.6C1530.3 240.4 1537.4 235.9 1544.3 232.3C1551.2 228.7 1559.1 224.1 1564.9 221.2C1570.7 218.3 1576.8 215.9 1579.2 214.8" fill="none" stroke="#b78fd6" stroke-width="6" stroke-linecap="round" stroke-linejoin="round"/>
<text x="376.5" y="243.5" font-size="10.8" fill="#3c3c3c" text-anchor="start" transform="rotate(39.3 376.5 243.5)" textLength="42.6" lengthAdjust="spacingAndGlyphs" stroke="#f4f2ec" stroke-width="2.2" stroke-opacity=".85" paint-order="stroke" stroke-linejoin="round">Burma Rd</text>
<text x="548.0" y="296.0" font-size="10.8" fill="#3c3c3c" text-anchor="start" transform="rotate(-56.6 548.0 296.0)" textLength="56.3" lengthAdjust="spacingAndGlyphs" stroke="#f4f2ec" stroke-width="2.2" stroke-opacity=".85" paint-order="stroke" stroke-linejoin="round">Southfield Dr</text>
<text x="673.6" y="254.8" font-size="10.8" fill="#3c3c3c" text-anchor="start" textLength="36.0" lengthAdjust="spacingAndGlyphs" stroke="#f4f2ec" stroke-width="2.2" stroke-opacity=".85" paint-order="stroke" stroke-linejoin="round">Crest Rd</text>
<text x="776.4" y="239.5" font-size="13.4" fill="#6a6a6a" text-anchor="start" textLength="51.0" lengthAdjust="spacingAndGlyphs" stroke="#f4f2ec" stroke-width="2.2" stroke-opacity=".85" paint-order="stroke" stroke-linejoin="round">Miraleste</text>
<text x="861.0" y="233.0" font-size="10.8" fill="#3c3c3c" text-anchor="start" transform="rotate(74.6 861.0 233.0)" textLength="60.2" lengthAdjust="spacingAndGlyphs" stroke="#f4f2ec" stroke-width="2.2" stroke-opacity=".85" paint-order="stroke" stroke-linejoin="round">Miraleste Dr</text>
<text x="995.9" y="247.0" font-size="12.2" fill="#6d8b74" text-anchor="start" textLength="49.0" lengthAdjust="spacingAndGlyphs" stroke="#f4f2ec" stroke-width="2.2" stroke-opacity=".85" paint-order="stroke" stroke-linejoin="round">Peck Park</text>
<text x="987.5" y="270.0" font-size="11" fill="#3c3c3c" text-anchor="start" transform="rotate(-3.3 987.5 270.0)" textLength="95.7" lengthAdjust="spacingAndGlyphs" stroke="#f4f2ec" stroke-width="2.2" stroke-opacity=".85" paint-order="stroke" stroke-linejoin="round">W Summerland Ave</text>
<text x="1113.8" y="300.0" font-size="10.8" fill="#3c3c3c" text-anchor="start" transform="rotate(-90.0 1113.8 300.0)" textLength="53.0" lengthAdjust="spacingAndGlyphs" stroke="#f4f2ec" stroke-width="2.2" stroke-opacity=".85" paint-order="stroke" stroke-linejoin="round">N Bandini St</text>
<text x="1191.2" y="250.0" font-size="10.8" fill="#3c3c3c" text-anchor="start" transform="rotate(-90.0 1191.2 250.0)" textLength="49.0" lengthAdjust="spacingAndGlyphs" stroke="#f4f2ec" stroke-width="2.2" stroke-opacity=".85" paint-order="stroke" stroke-linejoin="round">N Gaffey Pl</text>
<text x="1241.3" y="313.0" font-size="10.8" fill="#3c3c3c" text-anchor="start" transform="rotate(-90.0 1241.3 313.0)" textLength="63.0" lengthAdjust="spacingAndGlyphs" stroke="#f4f2ec" stroke-width="2.2" stroke-opacity=".85" paint-order="stroke" stroke-linejoin="round">N Pacific Ave</text>
<text x="1268.3" y="321.2" font-size="10.8" fill="#3c3c3c" text-anchor="start" textLength="34.2" lengthAdjust="spacingAndGlyphs" stroke="#f4f2ec" stroke-width="2.2" stroke-opacity=".85" paint-order="stroke" stroke-linejoin="round">W 1st St</text>
<text x="953.0" y="303.0" font-size="10.8" fill="#3c3c3c" text-anchor="start" transform="rotate(17.4 953.0 303.0)" textLength="36.7" lengthAdjust="spacingAndGlyphs" stroke="#f4f2ec" stroke-width="2.2" stroke-opacity=".85" paint-order="stroke" stroke-linejoin="round">W 1st St</text>
<text x="1333.0" y="248.0" font-size="10.8" fill="#3c3c3c" text-anchor="start" transform="rotate(90.0 1333.0 248.0)" textLength="69.0" lengthAdjust="spacingAndGlyphs" stroke="#f4f2ec" stroke-width="2.2" stroke-opacity=".85" paint-order="stroke" stroke-linejoin="round">N-Harbor-Blvd</text>
<text x="1337.3" y="393.0" font-size="10.8" fill="#3c3c3c" text-anchor="start" transform="rotate(-90.0 1337.3 393.0)" textLength="66.5" lengthAdjust="spacingAndGlyphs" stroke="#f4f2ec" stroke-width="2.2" stroke-opacity=".85" paint-order="stroke" stroke-linejoin="round">S Harbor Blvd</text>
<text x="1017.0" y="345.3" font-size="10.8" fill="#3c3c3c" text-anchor="start" textLength="38.0" lengthAdjust="spacingAndGlyphs" stroke="#f4f2ec" stroke-width="2.2" stroke-opacity=".85" paint-order="stroke" stroke-linejoin="round">W 3rd St</text>
<text x="1095.8" y="349.5" font-size="10.6" fill="#84705f" text-anchor="start" textLength="47.3" lengthAdjust="spacingAndGlyphs" font-weight="700" letter-spacing="0.3" font-variant="small-caps" stroke="#f4f2ec" stroke-width="2.2" stroke-opacity=".85" paint-order="stroke" stroke-linejoin="round">San Pedro</text>
<text x="1030.3" y="358.8" font-size="10.8" fill="#9c7f72" text-anchor="middle" stroke="#f4f2ec" stroke-width="2.2" stroke-opacity=".85" paint-order="stroke" stroke-linejoin="round">Providence</text>
<text x="1030.3" y="370.9" font-size="10.8" fill="#9c7f72" text-anchor="middle" stroke="#f4f2ec" stroke-width="2.2" stroke-opacity=".85" paint-order="stroke" stroke-linejoin="round">Lit&#x27;l Co</text>
<text x="1030.3" y="383.0" font-size="10.8" fill="#9c7f72" text-anchor="middle" stroke="#f4f2ec" stroke-width="2.2" stroke-opacity=".85" paint-order="stroke" stroke-linejoin="round">Mary</text>
<text x="1030.3" y="395.1" font-size="10.8" fill="#9c7f72" text-anchor="middle" stroke="#f4f2ec" stroke-width="2.2" stroke-opacity=".85" paint-order="stroke" stroke-linejoin="round">Medical</text>
<text x="1030.3" y="407.2" font-size="10.8" fill="#9c7f72" text-anchor="middle" stroke="#f4f2ec" stroke-width="2.2" stroke-opacity=".85" paint-order="stroke" stroke-linejoin="round">Center</text>
<text x="1052.5" y="383.9" font-size="10.8" fill="#3c3c3c" text-anchor="start" textLength="37.5" lengthAdjust="spacingAndGlyphs" stroke="#f4f2ec" stroke-width="2.2" stroke-opacity=".85" paint-order="stroke" stroke-linejoin="round">W 6th St</text>
<text x="1166.0" y="385.5" font-size="10.6" fill="#84705f" text-anchor="start" textLength="86.6" lengthAdjust="spacingAndGlyphs" font-weight="700" font-variant="small-caps" stroke="#f4f2ec" stroke-width="2.2" stroke-opacity=".85" paint-order="stroke" stroke-linejoin="round">Central San Pedro</text>
<text x="1192.9" y="375.7" font-size="10.8" fill="#3c3c3c" text-anchor="start" transform="rotate(-90.0 1192.9 375.7)" textLength="50.3" lengthAdjust="spacingAndGlyphs" stroke="#f4f2ec" stroke-width="2.2" stroke-opacity=".85" paint-order="stroke" stroke-linejoin="round">S Gaffey St</text>
<text x="318.0" y="341.9" font-size="10.6" fill="#84705f" text-anchor="start" textLength="79.2" lengthAdjust="spacingAndGlyphs" font-weight="700" font-variant="small-caps" stroke="#f4f2ec" stroke-width="2.2" stroke-opacity=".85" paint-order="stroke" stroke-linejoin="round">Portuguese Bend</text>
<text x="279.0" y="355.8" font-size="12.5" fill="#6a6a6a" text-anchor="start" stroke="#f4f2ec" stroke-width="2.2" stroke-opacity=".85" paint-order="stroke" stroke-linejoin="round">nd</text>
<text x="744.8" y="351.8" font-size="10.6" fill="#84705f" text-anchor="start" textLength="69.5" lengthAdjust="spacingAndGlyphs" font-weight="700" font-variant="small-caps" stroke="#f4f2ec" stroke-width="2.2" stroke-opacity=".85" paint-order="stroke" stroke-linejoin="round">San Pedro Hill</text>
<text x="693.8" y="409.2" font-size="10.6" fill="#84705f" text-anchor="start" textLength="87.7" lengthAdjust="spacingAndGlyphs" font-weight="700" font-variant="small-caps" stroke="#f4f2ec" stroke-width="2.2" stroke-opacity=".85" paint-order="stroke" stroke-linejoin="round">East Rancho Palos</text>
<text x="723.0" y="419.7" font-size="10.6" fill="#84705f" text-anchor="start" textLength="30.0" lengthAdjust="spacingAndGlyphs" font-weight="700" font-variant="small-caps" stroke="#f4f2ec" stroke-width="2.2" stroke-opacity=".85" paint-order="stroke" stroke-linejoin="round">Verdes</text>
<text x="901.5" y="368.5" font-size="10.8" fill="#3c3c3c" text-anchor="start" transform="rotate(13.4 901.5 368.5)" textLength="41.1" lengthAdjust="spacingAndGlyphs" stroke="#f4f2ec" stroke-width="2.2" stroke-opacity=".85" paint-order="stroke" stroke-linejoin="round">El Rey Rd</text>
<text x="905.0" y="426.0" font-size="11.2" fill="#3c3c3c" text-anchor="start" transform="rotate(64.8 905.0 426.0)" textLength="77.4" lengthAdjust="spacingAndGlyphs" stroke="#f4f2ec" stroke-width="2.2" stroke-opacity=".85" paint-order="stroke" stroke-linejoin="round">S Western Ave</text>
<text x="850.3" y="515.0" font-size="10.8" fill="#3c3c3c" text-anchor="start" transform="rotate(24.9 850.3 515.0)" textLength="52.2" lengthAdjust="spacingAndGlyphs" stroke="#f4f2ec" stroke-width="2.2" stroke-opacity=".85" paint-order="stroke" stroke-linejoin="round">Palacios Dr</text>
<text x="761.8" y="538.5" font-size="12" fill="#3c3c3c" text-anchor="start" transform="rotate(15.0 761.8 538.5)" textLength="53.6" lengthAdjust="spacingAndGlyphs" stroke="#f4f2ec" stroke-width="2.2" stroke-opacity=".85" paint-order="stroke" stroke-linejoin="round">W 25th St</text>
<text x="976.9" y="550.3" font-size="11" fill="#3c3c3c" text-anchor="start" textLength="46.8" lengthAdjust="spacingAndGlyphs" stroke="#f4f2ec" stroke-width="2.2" stroke-opacity=".85" paint-order="stroke" stroke-linejoin="round">W 19th St</text>
<text x="1061.0" y="560.3" font-size="10.8" fill="#3c3c3c" text-anchor="start" transform="rotate(-90.0 1061.0 560.3)" textLength="57.6" lengthAdjust="spacingAndGlyphs" stroke="#f4f2ec" stroke-width="2.2" stroke-opacity=".85" paint-order="stroke" stroke-linejoin="round">S Walker Ave</text>
<text x="1087.4" y="469.3" font-size="10.8" fill="#3c3c3c" text-anchor="start" transform="rotate(-90.0 1087.4 469.3)" textLength="37.6" lengthAdjust="spacingAndGlyphs" stroke="#f4f2ec" stroke-width="2.2" stroke-opacity=".85" paint-order="stroke" stroke-linejoin="round">S Leland</text>
<text x="1112.5" y="495.8" font-size="10.8" fill="#3c3c3c" text-anchor="start" transform="rotate(-90.0 1112.5 495.8)" textLength="41.8" lengthAdjust="spacingAndGlyphs" stroke="#f4f2ec" stroke-width="2.2" stroke-opacity=".85" paint-order="stroke" stroke-linejoin="round">S Alma St</text>
<text x="1138.1" y="586.2" font-size="10.8" fill="#3c3c3c" text-anchor="start" transform="rotate(-90.0 1138.1 586.2)" textLength="48.7" lengthAdjust="spacingAndGlyphs" stroke="#f4f2ec" stroke-width="2.2" stroke-opacity=".85" paint-order="stroke" stroke-linejoin="round">S Meyler St</text>
<text x="1111.0" y="426.0" font-size="11" fill="#3c3c3c" text-anchor="start" textLength="46.0" lengthAdjust="spacingAndGlyphs" stroke="#f4f2ec" stroke-width="2.2" stroke-opacity=".85" paint-order="stroke" stroke-linejoin="round">W 9th St</text>
<text x="1250.2" y="435.5" font-size="10.6" fill="#84705f" text-anchor="start" textLength="58.6" lengthAdjust="spacingAndGlyphs" font-weight="700" font-variant="small-caps" stroke="#f4f2ec" stroke-width="2.2" stroke-opacity=".85" paint-order="stroke" stroke-linejoin="round">Vinegar Hill</text>
<text x="1280.9" y="473.7" font-size="10.8" fill="#3c3c3c" text-anchor="start" textLength="41.8" lengthAdjust="spacingAndGlyphs" stroke="#f4f2ec" stroke-width="2.2" stroke-opacity=".85" paint-order="stroke" stroke-linejoin="round">W 13th St</text>
<text x="1190.8" y="536.4" font-size="10.8" fill="#3c3c3c" text-anchor="start" transform="rotate(-90.0 1190.8 536.4)" textLength="51.6" lengthAdjust="spacingAndGlyphs" stroke="#f4f2ec" stroke-width="2.2" stroke-opacity=".85" paint-order="stroke" stroke-linejoin="round">S Gaffey St</text>
<text x="1242.1" y="491.0" font-size="10.8" fill="#3c3c3c" text-anchor="start" transform="rotate(-90.0 1242.1 491.0)" textLength="60.6" lengthAdjust="spacingAndGlyphs" stroke="#f4f2ec" stroke-width="2.2" stroke-opacity=".85" paint-order="stroke" stroke-linejoin="round">S Pacific Ave</text>
<text x="1182.4" y="550.6" font-size="11" fill="#3c3c3c" text-anchor="start" textLength="46.3" lengthAdjust="spacingAndGlyphs" stroke="#f4f2ec" stroke-width="2.2" stroke-opacity=".85" paint-order="stroke" stroke-linejoin="round">W 19th St</text>
<text x="1273.0" y="565.0" font-size="10.8" fill="#3c3c3c" text-anchor="start" transform="rotate(-36.6 1273.0 565.0)" textLength="74.7" lengthAdjust="spacingAndGlyphs" stroke="#f4f2ec" stroke-width="2.2" stroke-opacity=".85" paint-order="stroke" stroke-linejoin="round">S Crescent Ave</text>
<text x="1343.5" y="565.0" font-size="10.8" fill="#3c3c3c" text-anchor="start" transform="rotate(-17.2 1343.5 565.0)" textLength="42.4" lengthAdjust="spacingAndGlyphs" stroke="#f4f2ec" stroke-width="2.2" stroke-opacity=".85" paint-order="stroke" stroke-linejoin="round">E 22nd St</text>
<text x="1351.0" y="442.0" font-size="10.8" fill="#3c3c3c" text-anchor="start" transform="rotate(64.6 1351.0 442.0)" textLength="55.3" lengthAdjust="spacingAndGlyphs" stroke="#f4f2ec" stroke-width="2.2" stroke-opacity=".85" paint-order="stroke" stroke-linejoin="round">Nagoya Way</text>
<text x="1374.0" y="407.0" font-size="11.5" fill="#4f78b8" text-anchor="start" transform="rotate(70.9 1374.0 407.0)" textLength="115.1" lengthAdjust="spacingAndGlyphs" font-style="italic">Avalon-San Pedro Ferry</text>
<text x="1466.6" y="523.9" font-size="10.8" fill="#3c3c3c" text-anchor="start" transform="rotate(-90.0 1466.6 523.9)" textLength="59.1" lengthAdjust="spacingAndGlyphs" stroke="#f4f2ec" stroke-width="2.2" stroke-opacity=".85" paint-order="stroke" stroke-linejoin="round">S Seaside Ave</text>
<text x="1541.1" y="404.0" font-size="10.8" fill="#3c3c3c" text-anchor="start" transform="rotate(90.0 1541.1 404.0)" textLength="32.0" lengthAdjust="spacingAndGlyphs" stroke="#f4f2ec" stroke-width="2.2" stroke-opacity=".85" paint-order="stroke" stroke-linejoin="round">Earle St</text>
<text x="1486.7" y="515.5" font-size="13" fill="#4f78b8" text-anchor="start" textLength="96.0" lengthAdjust="spacingAndGlyphs" font-style="italic">Los Angeles Harb</text>
<text x="1450.5" y="364.0" font-size="10.8" fill="#3c3c3c" text-anchor="start" transform="rotate(61.9 1450.5 364.0)" textLength="32.9" lengthAdjust="spacingAndGlyphs" stroke="#f4f2ec" stroke-width="2.2" stroke-opacity=".85" paint-order="stroke" stroke-linejoin="round">Tuna St</text>
<text x="1368.5" y="365.5" font-size="11.5" fill="#4f78b8" text-anchor="start" transform="rotate(-70.1 1368.5 365.5)" textLength="106.9" lengthAdjust="spacingAndGlyphs" font-style="italic">San Pedro-Two Harb</text>
<text x="1399.0" y="258.0" font-size="11.5" fill="#4f78b8" text-anchor="start" transform="rotate(-152.9 1399.0 258.0)" textLength="43.8" lengthAdjust="spacingAndGlyphs" font-style="italic">ors Ferry</text>
<text x="1516.6" y="234.0" font-size="13" fill="#7b6857" text-anchor="start" textLength="62.0" lengthAdjust="spacingAndGlyphs" font-style="italic" stroke="#f4f2ec" stroke-width="2.2" stroke-opacity=".85" paint-order="stroke" stroke-linejoin="round">Terminal Is</text>
<text x="1501.2" y="264.7" font-size="11.4" fill="#9c7f72" text-anchor="start" textLength="78.0" lengthAdjust="spacingAndGlyphs" stroke="#f4f2ec" stroke-width="2.2" stroke-opacity=".85" paint-order="stroke" stroke-linejoin="round">Port of Los Angel</text>
<text x="1531.0" y="354.6" font-size="11.4" fill="#9c7f72" text-anchor="start" textLength="48.0" lengthAdjust="spacingAndGlyphs" stroke="#f4f2ec" stroke-width="2.2" stroke-opacity=".85" paint-order="stroke" stroke-linejoin="round">BNSF-Port</text>
<text x="1254.0" y="207.0" font-size="10.8" fill="#3c3c3c" text-anchor="start" transform="rotate(-19.7 1254.0 207.0)" textLength="22.3" lengthAdjust="spacingAndGlyphs" stroke="#f4f2ec" stroke-width="2.2" stroke-opacity=".85" paint-order="stroke" stroke-linejoin="round">N Fro</text>
<text x="463.0" y="375.5" font-size="10.8" fill="#3c3c3c" text-anchor="start" transform="rotate(32.7 463.0 375.5)" textLength="58.3" lengthAdjust="spacingAndGlyphs" stroke="#f4f2ec" stroke-width="2.2" stroke-opacity=".85" paint-order="stroke" stroke-linejoin="round">Dauntless Dr</text>
<text x="595.5" y="397.0" font-size="10.8" fill="#3c3c3c" text-anchor="start" transform="rotate(37.7 595.5 397.0)" textLength="55.6" lengthAdjust="spacingAndGlyphs" stroke="#f4f2ec" stroke-width="2.2" stroke-opacity=".85" paint-order="stroke" stroke-linejoin="round">Hightide Dr</text>
<path id="pve" d="M676.5 440.5C688 450 697 455 697.5 463C698 472 693 476 700.9 488C706 495 714 499 725 502.5" fill="none"/>
<text font-size="10.8" fill="#3c3c3c" stroke="#f7f3df" stroke-width="2" stroke-opacity=".8" paint-order="stroke" dy="3.6"><textPath href="#pve" textLength="82" lengthAdjust="spacingAndGlyphs">Palos Verdes Dr E</textPath></text>
<text x="584.3" y="506.9" font-size="10.6" fill="#6d8b74" text-anchor="middle" textLength="73.6" lengthAdjust="spacingAndGlyphs">Trump Nat&#x27;l Golf</text>
<text x="584.3" y="519.0" font-size="10.6" fill="#6d8b74" text-anchor="middle" textLength="77.0" lengthAdjust="spacingAndGlyphs">Club-Los Angelas</text>
<text x="638.0" y="531.0" font-size="10.8" fill="#3c3c3c" text-anchor="start" transform="rotate(21.7 638.0 531.0)" textLength="58.1" lengthAdjust="spacingAndGlyphs" stroke="#f4f2ec" stroke-width="2.2" stroke-opacity=".85" paint-order="stroke" stroke-linejoin="round">La Rotonda Dr</text>
<path id="pv1" d="M281.5 377.5Q320 364 344 361T370 365" fill="none"/>
<text font-size="12" fill="#3c3c3c" stroke="#fbe6a8" stroke-width="1.6" stroke-opacity=".7" paint-order="stroke"><textPath href="#pv1" textLength="90" lengthAdjust="spacingAndGlyphs">Palos Verdes Dr S</textPath></text>
<path id="pv2" d="M449.5 422Q470 441 500 452T533 461" fill="none"/>
<text font-size="12" fill="#3c3c3c" stroke="#fbe6a8" stroke-width="1.6" stroke-opacity=".7" paint-order="stroke"><textPath href="#pv2" textLength="91" lengthAdjust="spacingAndGlyphs">Palos Verdes Dr S</textPath></text>
<rect x="986.0" y="192.0" width="18.5" height="15" rx="3" fill="#fff" stroke="#8a8a8a" stroke-width="1"/>
<text x="995.3" y="202.9" font-size="9.5" font-weight="700" fill="#222" text-anchor="middle">213</text>
<rect x="1176.7" y="289.0" width="22" height="14" rx="3" fill="#fff" stroke="#8a8a8a" stroke-width="1"/>
<text x="1187.7" y="299.4" font-size="9.5" font-weight="700" fill="#222" text-anchor="middle">110</text>
<rect x="1440.3" y="228.3" width="21.4" height="15" rx="3" fill="#fff" stroke="#8a8a8a" stroke-width="1"/>
<text x="1451.0" y="239.2" font-size="9.5" font-weight="700" fill="#222" text-anchor="middle">47</text>
<rect x="1198.6" y="249.5" width="11" height="11" fill="#00ee76" stroke="#000" stroke-width="1" opacity="1"/>
<rect x="1182.2" y="275.4" width="11" height="11" fill="#00ee76" stroke="#000" stroke-width="1" opacity="1"/>
<rect x="1182.2" y="313.3" width="11" height="11" fill="#00ee76" stroke="#000" stroke-width="1" opacity="1"/>
<rect x="1143.0" y="315.0" width="11" height="11" fill="#00ee76" stroke="#000" stroke-width="1" opacity="1"/>
<rect x="1088.3" y="315.0" width="11" height="11" fill="#00ee76" stroke="#000" stroke-width="1" opacity="1"/>
<rect x="1035.4" y="314.2" width="11" height="11" fill="#00ee76" stroke="#000" stroke-width="1" opacity="1"/>
<rect x="984.1" y="314.2" width="11" height="11" fill="#00ee76" stroke="#000" stroke-width="1" opacity="1"/>
<rect x="960.4" y="367.6" width="11" height="11" fill="#00ee76" stroke="#000" stroke-width="1" opacity="1"/>
<rect x="920.7" y="389.5" width="11" height="11" fill="#00ee76" stroke="#000" stroke-width="1" opacity="1"/>
<rect x="927.4" y="407.2" width="11" height="11" fill="#00ee76" stroke="#000" stroke-width="1" opacity="1"/>
<rect x="920.7" y="412.6" width="11" height="11" fill="#00ee76" stroke="#000" stroke-width="1" opacity="1"/>
<rect x="955.5" y="407.2" width="11" height="11" fill="#00ee76" stroke="#000" stroke-width="1" opacity="1"/>
<rect x="979.6" y="416.4" width="11" height="11" fill="#00ee76" stroke="#000" stroke-width="1" opacity="1"/>
<rect x="1017.2" y="416.4" width="11" height="11" fill="#00ee76" stroke="#000" stroke-width="1" opacity="1"/>
<rect x="1047.7" y="416.4" width="11" height="11" fill="#00ee76" stroke="#000" stroke-width="1" opacity="1"/>
<rect x="1075.4" y="416.7" width="11" height="11" fill="#00ee76" stroke="#000" stroke-width="1" opacity="1"/>
<rect x="1112.0" y="416.7" width="11" height="11" fill="#00ee76" stroke="#000" stroke-width="1" opacity="1"/>
<rect x="1165.9" y="416.7" width="11" height="11" fill="#00ee76" stroke="#000" stroke-width="1" opacity="1"/>
<rect x="1180.9" y="411.3" width="11" height="11" fill="#111" stroke="#000" stroke-width="1" opacity="1"/>
<rect x="1181.1" y="413.9" width="11" height="11" fill="#00ee76" stroke="#000" stroke-width="1" opacity="1"/>
<rect x="1182.2" y="425.3" width="11" height="11" fill="#00ee76" stroke="#000" stroke-width="1" opacity="1"/>
<rect x="1191.7" y="455.0" width="11" height="11" fill="#00ee76" stroke="#000" stroke-width="1" opacity="1"/>
<rect x="1208.1" y="459.8" width="11" height="11" fill="#00ee76" stroke="#000" stroke-width="1" opacity="1"/>
<rect x="1209.4" y="452.5" width="11" height="11" fill="#00ee76" stroke="#000" stroke-width="1" opacity="1"/>
<rect x="1219.3" y="442.1" width="11" height="11" fill="#00ee76" stroke="#000" stroke-width="1" opacity="1"/>
<rect x="1231.8" y="443.4" width="11" height="11" fill="#00ee76" stroke="#000" stroke-width="1" opacity="1"/>
<rect x="1225.3" y="454.2" width="11" height="11" fill="#00ee76" stroke="#000" stroke-width="1" opacity="1"/>
<rect x="1223.2" y="467.5" width="11" height="11" fill="#00ee76" stroke="#000" stroke-width="1" opacity="1"/>
<rect x="1234.8" y="465.8" width="11" height="11" fill="#00ee76" stroke="#000" stroke-width="1" opacity="1"/>
<rect x="924.5" y="392.4" width="11" height="11" fill="#ffff00" stroke="#000" stroke-width="1" opacity="1"/>
<rect x="936.5" y="392.5" width="116" height="41" fill="#fdfdfd" fill-opacity=".86" stroke="#b4b4b4" stroke-width="1"/>
<text x="939.6" y="404.5" font-size="8.8" font-weight="700" fill="#2a2a2a" font-family="DejaVu Sans, Liberation Sans, sans-serif" textLength="88.6" lengthAdjust="spacingAndGlyphs">Hour: 11:35:22 PM</text>
<text x="939.6" y="416.6" font-size="8.8" font-weight="700" fill="#2a2a2a" font-family="DejaVu Sans, Liberation Sans, sans-serif" textLength="110" lengthAdjust="spacingAndGlyphs">Vehicle: idrive Van SB</text>
<text x="939.6" y="428.6" font-size="8.8" font-weight="700" fill="#2a2a2a" font-family="DejaVu Sans, Liberation Sans, sans-serif" textLength="95" lengthAdjust="spacingAndGlyphs">Speed: 11.97 (MPH)</text>
<path d="M279 199h395v26.6H309v109.4H279z" fill="#5171a0" fill-opacity=".9"/>
<text x="283" y="203" font-size="11" fill="#3d5c8c" transform="rotate(62 283 203)">de rip Dr</text>
<text x="366.8" y="217.3" font-size="10" font-weight="700" fill="#fff" font-family="DejaVu Sans, Liberation Sans, sans-serif" textLength="28" lengthAdjust="spacingAndGlyphs">Road</text>
<text x="419.2" y="217.3" font-size="10" fill="#fff" font-family="DejaVu Sans, Liberation Sans, sans-serif" textLength="30.6" lengthAdjust="spacingAndGlyphs">Aerial</text>
<text x="472.6" y="217.3" font-size="10" fill="#fff" font-family="DejaVu Sans, Liberation Sans, sans-serif" textLength="53.4" lengthAdjust="spacingAndGlyphs">Bird's eye</text>
<text x="546.4" y="217.3" font-size="10" font-weight="700" fill="#b3a79d" font-family="DejaVu Sans, Liberation Sans, sans-serif" textLength="35.6" lengthAdjust="spacingAndGlyphs">Labels</text>
<rect x="539" y="206" width="1" height="13" fill="#8aa0c0"/><rect x="588.4" y="206" width="1" height="13" fill="#8aa0c0"/>
<text x="656.9" y="216.4" font-size="10" font-weight="700" fill="#fff" font-family="DejaVu Sans, Liberation Sans, sans-serif" textLength="10" lengthAdjust="spacingAndGlyphs">&lt;&lt;</text>
<path d="M377.4 224.6h7l-3.5-3.4z" fill="#fff"/><path d="M561.2 224.6h7l-3.5-3.4z" fill="#b3a79d"/>
<defs><radialGradient id="cg" cx=".5" cy=".35" r=".75"><stop offset="0" stop-color="#3f78c8"/><stop offset=".55" stop-color="#2a5fb0"/><stop offset="1" stop-color="#17408c"/></radialGradient></defs>
<circle cx="318.3" cy="238.2" r="23.6" fill="#000" fill-opacity=".18"/>
<circle cx="318" cy="237.3" r="22.6" fill="#f4f6fa" stroke="#cfd6e2" stroke-width=".8"/><circle cx="318" cy="237.3" r="20.4" fill="url(#cg)"/>
<path d="M298 240a20.4 14 0 0 0 40 0a30 26 0 0 1-40 0z" fill="#16408a" fill-opacity=".45"/>
<path transform="translate(318 224) rotate(0)" d="M0-4.6l4 4.2h-2.5v4.6h-3v-4.6h-2.5z" fill="#fff"/>
<path transform="translate(318 250.5) rotate(180)" d="M0-4.6l4 4.2h-2.5v4.6h-3v-4.6h-2.5z" fill="#fff"/>
<path transform="translate(304.6 237.3) rotate(270)" d="M0-4.6l4 4.2h-2.5v4.6h-3v-4.6h-2.5z" fill="#fff"/>
<path transform="translate(331.4 237.3) rotate(90)" d="M0-4.6l4 4.2h-2.5v4.6h-3v-4.6h-2.5z" fill="#fff"/>
<path d="M291.8 290.4l-3.4 3.6" stroke="#9ec4f2" stroke-width="2.2" stroke-linecap="round"/><circle cx="295.4" cy="286.3" r="5" fill="#5578ad" stroke="#fff" stroke-width="1.9"/>
<path d="M292.7 286.3h5.4" stroke="#fff" stroke-width="1.7"/>
<path d="M295.4 283.6v5.4" stroke="#fff" stroke-width="1.7"/>
<path d="M291.8 318.4l-3.4 3.6" stroke="#9ec4f2" stroke-width="2.2" stroke-linecap="round"/><circle cx="295.4" cy="314.3" r="5" fill="#5578ad" stroke="#fff" stroke-width="1.9"/>
<path d="M292.7 314.3h5.4" stroke="#fff" stroke-width="1.7"/>
<path d="M286 566.1L290.7 567.7V583.1L298 578.7L295.8 577.1L293.2 572.1L304.6 575.9V580.9L291 588.8L286 585Z" fill="#4a4a4a" stroke="#f2f5fb" stroke-width="1.6" stroke-linejoin="round" paint-order="stroke"/>
<text x="310.4" y="584.4" font-size="20" fill="#f2f5fb" stroke="#f2f5fb" stroke-width="2.6" stroke-linejoin="round" textLength="36" lengthAdjust="spacingAndGlyphs" aria-hidden="true">bing</text>
<text x="310.4" y="584.4" font-size="20" fill="#4a4a4a" stroke="#4a4a4a" stroke-width=".55" textLength="36" lengthAdjust="spacingAndGlyphs">bing</text>
<text x="1567" y="563.8" font-size="12.6" font-weight="700" fill="#111" text-anchor="end" font-family="Liberation Serif, DejaVu Serif, serif" stroke="#fff" stroke-width="1.6" stroke-opacity=".8" paint-order="stroke">0.7 miles</text>
<rect x="1423.4" y="568.3" width="143.6" height="4.6" fill="#abc7f1" stroke="#000" stroke-width="1"/>
<text x="1363.3" y="586.6" font-size="9.4" font-weight="700" fill="#222" font-family="Liberation Serif, DejaVu Serif, serif" stroke="#fff" stroke-width="1.8" stroke-opacity=".85" paint-order="stroke" textLength="204" lengthAdjust="spacingAndGlyphs" xml:space="preserve">© 2014 Microsoft Corporation    © 2010 NAVTEQ    © AND</text>
</svg>
<!-- sec_chart -->
<div class="panel" style="left:275px;top:601px;width:1306px;height:296px"><div class="phead" style="height:19px"></div></div>
<div class="abs" style="left:1563px;top:607px;width:9px;height:7px;border:2px solid #72747f;background:#fff"></div>
<div class="abs" style="left:359px;top:621px;width:1216px;height:272px;background:#fff;border:1px solid #a9abb8"></div>
<div class="abs" style="left:277px;top:624px;width:83px;height:33px;background:#fff;border:1px solid #a9abb8;border-right:none"></div>
<div class="abs" style="left:279px;top:657px;width:80px;height:30px;background:linear-gradient(#e9eaee,#dcdde3);border:1px solid #a9abb8;border-right:none"></div>
<div class="abs" style="left:279px;top:688px;width:80px;height:30px;background:linear-gradient(#e9eaee,#dcdde3);border:1px solid #a9abb8;border-right:none"></div>
<div class="t" style="left:284.80px;top:635.69px;font-size:11px;color:#1b1b25;transform:scaleX(0.9852);">Time report</div>
<div class="t" style="left:286.40px;top:666.69px;font-size:11px;color:#33343f;transform:scaleX(0.9654);">Speed graphic</div>
<div class="t" style="left:286.40px;top:697.69px;font-size:11px;color:#33343f;transform:scaleX(1.0220);">Route report</div>
<div class="abs" style="left:367px;top:629px;width:1200px;height:255px;background:#fff;border:1px solid #a3a5b3"></div>
<svg class="abs" style="left:367px;top:629px" width="1200" height="255" viewBox="367 629 1200 255" font-family="Liberation Sans, sans-serif" shape-rendering="crispEdges">
<line x1="498.5" y1="641" x2="498.5" y2="839" stroke="#dcdcdc" stroke-width="1"/>
<line x1="498.5" y1="840" x2="498.5" y2="845" stroke="#9a9a9a" stroke-width="1"/>
<line x1="544.5" y1="641" x2="544.5" y2="839" stroke="#dcdcdc" stroke-width="1"/>
<line x1="544.5" y1="840" x2="544.5" y2="845" stroke="#9a9a9a" stroke-width="1"/>
<line x1="590.5" y1="641" x2="590.5" y2="839" stroke="#dcdcdc" stroke-width="1"/>
<line x1="590.5" y1="840" x2="590.5" y2="845" stroke="#9a9a9a" stroke-width="1"/>
<line x1="637.5" y1="641" x2="637.5" y2="839" stroke="#dcdcdc" stroke-width="1"/>
<line x1="637.5" y1="840" x2="637.5" y2="845" stroke="#9a9a9a" stroke-width="1"/>
<line x1="683.5" y1="641" x2="683.5" y2="839" stroke="#dcdcdc" stroke-width="1"/>
<line x1="683.5" y1="840" x2="683.5" y2="845" stroke="#9a9a9a" stroke-width="1"/>
<line x1="729.5" y1="641" x2="729.5" y2="839" stroke="#dcdcdc" stroke-width="1"/>
<line x1="729.5" y1="840" x2="729.5" y2="845" stroke="#9a9a9a" stroke-width="1"/>
<line x1="775.5" y1="641" x2="775.5" y2="839" stroke="#dcdcdc" stroke-width="1"/>
<line x1="775.5" y1="840" x2="775.5" y2="845" stroke="#9a9a9a" stroke-width="1"/>
<line x1="822.5" y1="641" x2="822.5" y2="839" stroke="#dcdcdc" stroke-width="1"/>
<line x1="822.5" y1="840" x2="822.5" y2="845" stroke="#9a9a9a" stroke-width="1"/>
<line x1="868.5" y1="641" x2="868.5" y2="839" stroke="#dcdcdc" stroke-width="1"/>
<line x1="868.5" y1="840" x2="868.5" y2="845" stroke="#9a9a9a" stroke-width="1"/>
<line x1="914.5" y1="641" x2="914.5" y2="839" stroke="#dcdcdc" stroke-width="1"/>
<line x1="914.5" y1="840" x2="914.5" y2="845" stroke="#9a9a9a" stroke-width="1"/>
<line x1="960.5" y1="641" x2="960.5" y2="839" stroke="#dcdcdc" stroke-width="1"/>
<line x1="960.5" y1="840" x2="960.5" y2="845" stroke="#9a9a9a" stroke-width="1"/>
<line x1="1006.5" y1="641" x2="1006.5" y2="839" stroke="#dcdcdc" stroke-width="1"/>
<line x1="1006.5" y1="840" x2="1006.5" y2="845" stroke="#9a9a9a" stroke-width="1"/>
<line x1="1053.5" y1="641" x2="1053.5" y2="839" stroke="#dcdcdc" stroke-width="1"/>
<line x1="1053.5" y1="840" x2="1053.5" y2="845" stroke="#9a9a9a" stroke-width="1"/>
<line x1="1099.5" y1="641" x2="1099.5" y2="839" stroke="#dcdcdc" stroke-width="1"/>
<line x1="1099.5" y1="840" x2="1099.5" y2="845" stroke="#9a9a9a" stroke-width="1"/>
<line x1="1145.5" y1="641" x2="1145.5" y2="839" stroke="#dcdcdc" stroke-width="1"/>
<line x1="1145.5" y1="840" x2="1145.5" y2="845" stroke="#9a9a9a" stroke-width="1"/>
<line x1="1191.5" y1="641" x2="1191.5" y2="839" stroke="#dcdcdc" stroke-width="1"/>
<line x1="1191.5" y1="840" x2="1191.5" y2="845" stroke="#9a9a9a" stroke-width="1"/>
<line x1="1238.5" y1="641" x2="1238.5" y2="839" stroke="#dcdcdc" stroke-width="1"/>
<line x1="1238.5" y1="840" x2="1238.5" y2="845" stroke="#9a9a9a" stroke-width="1"/>
<line x1="1284.5" y1="641" x2="1284.5" y2="839" stroke="#dcdcdc" stroke-width="1"/>
<line x1="1284.5" y1="840" x2="1284.5" y2="845" stroke="#9a9a9a" stroke-width="1"/>
<line x1="1330.5" y1="641" x2="1330.5" y2="839" stroke="#dcdcdc" stroke-width="1"/>
<line x1="1330.5" y1="840" x2="1330.5" y2="845" stroke="#9a9a9a" stroke-width="1"/>
<rect x="478.5" y="640.5" width="871" height="199" fill="none" stroke="#a8a8a8" stroke-width="1"/>
<line x1="473" y1="690.5" x2="478" y2="690.5" stroke="#9a9a9a"/><line x1="473" y1="789.5" x2="478" y2="789.5" stroke="#9a9a9a"/>
<rect x="549.8" y="660" width="11.2" height="61" fill="#007000" shape-rendering="auto"/>
<rect x="550.8" y="660" width="0.8" height="61" fill="#e00000" shape-rendering="auto"/>
<rect x="553.6" y="660" width="0.8" height="61" fill="#7a2a00" shape-rendering="auto"/>
<rect x="558.6" y="660" width="2.4" height="61" fill="#e00000" shape-rendering="auto"/>
<rect x="961.8" y="660" width="11.2" height="61" fill="#007000" shape-rendering="auto"/>
<rect x="963.2" y="660" width="0.8" height="61" fill="#e00000" shape-rendering="auto"/>
<rect x="969.8" y="660" width="3.2" height="61" fill="#e00000" shape-rendering="auto"/>
<rect x="1103.1" y="660" width="6.1" height="61" fill="#e00000" shape-rendering="auto"/>
<rect x="1109.2" y="660" width="0.8" height="61" fill="#007000" shape-rendering="auto"/>
<rect x="1110.0" y="660" width="0.8" height="61" fill="#e00000" shape-rendering="auto"/>
<rect x="1114.0" y="660" width="1.9" height="61" fill="#007000" shape-rendering="auto"/>
<rect x="1115.9" y="660" width="2.1" height="61" fill="#e00000" shape-rendering="auto"/>
<rect x="1118.0" y="660" width="4.0" height="61" fill="#007000" shape-rendering="auto"/>
<rect x="1122.0" y="660" width="0.8" height="61" fill="#e00000" shape-rendering="auto"/>
<rect x="1127.0" y="660" width="2.7" height="61" fill="#e00000" shape-rendering="auto"/>
<rect x="1128.0" y="660" width="0.6" height="61" fill="#007000" shape-rendering="auto"/>
<rect x="1129.7" y="660" width="87.4" height="61" fill="#007000" shape-rendering="auto"/>
<rect x="1263.9" y="660" width="1.6" height="61" fill="#007000" shape-rendering="auto"/>
<rect x="1266.3" y="660" width="2.6" height="61" fill="#8a3a10" shape-rendering="auto"/>
<rect x="1266.3" y="660" width="0.9" height="61" fill="#007000" shape-rendering="auto"/>
<rect x="1272.1" y="660" width="2.1" height="61" fill="#007000" shape-rendering="auto"/>
<rect x="1274.2" y="660" width="2.9" height="61" fill="#e00000" shape-rendering="auto"/>
<rect x="1275.4" y="660" width="0.6" height="61" fill="#007000" shape-rendering="auto"/>
<rect x="560.2" y="759" width="402.4" height="61" fill="#808080" stroke="#6a6a6a" stroke-width=".6" shape-rendering="auto"/>
<rect x="972.1" y="759" width="131.6" height="61" fill="#808080" stroke="#6a6a6a" stroke-width=".6" shape-rendering="auto"/>
<rect x="1104.7" y="759" width="1.3" height="61" fill="#808080" stroke="#6a6a6a" stroke-width=".6" shape-rendering="auto"/>
<rect x="1111.1" y="759" width="3.7" height="61" fill="#808080" stroke="#6a6a6a" stroke-width=".6" shape-rendering="auto"/>
<rect x="1122.0" y="759" width="5.8" height="61" fill="#808080" stroke="#6a6a6a" stroke-width=".6" shape-rendering="auto"/>
<rect x="1216.3" y="759" width="49.2" height="61" fill="#808080" stroke="#6a6a6a" stroke-width=".6" shape-rendering="auto"/>
<rect x="1268.4" y="759" width="4.2" height="61" fill="#808080" stroke="#6a6a6a" stroke-width=".6" shape-rendering="auto"/>
<rect x="1276.0" y="759" width="2.0" height="61" fill="#808080" stroke="#6a6a6a" stroke-width=".6" shape-rendering="auto"/>
<line x1="1265.5" y1="641" x2="1265.5" y2="839" stroke="#0000e0" stroke-width="1.2"/>
<text x="1268.2" y="774" font-size="11.3" fill="#0000e0" transform="rotate(90 1268.2 774)" textLength="60" lengthAdjust="spacingAndGlyphs">11:35:22 PM</text>
<rect x="1360.5" y="640.5" width="195" height="57" fill="#fff" stroke="#a8a8a8"/>
<rect x="1364" y="644.0" width="18" height="14" fill="#007000"/>
<rect x="1364" y="662.2" width="18" height="14" fill="#ff0000"/>
<rect x="1364" y="680.4" width="18" height="14" fill="#808080"/>
</svg>
<div class="t" style="left:1386.20px;top:645.89px;font-size:11px;color:#111;">Journey time: 2 hr 33 min (18%)</div>
<div class="t" style="left:1386.20px;top:663.99px;font-size:11px;color:#111;transform:scaleX(0.9933);">Idle time: 16 min 27 sec (1%)</div>
<div class="t" style="left:1386.20px;top:682.09px;font-size:11px;color:#111;transform:scaleX(0.9857);">Parking time: 12 hr 51 min (81%)</div>
<div class="t" style="left:376.00px;top:685.09px;font-size:11px;color:#111;transform:scaleX(0.9958);">Journey / Idle time</div>
<div class="t" style="left:407.50px;top:784.09px;font-size:11px;color:#111;transform:scaleX(0.9486);">Parking time</div>
<div class="t" style="left:478.00px;top:850.09px;font-size:11px;color:#111;transform:scaleX(0.9911);">7:00 AM</div>
<div class="t" style="left:524.23px;top:865.29px;font-size:11px;color:#111;transform:scaleX(0.9911);">8:00 AM</div>
<div class="t" style="left:570.45px;top:850.09px;font-size:11px;color:#111;transform:scaleX(0.9911);">9:00 AM</div>
<div class="t" style="left:613.92px;top:865.29px;font-size:11px;color:#111;transform:scaleX(0.9788);">10:00 AM</div>
<div class="t" style="left:660.15px;top:850.09px;font-size:11px;color:#111;">11:00 AM</div>
<div class="t" style="left:706.38px;top:865.29px;font-size:11px;color:#111;transform:scaleX(0.9662);">12:00 PM</div>
<div class="t" style="left:755.35px;top:850.09px;font-size:11px;color:#111;transform:scaleX(0.9764);">1:00 PM</div>
<div class="t" style="left:801.58px;top:865.29px;font-size:11px;color:#111;transform:scaleX(0.9764);">2:00 PM</div>
<div class="t" style="left:847.80px;top:850.09px;font-size:11px;color:#111;transform:scaleX(0.9764);">3:00 PM</div>
<div class="t" style="left:894.03px;top:865.29px;font-size:11px;color:#111;transform:scaleX(0.9764);">4:00 PM</div>
<div class="t" style="left:940.25px;top:850.09px;font-size:11px;color:#111;transform:scaleX(0.9764);">5:00 PM</div>
<div class="t" style="left:986.48px;top:865.29px;font-size:11px;color:#111;transform:scaleX(0.9764);">6:00 PM</div>
<div class="t" style="left:1032.70px;top:850.09px;font-size:11px;color:#111;transform:scaleX(0.9764);">7:00 PM</div>
<div class="t" style="left:1078.93px;top:865.29px;font-size:11px;color:#111;transform:scaleX(0.9764);">8:00 PM</div>
<div class="t" style="left:1125.15px;top:850.09px;font-size:11px;color:#111;transform:scaleX(0.9764);">9:00 PM</div>
<div class="t" style="left:1168.62px;top:865.29px;font-size:11px;color:#111;transform:scaleX(0.9662);">10:00 PM</div>
<div class="t" style="left:1214.85px;top:850.09px;font-size:11px;color:#111;transform:scaleX(0.9831);">11:00 PM</div>
<div class="t" style="left:1261.08px;top:865.29px;font-size:11px;color:#111;transform:scaleX(0.9788);">12:00 AM</div>
<div class="t" style="left:1310.05px;top:850.09px;font-size:11px;color:#111;transform:scaleX(0.9911);">1:00 AM</div>
<!-- sec_bottom -->
<div class="abs" style="left:4px;top:899px;width:1577px;height:50px;background:#3d3d3d"></div>
<div class="abs" style="left:25px;top:907px;width:156px;height:36px;border:1px solid #fff"></div>
<div class="btn" style="left:28px;background:#81828f"></div>
<div class="btn" style="left:191px;background:#81828f"></div>
<div class="btn" style="left:354px;background:#81828f"></div>
<div class="btn" style="left:517px;background:#b9babf"></div>
<div class="t" style="left:55.30px;top:919.69px;font-size:11px;color:#fff;transform:scaleX(0.9388);">Show Gps Selection</div>
<div class="t" style="left:222.25px;top:919.69px;font-size:11px;color:#fff;transform:scaleX(0.9778);">Create Gps Event</div>
<div class="t" style="left:362.15px;top:919.69px;font-size:11px;color:#fff;">Export / Print Route Report</div>
<div class="t" style="left:536.00px;top:919.69px;font-size:11px;color:#e6e6ea;transform:scaleX(0.9655);">Play Selected X1 Event</div>
</body></html>
